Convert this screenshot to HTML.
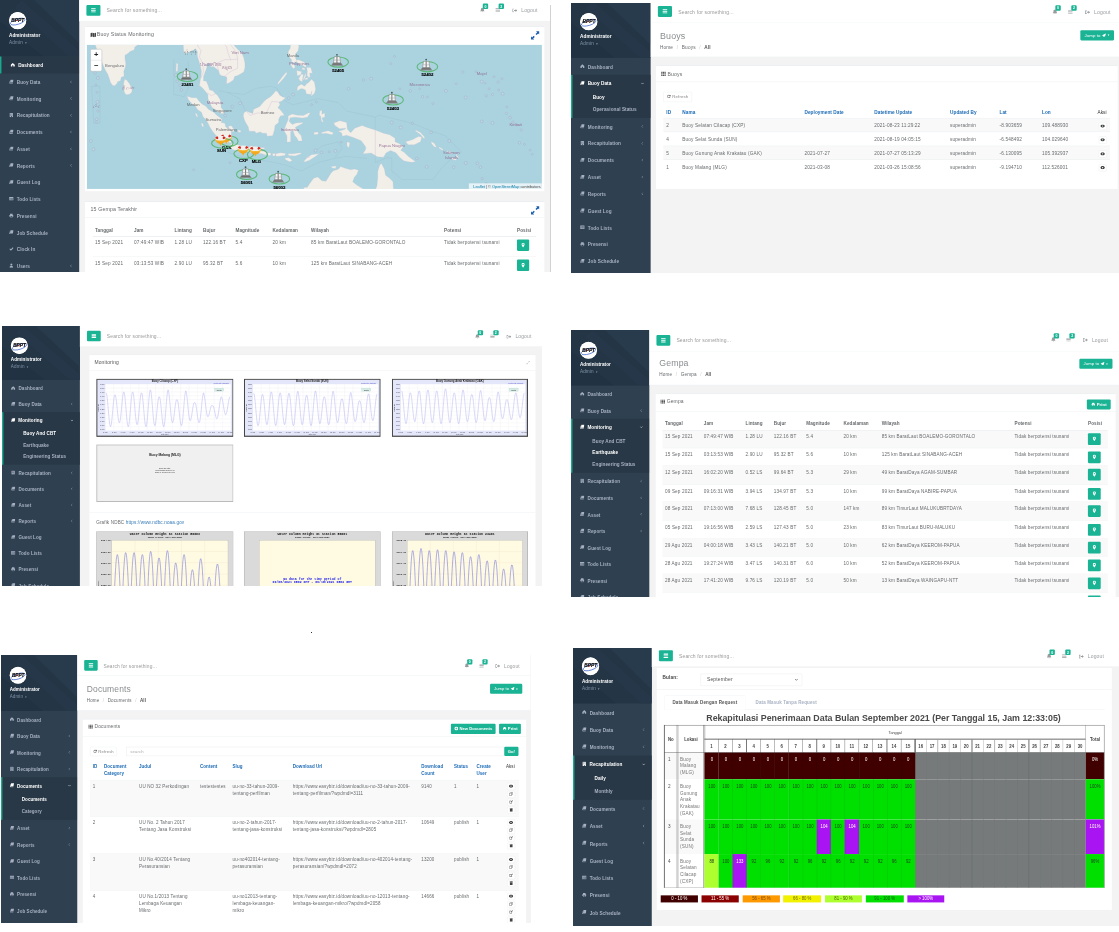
<!DOCTYPE html><html lang="id"><head><meta charset="utf-8"><title>Buoy Monitoring Screens</title><style>
*{box-sizing:border-box}
html,body{margin:0;padding:0}
body{width:1119px;height:932px;position:relative;overflow:hidden;background:#fff;font-family:"Liberation Sans",sans-serif;}
.panel{position:absolute;overflow:hidden;background:#f3f3f4}
.inner{position:absolute;left:0;top:0;transform-origin:0 0;background:#f3f3f4;color:#676a6c;font-size:13px;line-height:18.57px;overflow:hidden;letter-spacing:.4px;filter:contrast(1)}
.inner b,.th,.thb,.mi,.si,.nm,.btn{letter-spacing:.15px}
svg text{letter-spacing:0}
.ab{position:absolute}
.sb{position:absolute;left:0;top:0;width:220px;height:100%;background:#2f4050;overflow:hidden}
.nh{position:relative;background:#243646;overflow:hidden}
.nh .pat{position:absolute;left:0;top:0;width:220px;height:100%}
.logo{position:absolute;left:25px;width:48px;height:48px;border-radius:50%;background:#fff;overflow:hidden}
.nm{position:absolute;left:25px;color:#fff;font-weight:bold;font-size:13px;white-space:nowrap}
.rl{position:absolute;left:25px;color:#8095a8;font-size:13px;white-space:nowrap}
.mi{position:relative;height:46.5px;color:#a7b1c2;font-weight:bold;font-size:13px;white-space:nowrap}
.mi .ic{position:absolute;left:25px;top:16px;width:13px;height:13px}
.mi .tx{position:absolute;left:46.5px;top:16.5px}
.mi .ar{position:absolute;left:194px}
.grp{background:#293846;border-left:4px solid #19aa8d;padding-bottom:8px}
.grp .mi{color:#fff}
.grp .mi .ic{left:21px}
.grp .mi .tx{left:42px}
.grp .mi .ar{left:189px}
.si{height:32.5px;padding:8px 0 0 56px;color:#a7b1c2;font-weight:bold;font-size:13px;white-space:nowrap}
.si.on{color:#fff}
.act1{background:#293846;border-left:4px solid #19aa8d;color:#fff}
.act1 .ic{left:25px}.act1 .tx{left:46.5px}
.nav{position:absolute;left:220px;top:0;right:0;background:#fff;border-bottom:1px solid #e7eaec}
.hb{position:absolute;background:#1ab394;border-radius:3px}
.hb i{position:absolute;left:13px;width:13px;height:2.6px;background:#fff;border-radius:1px}
.srch{position:absolute;color:#9a9a9a;font-size:14px;white-space:nowrap;margin-top:2px}
.tr{position:absolute;color:#999c9e;font-size:14px;white-space:nowrap}
.bdg{position:absolute;background:#1ab394;color:#fff;font-size:10px;font-weight:bold;border-radius:3px;text-align:center;line-height:15px;height:15px;width:15px}
.ibox{position:absolute;background:#fff;border-top:2px solid #e7eaec}
.ibt{position:absolute;left:0;right:0;top:0;border-bottom:1px solid #e7eaec;color:#676a6c;font-size:14px;white-space:nowrap}
.hd{position:absolute;left:220px;right:0;background:#fff;border-bottom:1px solid #e7eaec}
.h2{position:absolute;font-size:24.5px;color:#8a8d8f;white-space:nowrap;line-height:28px}
.bc{position:absolute;font-size:13px;color:#676a6c;white-space:nowrap}
.bc s{text-decoration:none;color:#ccc;padding:0 6px}
.bc b{color:#555}
.btn{position:absolute;background:#1ab394;color:#fff;border-radius:3px;font-size:12px;font-weight:bold;text-align:center;white-space:nowrap}
.t{position:absolute;white-space:nowrap}
.th{position:absolute;white-space:nowrap;font-weight:bold;color:#676a6c}
.thb{position:absolute;white-space:nowrap;font-weight:bold;color:#1c6bb5}
.ln{position:absolute;height:1px;background:#e7eaec}
.zb{position:absolute;background:#f9f9f9}
.t,.th,.thb{margin-top:2px}
</style></head><body><div class="panel" style="left:0px;top:0px;width:551px;height:272px"><div class="inner" style="top:0.00px;width:1530.6px;height:757.6px;transform:scale(0.36,0.36)"><div class="sb"><div class="nh" style="height:157px"><svg class="pat" viewBox="0 0 220 157" preserveAspectRatio="none"><path d="M95 0 L220 0 L220 120 Z" fill="#283b4c"/><path d="M0 60 L120 157 L0 157 Z" fill="#213242"/><path d="M60 0 L220 140 L220 157 L190 157 L40 20 Z" fill="#263949" opacity=".6"/></svg><div class="logo" style="top:33px"><svg viewBox="0 0 48 48" width="48" height="48"><circle cx="24" cy="24" r="24" fill="#fff"/><ellipse cx="24" cy="27" rx="21" ry="7.500" fill="none" stroke="#2450c8" stroke-width="1.700" transform="rotate(-17 24 27)"/><text x="24.500" y="27.500" font-family="Liberation Sans,sans-serif" font-size="13.500" font-weight="bold" font-style="italic" text-anchor="middle" fill="#0a0a0a" stroke="#0a0a0a" stroke-width="0.500">BPPT</text><path d="M19 25.500 L23.500 21.500 L22.500 25.500 Z" fill="#d22"/></svg></div><div class="nm" style="top:89px">Administrator</div><div class="rl" style="top:107.5px">Admin <span style="font-size:8px">&#9660;</span></div></div><div class="mi act1"><svg class="ic" viewBox="0 0 13 13"><path d="M1 7 L6.5 2 L12 7 L12 12 L8 12 L8 8.5 L5 8.5 L5 12 L1 12 Z" fill="#fff"/></svg><span class="tx">Dashboard</span></div><div class="mi"><svg class="ic" viewBox="0 0 13 13"><path d="M4.300 1.500H12.600L11 9.300H2.700Z" fill="#a7b1c2"/><path d="M2.900 3.300L0.700 9.800Q0.300 12.200 2.500 12.200H10.400L10.900 10.700H3Q1.800 10.700 2.200 9.500L3.600 3.300Z" fill="#a7b1c2"/></svg><span class="tx">Buoy Data</span><svg class="ar" width="6" height="9" viewBox="0 0 6 9" style="top:19px"><path d="M5 1L1.500 4.500L5 8" fill="none" stroke="#a7b1c2" stroke-width="1.300"/></svg></div><div class="mi"><svg class="ic" viewBox="0 0 13 13"><path d="M4.300 1.500H12.600L11 9.300H2.700Z" fill="#a7b1c2"/><path d="M2.900 3.300L0.700 9.800Q0.300 12.200 2.500 12.200H10.400L10.900 10.700H3Q1.800 10.700 2.200 9.500L3.600 3.300Z" fill="#a7b1c2"/></svg><span class="tx">Monitoring</span><svg class="ar" width="6" height="9" viewBox="0 0 6 9" style="top:19px"><path d="M5 1L1.500 4.500L5 8" fill="none" stroke="#a7b1c2" stroke-width="1.300"/></svg></div><div class="mi"><svg class="ic" viewBox="0 0 13 13"><path d="M2 1 H11 V12.5 H2 Z" fill="#a7b1c2"/><path d="M4 3h1.6v1.6H4zM7.4 3H9v1.6H7.4zM4 6h1.6v1.6H4zM7.4 6H9v1.6H7.4zM5.5 9.5h2v3h-2z" fill="#2f4050"/></svg><span class="tx">Recapitulation</span><svg class="ar" width="6" height="9" viewBox="0 0 6 9" style="top:19px"><path d="M5 1L1.500 4.500L5 8" fill="none" stroke="#a7b1c2" stroke-width="1.300"/></svg></div><div class="mi"><svg class="ic" viewBox="0 0 13 13"><path d="M4.300 1.500H12.600L11 9.300H2.700Z" fill="#a7b1c2"/><path d="M2.900 3.300L0.700 9.800Q0.300 12.200 2.500 12.200H10.400L10.900 10.700H3Q1.800 10.700 2.200 9.500L3.600 3.300Z" fill="#a7b1c2"/></svg><span class="tx">Documents</span><svg class="ar" width="6" height="9" viewBox="0 0 6 9" style="top:19px"><path d="M5 1L1.500 4.500L5 8" fill="none" stroke="#a7b1c2" stroke-width="1.300"/></svg></div><div class="mi"><svg class="ic" viewBox="0 0 13 13"><path d="M4.300 1.500H12.600L11 9.300H2.700Z" fill="#a7b1c2"/><path d="M2.900 3.300L0.700 9.800Q0.300 12.200 2.500 12.200H10.400L10.900 10.700H3Q1.800 10.700 2.200 9.500L3.600 3.300Z" fill="#a7b1c2"/></svg><span class="tx">Asset</span><svg class="ar" width="6" height="9" viewBox="0 0 6 9" style="top:19px"><path d="M5 1L1.500 4.500L5 8" fill="none" stroke="#a7b1c2" stroke-width="1.300"/></svg></div><div class="mi"><svg class="ic" viewBox="0 0 13 13"><path d="M4.300 1.500H12.600L11 9.300H2.700Z" fill="#a7b1c2"/><path d="M2.900 3.300L0.700 9.800Q0.300 12.200 2.500 12.200H10.400L10.900 10.700H3Q1.800 10.700 2.200 9.500L3.600 3.300Z" fill="#a7b1c2"/></svg><span class="tx">Reports</span><svg class="ar" width="6" height="9" viewBox="0 0 6 9" style="top:19px"><path d="M5 1L1.500 4.500L5 8" fill="none" stroke="#a7b1c2" stroke-width="1.300"/></svg></div><div class="mi"><svg class="ic" viewBox="0 0 13 13"><path d="M4.300 1.500H12.600L11 9.300H2.700Z" fill="#a7b1c2"/><path d="M2.900 3.300L0.700 9.800Q0.300 12.200 2.500 12.200H10.400L10.900 10.700H3Q1.800 10.700 2.200 9.500L3.600 3.300Z" fill="#a7b1c2"/></svg><span class="tx">Guest Log</span></div><div class="mi"><svg class="ic" viewBox="0 0 13 13"><path d="M0.5 2 H12.5 V11.5 H0.5 Z" fill="#a7b1c2"/><path d="M1.8 5h2.6v1.5H1.8zM5.3 5h2.6v1.5H5.3zM8.8 5h2.6v1.5H8.8zM1.8 8h2.6v1.5H1.8zM5.3 8h2.6v1.5H5.3zM8.8 8h2.6v1.5H8.8z" fill="#2f4050"/></svg><span class="tx">Todo Lists</span></div><div class="mi"><svg class="ic" viewBox="0 0 13 13"><path d="M3 1.5h7V5H3z M1 5h11v5H10v2.5H3V10H1z" fill="#a7b1c2"/><path d="M4 8.5h5v3H4z" fill="#2f4050"/></svg><span class="tx">Presensi</span></div><div class="mi"><svg class="ic" viewBox="0 0 13 13"><path d="M4.300 1.500H12.600L11 9.300H2.700Z" fill="#a7b1c2"/><path d="M2.900 3.300L0.700 9.800Q0.300 12.200 2.500 12.200H10.400L10.900 10.700H3Q1.800 10.700 2.200 9.500L3.600 3.300Z" fill="#a7b1c2"/></svg><span class="tx">Job Schedule</span></div><div class="mi"><svg class="ic" viewBox="0 0 13 13"><path d="M1 7 L3 5 L5.3 7.4 L10.5 2 L12.5 4 L5.3 11.5 Z" fill="#a7b1c2"/></svg><span class="tx">Clock In</span></div><div class="mi"><svg class="ic" viewBox="0 0 13 13"><circle cx="6.5" cy="3.8" r="2.8" fill="#a7b1c2"/><path d="M1.5 12.5 C1.5 8 4 7 6.5 7 S11.5 8 11.5 12.5 Z" fill="#a7b1c2"/></svg><span class="tx">Users</span><svg class="ar" width="6" height="9" viewBox="0 0 6 9" style="top:19px"><path d="M5 1L1.500 4.500L5 8" fill="none" stroke="#a7b1c2" stroke-width="1.300"/></svg></div></div><div class="nav" style="height:58.5px"><div class="hb" style="left:20px;top:13.5px;width:39px;height:30px"><i style="top:9px"></i><i style="top:13.7px"></i><i style="top:18.4px"></i></div><div class="srch" style="left:76px;top:18px">Search for something...</div><div class="tr" style="right:37.5px;top:20px"><svg width="14" height="12" viewBox="0 0 14 12" style="vertical-align:-1px;margin-right:11px"><path d="M0 1h5v2H2v6h3v2H0z M5 4.5h4V2l5 4-5 4V7.500H5z" fill="#999c9e"/></svg>Logout</div><svg class="ab" style="right:141.5px;top:22px" width="13" height="12" viewBox="0 0 15 13"><path d="M0 1h15v2H0zM0 5.500h15v2H0zM0 10h15v2H0z" fill="#999c9e"/></svg><div class="bdg" style="right:130.5px;top:10px">2</div><svg class="ab" style="right:183.5px;top:21px" width="14" height="14" viewBox="0 0 14 14"><path d="M7 0.500c-3 0-4.200 2.200-4.200 5 0 3-1.800 4-1.800 5h12c0-1-1.800-2-1.800-5 0-2.800-1.200-5-4.200-5zM5.300 11.700a1.800 1.800 0 0 0 3.400 0z" fill="#999c9e"/></svg><div class="bdg" style="right:174.5px;top:10px">0</div></div><div class="ibox" style="left:235.6px;top:72.8px;width:1276.9px;height:458.6px"><div class="ibt" style="height:49.4px;border-bottom:none"><svg class="ab" style="left:15.0px;top:15px" width="16" height="14" viewBox="0 0 16 14"><path d="M0 2.500l4.700-2.300v11.300l-4.700 2.300zM5.600 0.200l4.800 2.300v11.300l-4.800-2.300zM11.300 2.500l4.700-2.300v11.300l-4.700 2.300z" fill="#444"/></svg><span class="ab" style="left:33.3px;top:12px;font-size:14.5px">Buoy Status Monitoring</span><svg class="ab" style="left:1238.1px;top:11px" width="25" height="25" viewBox="0 0 25 25"><path d="M24 1v9l-3-3-4.500 4.500-3-3 4.500-4.500-3-3zM1 24v-9l3 3 4.500-4.500 3 3-4.500 4.500 3 3z" fill="#1c5fb0"/></svg></div><div class="ab" style="left:5.8px;top:49.4px;width:1264.2px;height:400.8px"><svg viewBox="0 0 455.1 144.3" width="100%" height="100%" preserveAspectRatio="none" style="display:block;font-family:&quot;Liberation Sans&quot;,sans-serif"><rect width="455.1" height="144.3" fill="#aad3df"/><g fill="none" stroke="#97b4c9" stroke-width="0.35" opacity=".75"><path d="M87.1 14.4 L87.1 49.9 L97.4 52.0 L101.5 43.7 L101.5 16.5"/><path d="M132.3 45.8 L140.6 47.8 L157.0 49.9 L169.3 43.7 L183.7 41.6 L189.9 43.3"/><path d="M231.0 54.0 L251.5 58.1 L259.8 66.4 L288.5 72.5 L288.5 84.5"/><path d="M288.5 112.6 L288.5 118.0 L300.0 113.0 L305.0 113.4 L305.0 126.4 L315.2 134.8 L346.1 134.8 L354.3 124.3 L362.5 115.9 L374.8 107.6 L358.4 91.1 L346.1 86.9 L325.5 78.7 L292.6 70.5 L288.5 72.5"/><path d="M198.1 120.1 L214.5 126.4 L231.0 118.0 L247.4 113.8 L259.8 111.7 L280.3 113.8"/><path d="M140.6 107.6 L161.1 113.8 L181.7 116.7 L198.1 120.1"/><path d="M189.9 43.3 L198.1 56.1 L206.3 60.2 L222.8 56.1 L231.0 54.0"/><path d="M159.1 66.8 L152.9 54.0 L140.6 47.8"/><path d="M4.9 41.6 L7.0 78.7 L13.2 78.7 L13.2 41.6 L4.9 41.6"/><path d="M226.9 107.6 L235.1 101.4 L251.5 97.2 L255.6 103.4 L247.4 113.8"/></g><g fill="#f2efe9" stroke="#c9c1d0" stroke-width="0.25"><path d="M7.0 -2.8 L9.0 1.5 L10.3 5.4 L12.3 10.5 L14.4 15.2 L16.4 20.7 L18.5 25.3 L21.0 29.5 L22.6 34.1 L23.8 37.9 L25.9 40.8 L27.9 41.2 L30.4 38.7 L30.8 37.0 L33.7 36.2 L34.5 32.5 L37.4 31.6 L37.0 26.6 L38.6 22.4 L39.0 19.0 L38.2 13.9 L38.2 10.5 L41.1 8.8 L43.6 6.7 L47.3 5.4 L48.1 2.4 L52.2 -0.6 L56.3 -3.7 L7.0 -4.1Z"/><path d="M36.6 40.8 L37.8 34.5 L39.9 35.4 L42.7 39.1 L45.2 43.7 L45.2 47.4 L42.7 49.5 L39.5 50.1 L37.8 48.2 L37.0 44.5Z"/><path d="M96.2 -4.1 L96.6 1.5 L97.0 7.5 L100.3 8.8 L103.6 6.7 L106.9 5.4 L108.9 4.1 L110.6 7.1 L110.6 11.4 L112.2 16.5 L113.8 22.4 L114.7 26.6 L114.3 31.2 L113.4 36.2 L112.6 40.8 L114.7 42.4 L117.1 44.9 L119.2 47.4 L121.2 49.9 L121.2 54.0 L122.9 57.7 L124.9 62.3 L127.4 64.3 L130.3 66.4 L134.0 68.8 L137.3 68.8 L137.3 66.4 L134.4 63.1 L134.0 58.6 L133.6 55.3 L130.7 50.7 L128.2 48.7 L126.2 46.2 L122.9 45.3 L121.2 40.4 L119.6 36.6 L116.7 36.2 L116.7 32.0 L118.4 27.4 L120.0 23.2 L120.0 19.0 L123.7 18.6 L123.7 22.0 L127.0 22.0 L129.5 24.1 L131.9 26.2 L132.8 29.5 L134.8 31.2 L138.1 31.6 L140.2 32.9 L139.7 39.1 L142.2 38.3 L146.7 35.4 L148.0 31.6 L150.4 31.2 L153.3 29.5 L157.0 27.4 L158.2 22.8 L158.2 18.6 L157.0 13.1 L155.8 10.1 L153.7 7.1 L150.8 4.5 L148.0 1.5 L145.9 -4.1Z"/><path d="M100.3 51.5 L105.2 53.0 L109.7 53.0 L112.6 56.9 L115.1 59.4 L118.8 61.4 L121.7 64.7 L124.1 66.0 L127.0 67.6 L129.9 70.5 L132.8 72.5 L135.2 74.6 L134.4 77.9 L138.1 78.7 L138.9 82.4 L142.6 84.1 L144.7 86.9 L144.3 91.9 L144.3 98.5 L141.8 97.2 L138.9 98.9 L136.5 95.2 L132.3 92.7 L129.5 91.1 L125.8 86.5 L123.3 82.8 L121.2 78.3 L118.8 74.6 L116.3 72.1 L114.7 67.6 L111.0 65.1 L108.5 61.4 L105.2 59.0 L101.9 55.3Z"/><path d="M141.4 81.6 L144.7 81.2 L147.5 85.3 L147.1 87.3 L144.3 86.1 L142.2 83.2Z"/><path d="M151.2 85.3 L153.7 85.7 L154.1 87.3 L151.7 87.8Z"/><path d="M141.4 102.6 L144.7 98.9 L147.5 99.3 L152.5 100.5 L155.4 102.2 L161.1 103.0 L164.4 101.0 L167.3 102.2 L171.8 103.0 L174.3 106.3 L179.2 106.8 L179.6 110.5 L174.3 108.8 L168.1 108.8 L161.1 107.2 L155.4 106.3 L151.2 106.3 L146.3 105.1 L142.6 103.0Z"/><path d="M172.2 103.0 L177.6 102.8 L177.6 104.3 L172.6 104.3Z"/><path d="M179.6 108.0 L184.1 108.4 L184.1 110.5 L181.7 110.9Z"/><path d="M185.8 108.8 L188.6 108.8 L188.2 111.3 L185.8 111.1Z"/><path d="M189.1 109.2 L193.6 108.0 L198.9 108.8 L198.1 110.9 L191.9 111.7 L189.1 111.7Z"/><path d="M201.4 109.2 L206.3 109.2 L213.7 108.0 L214.5 109.2 L208.4 111.3 L201.8 110.9Z"/><path d="M198.1 113.4 L202.2 113.0 L205.5 115.9 L203.0 117.2 L198.9 115.1Z"/><path d="M216.6 117.2 L220.7 112.6 L224.8 110.1 L232.2 109.2 L228.9 111.7 L222.8 115.5 L218.7 117.2Z"/><path d="M157.0 68.4 L159.5 66.4 L162.3 67.6 L166.0 68.8 L166.9 64.7 L173.0 61.9 L177.1 56.9 L180.0 54.4 L183.7 52.0 L186.2 49.5 L189.1 46.2 L191.1 47.4 L192.8 50.3 L196.0 52.4 L198.9 53.2 L194.8 56.5 L192.3 57.3 L193.2 60.2 L191.1 63.1 L194.0 65.6 L197.7 70.5 L193.6 71.3 L191.9 74.6 L191.9 77.9 L188.2 80.8 L187.8 84.9 L186.6 89.0 L185.8 91.1 L180.4 91.5 L179.6 88.6 L175.9 88.6 L173.4 87.3 L169.3 88.6 L168.1 86.5 L162.3 86.5 L161.5 82.0 L159.1 78.3 L157.4 74.6 L156.6 71.3Z"/><path d="M201.4 71.3 L205.5 69.3 L210.4 70.5 L216.6 70.9 L221.5 68.4 L223.6 68.0 L220.7 72.5 L215.8 73.4 L208.4 72.5 L203.4 73.0 L202.2 76.7 L205.5 79.9 L209.2 78.3 L215.8 77.9 L216.2 78.7 L210.4 81.6 L208.4 82.8 L211.7 88.2 L214.5 91.1 L215.4 96.4 L211.7 96.4 L210.0 93.1 L208.0 91.1 L206.3 86.1 L203.9 86.9 L203.9 93.5 L203.9 97.2 L200.2 97.7 L200.2 91.1 L197.7 86.9 L197.3 85.7 L199.3 79.9 L201.4 75.0Z"/><path d="M233.0 66.4 L235.1 65.6 L235.1 69.7 L238.0 68.4 L238.0 72.5 L235.1 73.0 L236.7 77.9 L234.7 76.7 L233.9 71.3 L232.6 70.5Z"/><path d="M226.9 87.8 L231.0 87.3 L231.8 89.4 L227.7 90.2Z"/><path d="M234.7 87.8 L241.3 86.1 L246.6 88.2 L245.4 90.2 L239.2 88.6 L235.1 89.0Z"/><path d="M204.3 -4.1 L203.4 3.7 L201.4 7.1 L201.8 10.5 L203.0 13.1 L204.7 14.8 L204.7 17.3 L207.6 18.2 L209.6 16.9 L212.9 19.9 L215.8 20.7 L218.2 22.4 L219.5 22.4 L219.1 20.3 L217.4 17.3 L214.5 16.1 L211.7 15.2 L209.6 15.6 L208.8 13.1 L208.8 8.8 L211.3 6.3 L212.1 2.0 L211.3 -4.1Z"/><path d="M219.9 27.0 L222.8 27.9 L223.6 32.0 L221.9 32.9 L221.1 29.5Z"/><path d="M215.4 22.8 L218.7 24.1 L217.4 25.3 L215.4 24.5Z"/><path d="M203.9 19.0 L207.1 19.0 L208.4 22.4 L206.7 24.1 L205.1 22.0Z"/><path d="M190.7 40.0 L193.2 37.9 L196.9 33.7 L200.2 29.1 L199.7 27.4 L196.0 31.6 L191.5 37.5Z"/><path d="M210.0 25.8 L215.0 27.0 L213.7 30.4 L210.4 31.2Z"/><path d="M212.1 33.7 L214.5 29.5 L216.6 29.9 L215.4 37.0 L212.9 35.8Z"/><path d="M216.2 35.0 L218.7 28.3 L219.1 30.8 L217.4 35.0Z"/><path d="M219.9 22.8 L224.0 22.8 L225.6 28.7 L222.8 28.3 L222.4 33.3 L220.3 30.8 L220.7 27.4Z"/><path d="M217.8 34.1 L220.7 32.9 L221.1 34.5 L218.7 35.2Z"/><path d="M210.4 45.8 L210.8 42.0 L214.5 39.5 L217.8 41.6 L219.9 39.1 L221.9 37.9 L224.8 34.5 L227.7 37.5 L228.9 44.5 L227.7 48.7 L224.4 51.5 L225.2 46.2 L224.0 49.9 L219.5 49.1 L218.7 45.3 L216.2 44.1 L213.7 44.1 L210.8 46.2Z"/><path d="M247.0 78.3 L253.2 76.2 L259.8 77.9 L260.6 84.5 L263.9 88.2 L268.0 83.6 L275.4 80.8 L280.3 82.8 L288.5 85.3 L296.7 88.6 L302.9 90.2 L308.3 93.5 L308.3 97.2 L313.2 99.3 L316.5 102.2 L314.0 105.5 L317.3 107.6 L321.4 111.7 L328.8 117.2 L324.7 117.6 L317.3 116.3 L312.8 112.6 L309.1 108.0 L303.7 105.9 L299.2 108.4 L296.7 112.6 L290.6 112.2 L284.4 108.4 L279.9 108.8 L276.2 109.2 L279.1 104.3 L278.7 101.8 L274.5 96.0 L265.9 92.7 L259.8 90.6 L255.6 91.5 L254.8 88.2 L251.5 86.5 L257.7 84.9 L259.3 83.6 L252.8 84.1 L248.2 80.8Z"/><path d="M318.9 97.2 L325.5 95.2 L331.7 91.9 L335.0 92.3 L333.7 97.2 L327.6 100.1 L321.4 100.1Z"/><path d="M328.8 85.3 L333.7 87.8 L337.8 92.3 L337.4 94.4 L333.7 89.8 L328.8 86.5Z"/><path d="M344.4 96.8 L347.7 98.9 L349.8 102.6 L347.3 102.2 L344.8 98.9Z"/><path d="M352.2 102.2 L356.3 104.7 L355.5 105.5 L352.2 103.4Z"/><path d="M360.9 105.9 L365.8 109.2 L365.0 109.7 L360.4 107.2Z"/><path d="M365.0 113.0 L369.9 114.2 L369.1 115.5 L365.4 114.7Z"/><path d="M369.1 108.8 L372.0 113.0 L370.7 113.4 L369.1 110.1Z"/><path d="M260.2 97.2 L263.0 98.1 L262.2 103.0 L260.2 101.4Z"/><path d="M211.3 153.3 L211.7 146.8 L214.5 143.8 L217.0 146.8 L217.0 142.9 L220.7 142.5 L222.8 139.1 L226.9 133.6 L231.0 132.3 L235.1 136.1 L239.2 136.5 L241.7 132.7 L244.1 128.5 L246.6 126.0 L251.5 124.7 L254.0 121.8 L257.7 123.4 L263.9 125.1 L268.0 124.3 L271.7 125.5 L270.0 129.8 L267.6 132.7 L265.9 137.0 L270.0 140.4 L276.2 144.2 L282.4 147.7 L287.7 147.7 L290.2 141.2 L291.0 132.7 L291.0 126.8 L293.0 120.1 L294.7 118.8 L297.6 124.3 L298.8 130.6 L302.9 133.6 L306.2 137.0 L306.6 143.4 L309.1 153.3Z"/><path d="M244.5 121.8 L249.5 121.3 L248.7 123.9 L245.4 123.4Z"/><path d="M89.6 18.6 L91.2 19.0 L90.8 26.6 L89.2 26.6Z"/><path d="M108.1 68.8 L109.7 68.8 L111.4 72.1 L110.1 72.1Z"/><path d="M114.3 78.7 L115.9 78.7 L117.1 81.6 L115.5 82.0Z"/></g><g fill="none" stroke="#c9a9cf" stroke-width="0.3"><path d="M288.5 85.3 L288.5 112.2"/><path d="M159.5 66.4 L163.2 70.9 L170.2 68.4 L179.6 68.4 L185.0 56.9 L192.3 57.3"/><path d="M120.4 47.8 L124.5 51.1 L128.6 49.1"/><path d="M114.3 33.3 L116.7 27.0 L115.9 18.6 L112.6 12.2 L114.3 5.8 L111.0 1.5 L110.6 -4.1"/><path d="M131.9 26.2 L129.9 18.6 L138.5 14.8 L143.9 15.2 L150.8 14.4 L150.8 23.7 L144.3 26.6 L138.1 31.6"/><path d="M143.9 15.2 L141.4 8.8 L139.7 2.0 L136.5 -1.9"/><path d="M150.8 14.4 L149.6 8.0 L146.7 3.7 L141.4 -2.8"/><path d="M219.1 113.4 L222.8 112.6 L223.2 111.7"/></g><g fill="#b9d9e3" stroke="#a29cc0" stroke-width="0.35"><circle cx="261.8" cy="44.1" r="1.3"/><circle cx="276.6" cy="35.4" r="1.1"/><circle cx="284.4" cy="34.1" r="1.5"/><circle cx="304.1" cy="19.0" r="0.9"/><circle cx="307.8" cy="11.8" r="0.9"/><circle cx="313.2" cy="44.1" r="0.9"/><circle cx="323.5" cy="46.2" r="1.3"/><circle cx="332.9" cy="44.1" r="0.9"/><circle cx="335.8" cy="52.0" r="1.1"/><circle cx="340.7" cy="52.4" r="0.9"/><circle cx="346.1" cy="59.0" r="0.9"/><circle cx="359.2" cy="46.2" r="1.5"/><circle cx="378.9" cy="52.8" r="1.5"/><circle cx="369.5" cy="39.1" r="0.9"/><circle cx="376.1" cy="27.4" r="1.1"/><circle cx="389.2" cy="27.0" r="0.9"/><circle cx="395.0" cy="37.0" r="1.5"/><circle cx="398.3" cy="38.7" r="0.9"/><circle cx="402.4" cy="44.1" r="0.9"/><circle cx="405.7" cy="49.9" r="1.1"/><circle cx="411.8" cy="45.3" r="0.9"/><circle cx="415.9" cy="49.1" r="1.5"/><circle cx="407.3" cy="32.0" r="0.9"/><circle cx="411.4" cy="37.5" r="1.1"/><circle cx="415.1" cy="34.1" r="0.9"/><circle cx="399.5" cy="51.1" r="1.1"/><circle cx="395.0" cy="76.7" r="1.3"/><circle cx="405.7" cy="78.3" r="1.5"/><circle cx="419.6" cy="68.8" r="1.1"/><circle cx="420.0" cy="62.3" r="0.9"/><circle cx="423.3" cy="73.0" r="1.3"/><circle cx="426.2" cy="77.5" r="1.1"/><circle cx="430.3" cy="80.4" r="0.9"/><circle cx="434.4" cy="85.3" r="1.1"/><circle cx="432.8" cy="98.1" r="1.3"/><circle cx="443.5" cy="105.5" r="0.9"/><circle cx="445.5" cy="109.7" r="0.9"/><circle cx="437.7" cy="99.7" r="0.9"/><circle cx="325.5" cy="78.7" r="1.1"/><circle cx="314.0" cy="82.8" r="1.5"/><circle cx="305.0" cy="77.9" r="1.5"/><circle cx="344.4" cy="87.8" r="1.3"/><circle cx="362.5" cy="96.4" r="1.5"/><circle cx="378.9" cy="118.4" r="1.5"/><circle cx="390.5" cy="118.8" r="1.3"/><circle cx="393.7" cy="122.6" r="1.3"/><circle cx="395.4" cy="134.0" r="1.1"/><circle cx="397.4" cy="142.1" r="1.1"/><circle cx="400.3" cy="141.2" r="1.1"/><circle cx="399.5" cy="138.7" r="0.9"/><circle cx="367.0" cy="122.6" r="1.3"/><circle cx="339.9" cy="122.2" r="1.5"/><circle cx="330.0" cy="113.8" r="1.3"/><circle cx="11.1" cy="33.3" r="1.5"/><circle cx="8.2" cy="28.3" r="1.3"/><circle cx="9.0" cy="40.4" r="0.9"/><circle cx="10.3" cy="47.8" r="0.9"/><circle cx="10.7" cy="57.3" r="1.5"/><circle cx="11.1" cy="66.4" r="1.1"/><circle cx="9.9" cy="74.6" r="1.3"/><circle cx="9.5" cy="77.1" r="1.1"/><circle cx="6.6" cy="104.7" r="1.5"/><circle cx="4.1" cy="96.4" r="1.5"/><circle cx="106.9" cy="125.1" r="0.9"/><circle cx="143.4" cy="118.0" r="0.9"/><circle cx="94.5" cy="45.3" r="1.3"/><circle cx="93.3" cy="40.8" r="1.3"/><circle cx="90.4" cy="36.6" r="1.3"/><circle cx="89.2" cy="30.4" r="1.5"/><circle cx="248.7" cy="106.3" r="1.5"/><circle cx="242.5" cy="107.2" r="0.9"/><circle cx="254.4" cy="97.7" r="0.9"/><circle cx="234.7" cy="107.6" r="1.3"/><circle cx="228.9" cy="105.9" r="1.5"/><circle cx="224.8" cy="60.2" r="0.9"/><circle cx="229.7" cy="57.3" r="0.9"/><circle cx="201.8" cy="53.6" r="1.3"/><circle cx="206.3" cy="49.9" r="1.5"/><circle cx="145.5" cy="61.9" r="1.3"/><circle cx="153.3" cy="58.6" r="1.5"/><circle cx="138.5" cy="70.9" r="1.3"/></g><g font-size="4.2" text-anchor="middle"><text x="27.9" y="22.2" fill="#555" opacity=".85">Bengaluru</text><text x="106.4" y="61.2" fill="#555" opacity=".85">Medan</text><text x="128.2" y="59.5" fill="#8d618b" opacity=".85">Malaysia</text><text x="135.6" y="67.8" fill="#555" opacity=".85">Singapore</text><text x="126.6" y="76.8" fill="#555" opacity=".85">Sumatra</text><text x="139.5" y="85.9" fill="#555" opacity=".85">Palembang</text><text x="180.8" y="69.8" fill="#555" opacity=".85">Borneo</text><text x="203.0" y="86.3" fill="#8d618b" opacity=".85">Indonesia</text><text x="153.3" y="9.8" fill="#8d618b" opacity=".85">Viet Nam</text><text x="206.2" y="12.4" fill="#555" opacity=".85">Manila</text><text x="212.5" y="20.4" fill="#8d618b" opacity=".85">Philippines</text><text x="332.9" y="40.9" fill="#8d618b" opacity=".85">Micronesia</text><text x="395.0" y="30.1" fill="#8d618b" opacity=".85">Majel</text><text x="429.1" y="81.3" fill="#8d618b" opacity=".85">Kiribati</text><text x="305.0" y="101.9" fill="#8d618b" opacity=".85">Papua Niugini</text><text x="364.6" y="109.8" fill="#8d618b" opacity=".85">Solomon</text><text x="364.6" y="114.4" fill="#8d618b" opacity=".85">Islands</text><text x="41.1" y="44.3" fill="#8d618b" opacity=".85">ශ්‍රී ලංකා</text><text x="9.9" y="62.8" fill="#8d618b" opacity=".85">ދިވެހި</text><text x="103.6" y="8.5" fill="#555" opacity=".85">ရန်ကုန်</text><text x="140.2" y="24.6" fill="#8d618b" opacity=".85">កម្ពុជា</text><text x="123.3" y="21.7" fill="#8d618b" opacity=".85">ประเทศไทย</text></g><ellipse cx="100.7" cy="31.7" rx="10.3" ry="5.1" fill="none" stroke="#55b56e" stroke-width="1.1" opacity=".9"/><circle cx="99.5" cy="24.5" r="0.9" fill="#4a5a5a"/><path d="M96.8 26.3 L102.3 26.3 L103.1 32.6 L96.0 32.6Z" fill="#f6f6f6" stroke="#777" stroke-width="0.5"/><path d="M99.5 26.3 V32.6" stroke="#666" stroke-width="0.9" fill="none"/><path d="M96.5 29.8 H102.7" stroke="#999" stroke-width="0.5" fill="none"/><path d="M95.8 32.6 L103.3 32.6 L105.3 35.1 L93.9 35.1Z" fill="#8d8d8d" stroke="#666" stroke-width="0.3"/><path d="M95.1 33.8 H104.1" stroke="#555" stroke-width="0.6" fill="none"/><text x="100.7" y="41.3" font-size="4.3" font-weight="bold" text-anchor="middle" fill="#000" stroke="#000" stroke-width="0.150">23401</text><ellipse cx="251.4" cy="17.4" rx="10.3" ry="5.1" fill="none" stroke="#55b56e" stroke-width="1.1" opacity=".9"/><circle cx="250.2" cy="10.2" r="0.9" fill="#4a5a5a"/><path d="M247.5 12.0 L253.0 12.0 L253.8 18.3 L246.7 18.3Z" fill="#f6f6f6" stroke="#777" stroke-width="0.5"/><path d="M250.2 12.0 V18.3" stroke="#666" stroke-width="0.9" fill="none"/><path d="M247.2 15.5 H253.4" stroke="#999" stroke-width="0.5" fill="none"/><path d="M246.5 18.3 L254.0 18.3 L256.0 20.8 L244.6 20.8Z" fill="#8d8d8d" stroke="#666" stroke-width="0.3"/><path d="M245.8 19.5 H254.8" stroke="#555" stroke-width="0.6" fill="none"/><text x="251.4" y="27.0" font-size="4.3" font-weight="bold" text-anchor="middle" fill="#000" stroke="#000" stroke-width="0.150">52405</text><ellipse cx="340.6" cy="22.1" rx="10.3" ry="5.1" fill="none" stroke="#55b56e" stroke-width="1.1" opacity=".9"/><circle cx="339.4" cy="14.9" r="0.9" fill="#4a5a5a"/><path d="M336.7 16.7 L342.2 16.7 L343.0 23.0 L335.9 23.0Z" fill="#f6f6f6" stroke="#777" stroke-width="0.5"/><path d="M339.4 16.7 V23.0" stroke="#666" stroke-width="0.9" fill="none"/><path d="M336.4 20.2 H342.6" stroke="#999" stroke-width="0.5" fill="none"/><path d="M335.7 23.0 L343.2 23.0 L345.2 25.5 L333.8 25.5Z" fill="#8d8d8d" stroke="#666" stroke-width="0.3"/><path d="M335.0 24.2 H344.0" stroke="#555" stroke-width="0.6" fill="none"/><text x="340.6" y="31.7" font-size="4.3" font-weight="bold" text-anchor="middle" fill="#000" stroke="#000" stroke-width="0.150">52402</text><ellipse cx="306.3" cy="55.3" rx="10.3" ry="5.1" fill="none" stroke="#55b56e" stroke-width="1.1" opacity=".9"/><circle cx="305.1" cy="48.1" r="0.9" fill="#4a5a5a"/><path d="M302.4 49.9 L307.9 49.9 L308.7 56.2 L301.6 56.2Z" fill="#f6f6f6" stroke="#777" stroke-width="0.5"/><path d="M305.1 49.9 V56.2" stroke="#666" stroke-width="0.9" fill="none"/><path d="M302.1 53.4 H308.3" stroke="#999" stroke-width="0.5" fill="none"/><path d="M301.4 56.2 L308.9 56.2 L310.9 58.7 L299.5 58.7Z" fill="#8d8d8d" stroke="#666" stroke-width="0.3"/><path d="M300.7 57.4 H309.7" stroke="#555" stroke-width="0.6" fill="none"/><text x="306.3" y="64.9" font-size="4.3" font-weight="bold" text-anchor="middle" fill="#000" stroke="#000" stroke-width="0.150">52403</text><ellipse cx="160.0" cy="129.8" rx="10.3" ry="5.1" fill="none" stroke="#55b56e" stroke-width="1.1" opacity=".9"/><circle cx="158.8" cy="122.6" r="0.9" fill="#4a5a5a"/><path d="M156.1 124.4 L161.6 124.4 L162.4 130.7 L155.3 130.7Z" fill="#f6f6f6" stroke="#777" stroke-width="0.5"/><path d="M158.8 124.4 V130.7" stroke="#666" stroke-width="0.9" fill="none"/><path d="M155.8 127.9 H162.0" stroke="#999" stroke-width="0.5" fill="none"/><path d="M155.1 130.7 L162.6 130.7 L164.6 133.2 L153.2 133.2Z" fill="#8d8d8d" stroke="#666" stroke-width="0.3"/><path d="M154.4 131.9 H163.4" stroke="#555" stroke-width="0.6" fill="none"/><text x="160.0" y="139.4" font-size="4.3" font-weight="bold" text-anchor="middle" fill="#000" stroke="#000" stroke-width="0.150">56001</text><ellipse cx="192.6" cy="134.3" rx="10.3" ry="5.1" fill="none" stroke="#55b56e" stroke-width="1.1" opacity=".9"/><circle cx="191.4" cy="127.1" r="0.9" fill="#4a5a5a"/><path d="M188.7 128.9 L194.2 128.9 L195.0 135.2 L187.9 135.2Z" fill="#f6f6f6" stroke="#777" stroke-width="0.5"/><path d="M191.4 128.9 V135.2" stroke="#666" stroke-width="0.9" fill="none"/><path d="M188.4 132.4 H194.6" stroke="#999" stroke-width="0.5" fill="none"/><path d="M187.7 135.2 L195.2 135.2 L197.2 137.7 L185.8 137.7Z" fill="#8d8d8d" stroke="#666" stroke-width="0.3"/><path d="M187.0 136.4 H196.0" stroke="#555" stroke-width="0.6" fill="none"/><text x="192.6" y="143.9" font-size="4.3" font-weight="bold" text-anchor="middle" fill="#000" stroke="#000" stroke-width="0.150">56003</text><ellipse cx="142.7" cy="96.5" rx="8.6" ry="5.2" fill="none" stroke="#55b56e" stroke-width="1.1" opacity=".9"/><path d="M134.1 92.2 h10.600 c0 3.600 -2.600 4.800 -4.200 5.200 l-1.100 2.200 l-1.100 -2.200 c-1.600 -0.400 -4.200 -1.600 -4.200 -5.200z" fill="#f2a71d"/><path d="M134.1 92.2 h10.600 c0 1.400 -0.400 2.300 -1 3 h-8.600 c-0.600 -0.700 -1 -1.600 -1 -3z" fill="#f6b733"/><ellipse cx="139.4" cy="91.8" rx="5.3" ry="2.3" fill="#f3f1ee"/><path d="M134.1 91.8 a5.300 2.300 0 0 1 2.300 -1.900 l1 1.800 l-0.800 1.200z M144.7 91.8 a5.300 2.300 0 0 0 -2.300 -1.900 l-1 1.800 l0.800 1.200z" fill="#d3261f"/><text x="140.0" y="104.8" font-size="4.3" font-weight="bold" text-anchor="middle" fill="#000" stroke="#000" stroke-width="0.150">GAK</text><ellipse cx="135.6" cy="98.7" rx="10.7" ry="4.9" fill="none" stroke="#55b56e" stroke-width="1.1" opacity=".9"/><path d="M128.4 93.9 h10.600 c0 3.600 -2.600 4.800 -4.200 5.200 l-1.100 2.200 l-1.100 -2.200 c-1.600 -0.400 -4.200 -1.600 -4.200 -5.200z" fill="#f2a71d"/><path d="M128.4 93.9 h10.600 c0 1.400 -0.400 2.300 -1 3 h-8.600 c-0.600 -0.700 -1 -1.600 -1 -3z" fill="#f6b733"/><ellipse cx="133.7" cy="93.5" rx="5.3" ry="2.3" fill="#f3f1ee"/><path d="M128.4 93.5 a5.300 2.300 0 0 1 2.300 -1.900 l1 1.800 l-0.800 1.200z M139.0 93.5 a5.300 2.300 0 0 0 -2.300 -1.900 l-1 1.800 l0.800 1.200z" fill="#d3261f"/><text x="134.8" y="107.4" font-size="4.3" font-weight="bold" text-anchor="middle" fill="#000" stroke="#000" stroke-width="0.150">SUN</text><ellipse cx="157.0" cy="109.2" rx="9.9" ry="4.7" fill="none" stroke="#55b56e" stroke-width="1.1" opacity=".9"/><path d="M151.1 103.6 h10.600 c0 3.600 -2.600 4.800 -4.200 5.200 l-1.100 2.200 l-1.100 -2.200 c-1.600 -0.400 -4.200 -1.600 -4.200 -5.200z" fill="#f2a71d"/><path d="M151.1 103.6 h10.600 c0 1.400 -0.400 2.300 -1 3 h-8.600 c-0.600 -0.700 -1 -1.600 -1 -3z" fill="#f6b733"/><ellipse cx="156.4" cy="103.2" rx="5.3" ry="2.3" fill="#f3f1ee"/><path d="M151.1 103.2 a5.300 2.300 0 0 1 2.300 -1.900 l1 1.800 l-0.800 1.200z M161.7 103.2 a5.300 2.300 0 0 0 -2.300 -1.900 l-1 1.800 l0.800 1.200z" fill="#d3261f"/><text x="156.6" y="117.1" font-size="4.3" font-weight="bold" text-anchor="middle" fill="#000" stroke="#000" stroke-width="0.150">CXP</text><ellipse cx="170.7" cy="109.9" rx="10.1" ry="5.4" fill="none" stroke="#55b56e" stroke-width="1.1" opacity=".9"/><path d="M163.3 104.5 h10.600 c0 3.600 -2.600 4.800 -4.200 5.200 l-1.100 2.200 l-1.100 -2.200 c-1.600 -0.400 -4.200 -1.600 -4.200 -5.200z" fill="#f2a71d"/><path d="M163.3 104.5 h10.600 c0 1.400 -0.400 2.300 -1 3 h-8.600 c-0.600 -0.700 -1 -1.600 -1 -3z" fill="#f6b733"/><ellipse cx="168.6" cy="104.1" rx="5.3" ry="2.3" fill="#f3f1ee"/><path d="M163.3 104.1 a5.300 2.300 0 0 1 2.300 -1.900 l1 1.800 l-0.800 1.200z M173.9 104.1 a5.300 2.300 0 0 0 -2.300 -1.900 l-1 1.800 l0.800 1.200z" fill="#d3261f"/><text x="169.7" y="118.1" font-size="4.3" font-weight="bold" text-anchor="middle" fill="#000" stroke="#000" stroke-width="0.150">MLG</text><rect x="3.8" y="4.6" width="11.3" height="22" rx="1.4" fill="#fff" stroke="#bbb" stroke-width="0.5"/><path d="M3.800 15.600h11.300" stroke="#ccc" stroke-width="0.35"/><text x="9.45" y="12.4" font-size="7.5" font-weight="bold" text-anchor="middle" fill="#222">+</text><text x="9.45" y="23.2" font-size="7.5" font-weight="bold" text-anchor="middle" fill="#222">&#8722;</text><rect x="382.1" y="138.70000000000002" width="73" height="5.600" fill="#fff" opacity=".7"/><text x="453.90000000000003" y="142.9" font-size="3.9" text-anchor="end" fill="#444"><tspan fill="#0078a8">Leaflet</tspan> | &#169; <tspan fill="#0078a8">OpenStreetMap</tspan> contributors</text></svg></div></div><div class="ibox" style="left:235.6px;top:559.2px;width:1276.9px;height:201.4px"><div class="ibt" style="height:43.3px"><span class="ab" style="left:15.8px;top:12px;font-size:14.5px">15 Gempa Terakhir</span><svg class="ab" style="left:1238.1px;top:11px" width="25" height="25" viewBox="0 0 25 25"><path d="M24 1v9l-3-3-4.500 4.500-3-3 4.500-4.500-3-3zM1 24v-9l3 3 4.500-4.500 3 3-4.500 4.500 3 3z" fill="#1c5fb0"/></svg></div><span class="th" style="left:28.3px;top:68.3px">Tanggal</span><span class="th" style="left:136.7px;top:68.3px">Jam</span><span class="th" style="left:249.2px;top:68.3px">Lintang</span><span class="th" style="left:328.3px;top:68.3px">Bujur</span><span class="th" style="left:418.6px;top:68.3px">Magnitude</span><span class="th" style="left:521.4px;top:68.3px">Kedalaman</span><span class="th" style="left:628.3px;top:68.3px">Wilayah</span><span class="th" style="left:997.8px;top:68.3px">Potensi</span><span class="th" style="left:1200.6px;top:68.3px">Posisi</span><div class="ln" style="left:22.8px;width:1230.6px;top:94.9px;height:2px"></div><span class="t" style="left:28.3px;top:102.9px">15 Sep 2021</span><span class="t" style="left:136.7px;top:102.9px">07:49:47 WIB</span><span class="t" style="left:249.2px;top:102.9px">1.28 LU</span><span class="t" style="left:328.3px;top:102.9px">122.16 BT</span><span class="t" style="left:418.6px;top:102.9px">5.4</span><span class="t" style="left:521.4px;top:102.9px">20 km</span><span class="t" style="left:628.3px;top:102.9px">85 km BaratLaut BOALEMO-GORONTALO</span><span class="t" style="left:997.8px;top:102.9px">Tidak berpotensi tsunami</span><div class="btn" style="left:1200.6px;top:103.4px;width:33.9px;height:32.5px"><svg width="10" height="14" viewBox="0 0 10 14" style="margin-top:9px"><path d="M5 0a4.500 4.500 0 0 0-4.500 4.500c0 3 4.500 9 4.500 9s4.500-6 4.500-9a4.500 4.500 0 0 0-4.500-4.500zm0 2.700a1.800 1.800 0 1 1 0 3.600a1.800 1.800 0 0 1 0-3.600z" fill="#fff" fill-rule="evenodd"/></svg></div><div class="ln" style="left:22.8px;width:1230.6px;top:150.5px"></div><span class="t" style="left:28.3px;top:159.3px">15 Sep 2021</span><span class="t" style="left:136.7px;top:159.3px">03:13:53 WIB</span><span class="t" style="left:249.2px;top:159.3px">2.90 LU</span><span class="t" style="left:328.3px;top:159.3px">95.32 BT</span><span class="t" style="left:418.6px;top:159.3px">5.6</span><span class="t" style="left:521.4px;top:159.3px">10 km</span><span class="t" style="left:628.3px;top:159.3px">125 km BaratLaut SINABANG-ACEH</span><span class="t" style="left:997.8px;top:159.3px">Tidak berpotensi tsunami</span><div class="btn" style="left:1200.6px;top:159.8px;width:33.9px;height:32.5px"><svg width="10" height="14" viewBox="0 0 10 14" style="margin-top:9px"><path d="M5 0a4.500 4.500 0 0 0-4.500 4.500c0 3 4.500 9 4.500 9s4.500-6 4.500-9a4.500 4.500 0 0 0-4.500-4.500zm0 2.700a1.800 1.800 0 1 1 0 3.600a1.800 1.800 0 0 1 0-3.600z" fill="#fff" fill-rule="evenodd"/></svg></div><div class="ln" style="left:22.8px;width:1230.6px;top:205.5px"></div></div></div><div style="position:absolute;left:550px;top:5px;width:1px;height:270px;background:#d2d2d2"></div></div><div class="panel" style="left:571px;top:3.1px;width:548px;height:270px"><div class="inner" style="top:-1.63px;width:1513.8px;height:752.4px;transform:scale(0.362,0.362)"><div class="sb"><div class="nh" style="height:157px"><svg class="pat" viewBox="0 0 220 157" preserveAspectRatio="none"><path d="M95 0 L220 0 L220 120 Z" fill="#283b4c"/><path d="M0 60 L120 157 L0 157 Z" fill="#213242"/><path d="M60 0 L220 140 L220 157 L190 157 L40 20 Z" fill="#263949" opacity=".6"/></svg><div class="logo" style="top:33px"><svg viewBox="0 0 48 48" width="48" height="48"><circle cx="24" cy="24" r="24" fill="#fff"/><ellipse cx="24" cy="27" rx="21" ry="7.500" fill="none" stroke="#2450c8" stroke-width="1.700" transform="rotate(-17 24 27)"/><text x="24.500" y="27.500" font-family="Liberation Sans,sans-serif" font-size="13.500" font-weight="bold" font-style="italic" text-anchor="middle" fill="#0a0a0a" stroke="#0a0a0a" stroke-width="0.500">BPPT</text><path d="M19 25.500 L23.500 21.500 L22.500 25.500 Z" fill="#d22"/></svg></div><div class="nm" style="top:89px">Administrator</div><div class="rl" style="top:107.5px">Admin <span style="font-size:8px">&#9660;</span></div></div><div class="mi"><svg class="ic" viewBox="0 0 13 13"><path d="M1 7 L6.5 2 L12 7 L12 12 L8 12 L8 8.5 L5 8.5 L5 12 L1 12 Z" fill="#a7b1c2"/></svg><span class="tx">Dashboard</span></div><div class="grp"><div class="mi"><svg class="ic" viewBox="0 0 13 13"><path d="M4.300 1.500H12.600L11 9.300H2.700Z" fill="#fff"/><path d="M2.900 3.300L0.700 9.800Q0.300 12.200 2.500 12.200H10.400L10.900 10.700H3Q1.800 10.700 2.200 9.500L3.600 3.300Z" fill="#fff"/></svg><span class="tx">Buoy Data</span><svg class="ar" width="9" height="6" viewBox="0 0 9 6" style="top:21px"><path d="M1 1L4.500 4.500L8 1" fill="none" stroke="#fff" stroke-width="1.300"/></svg></div><div class="si on">Buoy</div><div class="si">Operasional Status</div></div><div class="mi"><svg class="ic" viewBox="0 0 13 13"><path d="M4.300 1.500H12.600L11 9.300H2.700Z" fill="#a7b1c2"/><path d="M2.900 3.300L0.700 9.800Q0.300 12.200 2.500 12.200H10.400L10.900 10.700H3Q1.800 10.700 2.200 9.500L3.600 3.300Z" fill="#a7b1c2"/></svg><span class="tx">Monitoring</span><svg class="ar" width="6" height="9" viewBox="0 0 6 9" style="top:19px"><path d="M5 1L1.500 4.500L5 8" fill="none" stroke="#a7b1c2" stroke-width="1.300"/></svg></div><div class="mi"><svg class="ic" viewBox="0 0 13 13"><path d="M2 1 H11 V12.5 H2 Z" fill="#a7b1c2"/><path d="M4 3h1.6v1.6H4zM7.4 3H9v1.6H7.4zM4 6h1.6v1.6H4zM7.4 6H9v1.6H7.4zM5.5 9.5h2v3h-2z" fill="#2f4050"/></svg><span class="tx">Recapitulation</span><svg class="ar" width="6" height="9" viewBox="0 0 6 9" style="top:19px"><path d="M5 1L1.500 4.500L5 8" fill="none" stroke="#a7b1c2" stroke-width="1.300"/></svg></div><div class="mi"><svg class="ic" viewBox="0 0 13 13"><path d="M4.300 1.500H12.600L11 9.300H2.700Z" fill="#a7b1c2"/><path d="M2.900 3.300L0.700 9.800Q0.300 12.200 2.500 12.200H10.400L10.900 10.700H3Q1.800 10.700 2.200 9.500L3.600 3.300Z" fill="#a7b1c2"/></svg><span class="tx">Documents</span><svg class="ar" width="6" height="9" viewBox="0 0 6 9" style="top:19px"><path d="M5 1L1.500 4.500L5 8" fill="none" stroke="#a7b1c2" stroke-width="1.300"/></svg></div><div class="mi"><svg class="ic" viewBox="0 0 13 13"><path d="M4.300 1.500H12.600L11 9.300H2.700Z" fill="#a7b1c2"/><path d="M2.900 3.300L0.700 9.800Q0.300 12.200 2.500 12.200H10.400L10.900 10.700H3Q1.800 10.700 2.200 9.500L3.600 3.300Z" fill="#a7b1c2"/></svg><span class="tx">Asset</span><svg class="ar" width="6" height="9" viewBox="0 0 6 9" style="top:19px"><path d="M5 1L1.500 4.500L5 8" fill="none" stroke="#a7b1c2" stroke-width="1.300"/></svg></div><div class="mi"><svg class="ic" viewBox="0 0 13 13"><path d="M4.300 1.500H12.600L11 9.300H2.700Z" fill="#a7b1c2"/><path d="M2.900 3.300L0.700 9.800Q0.300 12.200 2.500 12.200H10.400L10.900 10.700H3Q1.800 10.700 2.200 9.500L3.600 3.300Z" fill="#a7b1c2"/></svg><span class="tx">Reports</span><svg class="ar" width="6" height="9" viewBox="0 0 6 9" style="top:19px"><path d="M5 1L1.500 4.500L5 8" fill="none" stroke="#a7b1c2" stroke-width="1.300"/></svg></div><div class="mi"><svg class="ic" viewBox="0 0 13 13"><path d="M4.300 1.500H12.600L11 9.300H2.700Z" fill="#a7b1c2"/><path d="M2.900 3.300L0.700 9.800Q0.300 12.200 2.500 12.200H10.400L10.900 10.700H3Q1.800 10.700 2.200 9.500L3.600 3.300Z" fill="#a7b1c2"/></svg><span class="tx">Guest Log</span></div><div class="mi"><svg class="ic" viewBox="0 0 13 13"><path d="M0.5 2 H12.5 V11.5 H0.5 Z" fill="#a7b1c2"/><path d="M1.8 5h2.6v1.5H1.8zM5.3 5h2.6v1.5H5.3zM8.8 5h2.6v1.5H8.8zM1.8 8h2.6v1.5H1.8zM5.3 8h2.6v1.5H5.3zM8.8 8h2.6v1.5H8.8z" fill="#2f4050"/></svg><span class="tx">Todo Lists</span></div><div class="mi"><svg class="ic" viewBox="0 0 13 13"><path d="M3 1.5h7V5H3z M1 5h11v5H10v2.5H3V10H1z" fill="#a7b1c2"/><path d="M4 8.5h5v3H4z" fill="#2f4050"/></svg><span class="tx">Presensi</span></div><div class="mi"><svg class="ic" viewBox="0 0 13 13"><path d="M4.300 1.500H12.600L11 9.300H2.700Z" fill="#a7b1c2"/><path d="M2.900 3.300L0.700 9.800Q0.300 12.200 2.500 12.200H10.400L10.900 10.700H3Q1.800 10.700 2.200 9.500L3.600 3.300Z" fill="#a7b1c2"/></svg><span class="tx">Job Schedule</span></div><div class="mi"><svg class="ic" viewBox="0 0 13 13"><path d="M1 7 L3 5 L5.3 7.4 L10.5 2 L12.5 4 L5.3 11.5 Z" fill="#a7b1c2"/></svg><span class="tx">Clock In</span></div><div class="mi"><svg class="ic" viewBox="0 0 13 13"><circle cx="6.5" cy="3.8" r="2.8" fill="#a7b1c2"/><path d="M1.5 12.5 C1.5 8 4 7 6.5 7 S11.5 8 11.5 12.5 Z" fill="#a7b1c2"/></svg><span class="tx">Users</span><svg class="ar" width="6" height="9" viewBox="0 0 6 9" style="top:19px"><path d="M5 1L1.500 4.500L5 8" fill="none" stroke="#a7b1c2" stroke-width="1.300"/></svg></div></div><div class="nav" style="height:58.5px"><div class="hb" style="left:20px;top:13.5px;width:39px;height:30px"><i style="top:9px"></i><i style="top:13.7px"></i><i style="top:18.4px"></i></div><div class="srch" style="left:76px;top:19.5px">Search for something...</div><div class="tr" style="right:23.480662983425418px;top:21.5px"><svg width="14" height="12" viewBox="0 0 14 12" style="vertical-align:-1px;margin-right:11px"><path d="M0 1h5v2H2v6h3v2H0z M5 4.5h4V2l5 4-5 4V7.500H5z" fill="#999c9e"/></svg>Logout</div><svg class="ab" style="right:127.48066298342542px;top:23.5px" width="13" height="12" viewBox="0 0 15 13"><path d="M0 1h15v2H0zM0 5.500h15v2H0zM0 10h15v2H0z" fill="#999c9e"/></svg><div class="bdg" style="right:116.48066298342542px;top:11.5px">2</div><svg class="ab" style="right:169.48066298342542px;top:22.5px" width="14" height="14" viewBox="0 0 14 14"><path d="M7 0.500c-3 0-4.200 2.200-4.200 5 0 3-1.800 4-1.800 5h12c0-1-1.800-2-1.800-5 0-2.800-1.200-5-4.200-5zM5.300 11.700a1.800 1.800 0 0 0 3.400 0z" fill="#999c9e"/></svg><div class="bdg" style="right:160.48066298342542px;top:11.5px">0</div></div><div class="hd" style="top:58.5px;height:96.55248618784532px"><div class="h2" style="left:25.85635359116023px;top:24px">Buoys</div><div class="bc" style="left:25.85635359116023px;top:61px">Home <s>/</s> Buoys <s>/</s> <b>All</b></div><div class="btn" style="right:13.812154696132666px;top:22px;width:93px;height:28px;line-height:28px;font-weight:normal">Jump to <svg width="12" height="11" viewBox="0 0 12 11" style="vertical-align:-1px"><path d="M12 0L0 6l4 1.200V11l2.200-2.600L9 9.500z" fill="#fff"/></svg> <span style="font-size:7px;vertical-align:2px">&#9660;</span></div></div><div class="ibox" style="left:234.8px;top:177.2px;width:1274.9px;height:341.7px"><div class="ibt" style="height:45.0px"><span class="ab" style="left:14.6px;top:12.5px;font-size:14px"><svg width="13" height="12" viewBox="0 0 13 12" style="vertical-align:-1px"><path d="M0 0h3.500v12H0zM4.700 0h3.600v12H4.700zM9.500 0H13v12H9.500z" fill="#555"/><path d="M0 3.700h13v.8H0zM0 7.600h13v.8H0z" fill="#fff"/></svg> Buoys</span></div><div class="ab" style="left:20.2px;top:72.3px;width:79.3px;height:27.6px;background:#fff;border:1px solid #e7eaec;border-radius:3px;font-size:12px;color:#888;line-height:25.6px;text-align:center;white-space:nowrap"><svg width="11" height="11" viewBox="0 0 11 11" style="vertical-align:-1px"><path d="M5.500 1a4.500 4.500 0 1 0 4.300 5.800h-1.600a3 3 0 1 1-.6-3.200L6 5.200h4.500V.7L9 2.200A4.500 4.500 0 0 0 5.500 1z" fill="#555"/></svg> Refresh</div><span class="thb" style="left:28.5px;top:118.9px">ID</span><span class="thb" style="left:72.7px;top:118.9px">Nama</span><span class="thb" style="left:410.2px;top:118.9px">Deployment Date</span><span class="thb" style="left:603.0px;top:118.9px">Datetime Update</span><span class="thb" style="left:812.2px;top:118.9px">Updated By</span><span class="thb" style="left:948.9px;top:118.9px">Lat</span><span class="thb" style="left:1066.3px;top:118.9px">Lon</span><span class="th" style="left:1219.6px;top:118.9px;font-weight:normal;color:#333">Aksi</span><div class="ln" style="left:20.2px;width:1234.0px;top:145.5px;height:2px"></div><div class="zb" style="left:20.2px;width:1234.0px;top:143.6px;height:38.7px"></div><div class="ln" style="left:20.2px;width:1234.0px;top:143.6px"></div><span class="t" style="left:28.5px;top:153.4px">2</span><span class="t" style="left:72.7px;top:153.4px">Buoy Selatan Cilacap (CXP)</span><span class="t" style="left:603.0px;top:153.4px">2021-08-23 11:29:22</span><span class="t" style="left:812.2px;top:153.4px">superadmin</span><span class="t" style="left:948.9px;top:153.4px">-8.903659</span><span class="t" style="left:1066.3px;top:153.4px">109.488930</span><div class="ab" style="left:1223.2px;top:156.4px;width:22px;height:20px;background:#fff;border:1px solid #e7eaec;border-radius:3px;text-align:center;line-height:18px"><svg width="13" height="9" viewBox="0 0 13 9"><path d="M0 4.500C2 1.200 4.300 0 6.500 0S11 1.200 13 4.500C11 7.800 8.700 9 6.500 9S2 7.800 0 4.500z" fill="#444"/><circle cx="6.500" cy="4.300" r="1.700" fill="#fff"/></svg></div><div class="ln" style="left:20.2px;width:1234.0px;top:182.0px"></div><span class="t" style="left:28.5px;top:191.8px">4</span><span class="t" style="left:72.7px;top:191.8px">Buoy Selat Sunda (SUN)</span><span class="t" style="left:603.0px;top:191.8px">2021-08-19 04:05:15</span><span class="t" style="left:812.2px;top:191.8px">superadmin</span><span class="t" style="left:948.9px;top:191.8px">-6.548492</span><span class="t" style="left:1066.3px;top:191.8px">104.029640</span><div class="ab" style="left:1223.2px;top:194.8px;width:22px;height:20px;background:#fff;border:1px solid #e7eaec;border-radius:3px;text-align:center;line-height:18px"><svg width="13" height="9" viewBox="0 0 13 9"><path d="M0 4.500C2 1.200 4.300 0 6.500 0S11 1.200 13 4.500C11 7.800 8.700 9 6.500 9S2 7.800 0 4.500z" fill="#444"/><circle cx="6.500" cy="4.300" r="1.700" fill="#fff"/></svg></div><div class="zb" style="left:20.2px;width:1234.0px;top:220.7px;height:38.7px"></div><div class="ln" style="left:20.2px;width:1234.0px;top:220.7px"></div><span class="t" style="left:28.5px;top:230.5px">5</span><span class="t" style="left:72.7px;top:230.5px">Buoy Gunung Anak Krakatau (GAK)</span><span class="t" style="left:410.2px;top:230.5px">2021-07-27</span><span class="t" style="left:603.0px;top:230.5px">2021-07-27 05:13:29</span><span class="t" style="left:812.2px;top:230.5px">superadmin</span><span class="t" style="left:948.9px;top:230.5px">-6.130095</span><span class="t" style="left:1066.3px;top:230.5px">105.392937</span><div class="ab" style="left:1223.2px;top:233.5px;width:22px;height:20px;background:#fff;border:1px solid #e7eaec;border-radius:3px;text-align:center;line-height:18px"><svg width="13" height="9" viewBox="0 0 13 9"><path d="M0 4.500C2 1.200 4.300 0 6.500 0S11 1.200 13 4.500C11 7.800 8.700 9 6.500 9S2 7.800 0 4.500z" fill="#444"/><circle cx="6.500" cy="4.300" r="1.700" fill="#fff"/></svg></div><div class="ln" style="left:20.2px;width:1234.0px;top:259.0px"></div><span class="t" style="left:28.5px;top:268.9px">1</span><span class="t" style="left:72.7px;top:268.9px">Buoy Malang (MLG)</span><span class="t" style="left:410.2px;top:268.9px">2021-03-08</span><span class="t" style="left:603.0px;top:268.9px">2021-03-26 15:08:56</span><span class="t" style="left:812.2px;top:268.9px">superadmin</span><span class="t" style="left:948.9px;top:268.9px">-9.194710</span><span class="t" style="left:1066.3px;top:268.9px">112.526001</span><div class="ab" style="left:1223.2px;top:271.9px;width:22px;height:20px;background:#fff;border:1px solid #e7eaec;border-radius:3px;text-align:center;line-height:18px"><svg width="13" height="9" viewBox="0 0 13 9"><path d="M0 4.500C2 1.200 4.300 0 6.500 0S11 1.200 13 4.500C11 7.800 8.700 9 6.500 9S2 7.800 0 4.500z" fill="#444"/><circle cx="6.500" cy="4.300" r="1.700" fill="#fff"/></svg></div></div></div></div><div class="panel" style="left:2.1px;top:326px;width:540.4px;height:259.5px"><div class="inner" style="top:0.00px;width:1526.6px;height:752.0px;transform:scale(0.354,0.346)"><div class="sb"><div class="nh" style="height:155.5px"><svg class="pat" viewBox="0 0 220 157" preserveAspectRatio="none"><path d="M95 0 L220 0 L220 120 Z" fill="#283b4c"/><path d="M0 60 L120 157 L0 157 Z" fill="#213242"/><path d="M60 0 L220 140 L220 157 L190 157 L40 20 Z" fill="#263949" opacity=".6"/></svg><div class="logo" style="top:33px"><svg viewBox="0 0 48 48" width="48" height="48"><circle cx="24" cy="24" r="24" fill="#fff"/><ellipse cx="24" cy="27" rx="21" ry="7.500" fill="none" stroke="#2450c8" stroke-width="1.700" transform="rotate(-17 24 27)"/><text x="24.500" y="27.500" font-family="Liberation Sans,sans-serif" font-size="13.500" font-weight="bold" font-style="italic" text-anchor="middle" fill="#0a0a0a" stroke="#0a0a0a" stroke-width="0.500">BPPT</text><path d="M19 25.500 L23.500 21.500 L22.500 25.500 Z" fill="#d22"/></svg></div><div class="nm" style="top:89px">Administrator</div><div class="rl" style="top:107.5px">Admin <span style="font-size:8px">&#9660;</span></div></div><div class="mi"><svg class="ic" viewBox="0 0 13 13"><path d="M1 7 L6.5 2 L12 7 L12 12 L8 12 L8 8.5 L5 8.5 L5 12 L1 12 Z" fill="#a7b1c2"/></svg><span class="tx">Dashboard</span></div><div class="mi"><svg class="ic" viewBox="0 0 13 13"><path d="M4.300 1.500H12.600L11 9.300H2.700Z" fill="#a7b1c2"/><path d="M2.900 3.300L0.700 9.800Q0.300 12.200 2.500 12.200H10.400L10.900 10.700H3Q1.800 10.700 2.200 9.500L3.600 3.300Z" fill="#a7b1c2"/></svg><span class="tx">Buoy Data</span><svg class="ar" width="6" height="9" viewBox="0 0 6 9" style="top:19px"><path d="M5 1L1.500 4.500L5 8" fill="none" stroke="#a7b1c2" stroke-width="1.300"/></svg></div><div class="grp"><div class="mi"><svg class="ic" viewBox="0 0 13 13"><path d="M4.300 1.500H12.600L11 9.300H2.700Z" fill="#fff"/><path d="M2.900 3.300L0.700 9.800Q0.300 12.200 2.500 12.200H10.400L10.900 10.700H3Q1.800 10.700 2.200 9.500L3.600 3.300Z" fill="#fff"/></svg><span class="tx">Monitoring</span><svg class="ar" width="9" height="6" viewBox="0 0 9 6" style="top:21px"><path d="M1 1L4.500 4.500L8 1" fill="none" stroke="#fff" stroke-width="1.300"/></svg></div><div class="si on">Buoy And CBT</div><div class="si">Earthquake</div><div class="si">Engineering Status</div></div><div class="mi"><svg class="ic" viewBox="0 0 13 13"><path d="M2 1 H11 V12.5 H2 Z" fill="#a7b1c2"/><path d="M4 3h1.6v1.6H4zM7.4 3H9v1.6H7.4zM4 6h1.6v1.6H4zM7.4 6H9v1.6H7.4zM5.5 9.5h2v3h-2z" fill="#2f4050"/></svg><span class="tx">Recapitulation</span><svg class="ar" width="6" height="9" viewBox="0 0 6 9" style="top:19px"><path d="M5 1L1.500 4.500L5 8" fill="none" stroke="#a7b1c2" stroke-width="1.300"/></svg></div><div class="mi"><svg class="ic" viewBox="0 0 13 13"><path d="M4.300 1.500H12.600L11 9.300H2.700Z" fill="#a7b1c2"/><path d="M2.900 3.300L0.700 9.800Q0.300 12.200 2.500 12.200H10.400L10.900 10.700H3Q1.800 10.700 2.200 9.500L3.600 3.300Z" fill="#a7b1c2"/></svg><span class="tx">Documents</span><svg class="ar" width="6" height="9" viewBox="0 0 6 9" style="top:19px"><path d="M5 1L1.500 4.500L5 8" fill="none" stroke="#a7b1c2" stroke-width="1.300"/></svg></div><div class="mi"><svg class="ic" viewBox="0 0 13 13"><path d="M4.300 1.500H12.600L11 9.300H2.700Z" fill="#a7b1c2"/><path d="M2.900 3.300L0.700 9.800Q0.300 12.200 2.500 12.200H10.400L10.900 10.700H3Q1.800 10.700 2.200 9.500L3.600 3.300Z" fill="#a7b1c2"/></svg><span class="tx">Asset</span><svg class="ar" width="6" height="9" viewBox="0 0 6 9" style="top:19px"><path d="M5 1L1.500 4.500L5 8" fill="none" stroke="#a7b1c2" stroke-width="1.300"/></svg></div><div class="mi"><svg class="ic" viewBox="0 0 13 13"><path d="M4.300 1.500H12.600L11 9.300H2.700Z" fill="#a7b1c2"/><path d="M2.900 3.300L0.700 9.800Q0.300 12.200 2.500 12.200H10.400L10.900 10.700H3Q1.800 10.700 2.200 9.500L3.600 3.300Z" fill="#a7b1c2"/></svg><span class="tx">Reports</span><svg class="ar" width="6" height="9" viewBox="0 0 6 9" style="top:19px"><path d="M5 1L1.500 4.500L5 8" fill="none" stroke="#a7b1c2" stroke-width="1.300"/></svg></div><div class="mi"><svg class="ic" viewBox="0 0 13 13"><path d="M4.300 1.500H12.600L11 9.300H2.700Z" fill="#a7b1c2"/><path d="M2.900 3.300L0.700 9.800Q0.300 12.200 2.500 12.200H10.400L10.900 10.700H3Q1.800 10.700 2.200 9.500L3.600 3.300Z" fill="#a7b1c2"/></svg><span class="tx">Guest Log</span></div><div class="mi"><svg class="ic" viewBox="0 0 13 13"><path d="M0.5 2 H12.5 V11.5 H0.5 Z" fill="#a7b1c2"/><path d="M1.8 5h2.6v1.5H1.8zM5.3 5h2.6v1.5H5.3zM8.8 5h2.6v1.5H8.8zM1.8 8h2.6v1.5H1.8zM5.3 8h2.6v1.5H5.3zM8.8 8h2.6v1.5H8.8z" fill="#2f4050"/></svg><span class="tx">Todo Lists</span></div><div class="mi"><svg class="ic" viewBox="0 0 13 13"><path d="M3 1.5h7V5H3z M1 5h11v5H10v2.5H3V10H1z" fill="#a7b1c2"/><path d="M4 8.5h5v3H4z" fill="#2f4050"/></svg><span class="tx">Presensi</span></div><div class="mi"><svg class="ic" viewBox="0 0 13 13"><path d="M4.300 1.500H12.600L11 9.300H2.700Z" fill="#a7b1c2"/><path d="M2.900 3.300L0.700 9.800Q0.300 12.200 2.500 12.200H10.400L10.900 10.700H3Q1.800 10.700 2.200 9.500L3.600 3.300Z" fill="#a7b1c2"/></svg><span class="tx">Job Schedule</span></div><div class="mi"><svg class="ic" viewBox="0 0 13 13"><path d="M1 7 L3 5 L5.3 7.4 L10.5 2 L12.5 4 L5.3 11.5 Z" fill="#a7b1c2"/></svg><span class="tx">Clock In</span></div><div class="mi"><svg class="ic" viewBox="0 0 13 13"><circle cx="6.5" cy="3.8" r="2.8" fill="#a7b1c2"/><path d="M1.5 12.5 C1.5 8 4 7 6.5 7 S11.5 8 11.5 12.5 Z" fill="#a7b1c2"/></svg><span class="tx">Users</span><svg class="ar" width="6" height="9" viewBox="0 0 6 9" style="top:19px"><path d="M5 1L1.500 4.500L5 8" fill="none" stroke="#a7b1c2" stroke-width="1.300"/></svg></div></div><div class="nav" style="height:59.97109826589596px"><div class="hb" style="left:20px;top:13.7px;width:39px;height:30px"><i style="top:9px"></i><i style="top:13.7px"></i><i style="top:18.4px"></i></div><div class="srch" style="left:76px;top:19.7px">Search for something...</div><div class="tr" style="right:31.07344632768354px;top:21.7px"><svg width="14" height="12" viewBox="0 0 14 12" style="vertical-align:-1px;margin-right:11px"><path d="M0 1h5v2H2v6h3v2H0z M5 4.5h4V2l5 4-5 4V7.500H5z" fill="#999c9e"/></svg>Logout</div><svg class="ab" style="right:135.07344632768354px;top:23.7px" width="13" height="12" viewBox="0 0 15 13"><path d="M0 1h15v2H0zM0 5.500h15v2H0zM0 10h15v2H0z" fill="#999c9e"/></svg><div class="bdg" style="right:124.07344632768354px;top:11.7px">2</div><svg class="ab" style="right:177.07344632768354px;top:22.7px" width="14" height="14" viewBox="0 0 14 14"><path d="M7 0.500c-3 0-4.200 2.200-4.200 5 0 3-1.800 4-1.800 5h12c0-1-1.800-2-1.800-5 0-2.800-1.200-5-4.200-5zM5.300 11.700a1.800 1.800 0 0 0 3.400 0z" fill="#999c9e"/></svg><div class="bdg" style="right:168.07344632768354px;top:11.7px">0</div></div><div class="ibox" style="left:246.9px;top:82.4px;width:1260.6px;height:709.5px"><div class="ibt" style="height:45.1px"><span class="ab" style="left:14.1px;top:12.0px;font-size:14px;color:#555">Monitoring</span><svg class="ab" style="left:1234.5px;top:17.0px" width="10" height="10" viewBox="0 0 10 10"><path d="M10 0v4L8.600 2.600 6.400 4.800 5.200 3.600 7.400 1.400 6 0zM0 10V6l1.400 1.400L3.600 5.200 4.800 6.400 2.600 8.600 4 10z" fill="#bbb"/></svg></div><div class="ab" style="left:19.1px;top:68.1px;width:388.4px;height:168.4px;overflow:hidden"><svg viewBox="0 0 388 166" width="100%" height="100%" preserveAspectRatio="none" style="display:block;font-family:&quot;Liberation Sans&quot;,sans-serif"><rect x="1.700" y="1.700" width="384.6" height="162.6" fill="#e4e6fa" stroke="#444" stroke-width="3.400"/><rect x="26" y="16" width="354" height="132" fill="#fff"/><path d="M26 27.0h354 M26 38.0h354 M26 49.0h354 M26 60.0h354 M26 71.0h354 M26 82.0h354 M26 93.0h354 M26 104.0h354 M26 115.0h354 M26 126.0h354 M26 137.0h354 M49.6 16v132 M73.2 16v132 M96.8 16v132 M120.4 16v132 M144.0 16v132 M167.6 16v132 M191.2 16v132 M214.8 16v132 M238.4 16v132 M262.0 16v132 M285.6 16v132 M309.2 16v132 M332.8 16v132 M356.4 16v132" stroke="#e9e9f1" stroke-width="0.8" fill="none"/><path d="M28.0 40.6 L29.0 42.5 L30.1 47.5 L31.1 55.3 L32.2 65.4 L33.2 77.1 L34.2 89.5 L35.3 101.9 L36.3 113.4 L37.4 123.3 L38.4 130.8 L39.5 135.5 L40.5 137.1 L41.5 135.5 L42.6 130.8 L43.6 123.5 L44.7 113.9 L45.7 102.8 L46.8 91.0 L47.8 79.2 L48.8 68.3 L49.9 59.0 L50.9 51.9 L52.0 47.6 L53.0 46.3 L54.0 47.3 L55.1 50.9 L56.1 57.0 L57.2 65.1 L58.2 74.6 L59.2 84.9 L60.3 95.4 L61.3 105.2 L62.4 113.6 L63.4 120.2 L64.5 124.3 L65.5 125.7 L66.5 124.3 L67.6 120.1 L68.6 113.3 L69.7 104.4 L70.7 94.0 L71.8 82.8 L72.8 71.5 L73.8 60.8 L74.9 51.5 L75.9 44.3 L77.0 39.6 L78.0 37.8 L79.0 39.4 L80.1 44.4 L81.1 52.3 L82.2 62.6 L83.2 74.6 L84.2 87.4 L85.3 100.3 L86.3 112.3 L87.4 122.5 L88.4 130.4 L89.5 135.4 L90.5 137.1 L91.5 135.4 L92.6 130.4 L93.6 122.5 L94.7 112.3 L95.7 100.3 L96.8 87.4 L97.8 74.6 L98.8 62.6 L99.9 52.3 L100.9 44.4 L102.0 39.4 L103.0 37.8 L104.0 39.5 L105.1 44.2 L106.1 51.8 L107.2 61.5 L108.2 72.8 L109.2 84.9 L110.3 97.0 L111.3 108.2 L112.4 117.8 L113.4 125.2 L114.5 129.8 L115.5 131.4 L116.5 129.8 L117.6 125.2 L118.6 118.0 L119.7 108.5 L120.7 97.4 L121.8 85.6 L122.8 73.9 L123.8 62.9 L124.9 53.6 L125.9 46.5 L127.0 42.0 L128.0 40.6 L129.0 41.9 L130.1 46.4 L131.1 53.8 L132.2 63.7 L133.2 75.2 L134.2 87.8 L135.3 100.4 L136.3 112.3 L137.4 122.5 L138.4 130.4 L139.5 135.4 L140.5 137.1 L141.5 135.4 L142.6 130.3 L143.6 122.2 L144.7 111.5 L145.7 99.1 L146.8 85.6 L147.8 72.1 L148.8 59.4 L149.9 48.4 L150.9 39.8 L152.0 34.2 L153.0 32.1 L154.0 34.6 L155.1 40.5 L156.1 49.2 L157.2 60.1 L158.2 72.5 L159.2 85.6 L160.3 98.5 L161.3 110.4 L162.4 120.4 L163.4 128.0 L164.5 132.7 L165.5 134.2 L166.5 132.7 L167.6 128.2 L168.6 121.1 L169.7 112.0 L170.7 101.6 L171.8 90.6 L172.8 79.8 L173.8 70.0 L174.9 61.9 L175.9 55.9 L177.0 52.5 L178.0 51.9 L179.0 52.6 L180.1 56.1 L181.1 62.3 L182.2 70.7 L183.2 80.9 L184.2 92.0 L185.3 103.4 L186.3 114.1 L187.4 123.5 L188.4 130.8 L189.5 135.5 L190.5 137.1 L191.5 135.5 L192.6 130.6 L193.6 122.8 L194.7 112.5 L195.7 100.3 L196.8 87.1 L197.8 73.6 L198.8 60.8 L199.9 49.6 L200.9 40.7 L202.0 34.7 L203.0 32.1 L204.0 34.8 L205.1 40.6 L206.1 48.8 L207.2 59.0 L208.2 70.5 L209.3 82.5 L210.3 94.1 L211.3 104.7 L212.4 113.6 L213.4 120.3 L214.5 124.4 L215.5 125.7 L216.5 124.4 L217.6 120.6 L218.6 114.6 L219.7 107.0 L220.7 98.5 L221.8 89.5 L222.8 80.9 L223.8 73.2 L224.9 67.0 L225.9 62.6 L227.0 60.4 L228.0 60.5 L229.0 60.7 L230.1 63.4 L231.1 68.5 L232.2 75.7 L233.2 84.5 L234.2 94.2 L235.3 104.1 L236.3 113.7 L237.4 122.0 L238.4 128.6 L239.5 132.8 L240.5 134.2 L241.5 132.8 L242.6 128.3 L243.6 121.1 L244.7 111.5 L245.7 100.2 L246.8 87.8 L247.8 75.1 L248.8 62.9 L249.9 52.2 L250.9 43.6 L252.0 37.7 L253.0 34.9 L254.0 37.8 L255.1 43.3 L256.1 51.0 L257.2 60.5 L258.2 70.9 L259.2 81.7 L260.3 92.2 L261.3 101.6 L262.4 109.5 L263.4 115.3 L264.5 118.9 L265.5 120.1 L266.5 118.9 L267.6 115.7 L268.6 110.7 L269.7 104.4 L270.7 97.4 L271.8 90.3 L272.8 83.4 L273.8 77.5 L274.9 72.8 L275.9 69.7 L277.0 68.4 L278.0 69.0 L279.0 68.8 L280.1 70.6 L281.1 74.3 L282.2 79.6 L283.2 86.3 L284.2 93.8 L285.3 101.6 L286.3 109.2 L287.4 115.9 L288.4 121.1 L289.5 124.5 L290.5 125.7 L291.5 124.5 L292.6 120.8 L293.6 114.8 L294.7 106.8 L295.7 97.2 L296.8 86.7 L297.8 75.9 L298.8 65.4 L299.9 56.1 L300.9 48.5 L302.0 43.2 L303.0 40.6 L304.0 43.3 L305.1 48.0 L306.1 54.5 L307.2 62.2 L308.2 70.7 L309.2 79.3 L310.3 87.5 L311.3 94.8 L312.4 100.8 L313.4 105.2 L314.5 107.8 L315.5 108.7 L316.5 107.9 L317.6 105.6 L318.6 102.1 L319.7 97.8 L320.7 93.1 L321.8 88.5 L322.8 84.2 L323.8 80.7 L324.9 78.1 L325.9 76.7 L327.0 76.5 L328.0 77.5 L329.0 77.1 L330.1 78.0 L331.1 80.2 L332.2 83.5 L333.2 87.8 L334.2 92.7 L335.3 97.9 L336.3 103.0 L337.4 107.6 L338.4 111.2 L339.5 113.6 L340.5 114.4 L341.5 113.5 L342.6 110.9 L343.6 106.6 L344.7 100.9 L345.7 94.0 L346.8 86.4 L347.8 78.4 L348.8 70.7 L349.9 63.8 L350.9 58.1 L352.0 54.1 L353.0 51.9 L354.0 52.8 L355.1 55.4 L356.1 59.4 L357.2 64.7 L358.2 70.9 L359.2 77.5 L360.3 84.1 L361.3 90.3 L362.4 95.5 L363.4 99.6 L364.5 102.2 L365.5 103.0 L366.5 102.2 L367.6 99.6 L368.6 95.5 L369.7 90.3 L370.7 84.1 L371.8 77.5 L372.8 70.9 L373.8 64.7 L374.9 59.4 L375.9 55.4 L377.0 52.8 L378.0 51.9" fill="none" stroke="#b2b2f5" stroke-width="1.4" stroke-linejoin="round"/><text x="194.0" y="11" font-size="8" font-weight="bold" text-anchor="middle" fill="#222">Buoy Cilacap (CXP)</text><text x="374" y="15" font-size="4" text-anchor="end" fill="#55c">Created with Highcharts</text><rect x="334" y="27" width="26" height="9" fill="#d8ece6" stroke="#9cc" stroke-width="0.500"/><text x="347" y="34" font-size="5.500" text-anchor="middle" fill="#333">depth</text><text x="23" y="18.0" font-size="4.500" text-anchor="end" fill="#445">3.550</text><text x="23" y="29.7" font-size="4.500" text-anchor="end" fill="#445">3.500</text><text x="23" y="41.4" font-size="4.500" text-anchor="end" fill="#445">3.450</text><text x="23" y="53.0" font-size="4.500" text-anchor="end" fill="#445">3.400</text><text x="23" y="64.7" font-size="4.500" text-anchor="end" fill="#445">3.350</text><text x="23" y="76.4" font-size="4.500" text-anchor="end" fill="#445">3.300</text><text x="23" y="88.1" font-size="4.500" text-anchor="end" fill="#445">3.250</text><text x="23" y="99.8" font-size="4.500" text-anchor="end" fill="#445">3.200</text><text x="23" y="111.5" font-size="4.500" text-anchor="end" fill="#445">3.150</text><text x="23" y="123.1" font-size="4.500" text-anchor="end" fill="#445">3.100</text><text x="23" y="134.8" font-size="4.500" text-anchor="end" fill="#445">3.050</text><text x="23" y="146.5" font-size="4.500" text-anchor="end" fill="#445">3.000</text><text x="26.0" y="155" font-size="4.500" text-anchor="middle" fill="#445">8. Sep</text><text x="51.1" y="155" font-size="4.500" text-anchor="middle" fill="#445">8. Sep</text><text x="76.2" y="155" font-size="4.500" text-anchor="middle" fill="#445">9. Sep</text><text x="101.3" y="155" font-size="4.500" text-anchor="middle" fill="#445">9. Sep</text><text x="126.4" y="155" font-size="4.500" text-anchor="middle" fill="#445">10. Sep</text><text x="151.5" y="155" font-size="4.500" text-anchor="middle" fill="#445">10. Sep</text><text x="176.6" y="155" font-size="4.500" text-anchor="middle" fill="#445">11. Sep</text><text x="201.7" y="155" font-size="4.500" text-anchor="middle" fill="#445">11. Sep</text><text x="226.9" y="155" font-size="4.500" text-anchor="middle" fill="#445">12. Sep</text><text x="252.0" y="155" font-size="4.500" text-anchor="middle" fill="#445">12. Sep</text><text x="277.1" y="155" font-size="4.500" text-anchor="middle" fill="#445">13. Sep</text><text x="302.2" y="155" font-size="4.500" text-anchor="middle" fill="#445">13. Sep</text><text x="327.3" y="155" font-size="4.500" text-anchor="middle" fill="#445">14. Sep</text><text x="352.4" y="155" font-size="4.500" text-anchor="middle" fill="#445">14. Sep</text><text x="377.5" y="155" font-size="4.500" text-anchor="middle" fill="#445">15. Sep</text><text x="194.0" y="162" font-size="4.500" text-anchor="middle" fill="#445">Date Time</text><text x="9" y="83.0" font-size="4.500" text-anchor="middle" fill="#445" transform="rotate(-90 9 83.0)">Depth (m)</text></svg></div><div class="ab" style="left:435.7px;top:68.1px;width:387.0px;height:168.4px;overflow:hidden"><svg viewBox="0 0 388 166" width="100%" height="100%" preserveAspectRatio="none" style="display:block;font-family:&quot;Liberation Sans&quot;,sans-serif"><rect x="1.700" y="1.700" width="384.6" height="162.6" fill="#e4e6fa" stroke="#444" stroke-width="3.400"/><rect x="26" y="16" width="354" height="132" fill="#fff"/><path d="M26 27.0h354 M26 38.0h354 M26 49.0h354 M26 60.0h354 M26 71.0h354 M26 82.0h354 M26 93.0h354 M26 104.0h354 M26 115.0h354 M26 126.0h354 M26 137.0h354 M49.6 16v132 M73.2 16v132 M96.8 16v132 M120.4 16v132 M144.0 16v132 M167.6 16v132 M191.2 16v132 M214.8 16v132 M238.4 16v132 M262.0 16v132 M285.6 16v132 M309.2 16v132 M332.8 16v132 M356.4 16v132" stroke="#e9e9f1" stroke-width="0.8" fill="none"/><path d="M28.0 41.7 L29.0 43.4 L30.1 48.2 L31.1 55.6 L32.2 65.3 L33.2 76.5 L34.2 88.4 L35.3 100.3 L36.3 111.4 L37.4 120.9 L38.4 128.1 L39.5 132.7 L40.5 134.2 L41.5 132.7 L42.6 128.2 L43.6 121.0 L44.7 111.7 L45.7 100.9 L46.8 89.3 L47.8 77.7 L48.8 67.0 L49.9 57.8 L50.9 50.8 L52.0 46.5 L53.0 45.1 L54.0 46.3 L55.1 50.3 L56.1 57.0 L57.2 65.8 L58.2 76.1 L59.2 87.3 L60.3 98.6 L61.3 109.2 L62.4 118.4 L63.4 125.4 L64.5 129.9 L65.5 131.4 L66.5 129.9 L67.6 125.3 L68.6 118.1 L69.7 108.6 L70.7 97.5 L71.8 85.5 L72.8 73.4 L73.8 62.1 L74.9 52.3 L75.9 44.6 L77.0 39.7 L78.0 37.8 L79.0 39.5 L80.1 44.4 L81.1 52.2 L82.2 62.2 L83.2 73.9 L84.2 86.4 L85.3 98.8 L86.3 110.4 L87.4 120.3 L88.4 127.9 L89.5 132.6 L90.5 134.2 L91.5 132.6 L92.6 127.9 L93.6 120.4 L94.7 110.6 L95.7 99.2 L96.8 87.1 L97.8 74.9 L98.8 63.7 L99.9 54.0 L100.9 46.6 L102.0 42.1 L103.0 40.6 L104.0 42.2 L105.1 46.8 L106.1 54.0 L107.2 63.4 L108.2 74.4 L109.2 86.1 L110.3 97.9 L111.3 108.8 L112.4 118.2 L113.4 125.4 L114.5 129.9 L115.5 131.4 L116.5 129.9 L117.6 125.4 L118.6 118.2 L119.7 108.9 L120.7 98.1 L121.8 86.4 L122.8 74.8 L123.8 64.0 L124.9 54.7 L125.9 47.6 L127.0 43.2 L128.0 41.7 L129.0 43.1 L130.1 47.5 L131.1 54.7 L132.2 64.1 L133.2 75.3 L134.2 87.3 L135.3 99.3 L136.3 110.6 L137.4 120.4 L138.4 127.9 L139.5 132.6 L140.5 134.2 L141.5 132.6 L142.6 127.8 L143.6 120.2 L144.7 110.2 L145.7 98.5 L146.8 85.9 L147.8 73.2 L148.8 61.3 L149.9 51.0 L150.9 43.1 L152.0 38.0 L153.0 36.1 L154.0 38.1 L155.1 43.3 L156.1 51.2 L157.2 61.3 L158.2 72.9 L159.2 85.1 L160.3 97.3 L161.3 108.5 L162.4 118.1 L163.4 125.3 L164.5 129.9 L165.5 131.4 L166.5 129.9 L167.6 125.5 L168.6 118.5 L169.7 109.5 L170.7 99.0 L171.8 88.0 L172.8 77.0 L173.8 67.0 L174.9 58.5 L175.9 52.1 L177.0 48.4 L178.0 47.4 L179.0 48.4 L180.1 52.2 L181.1 58.8 L182.2 67.6 L183.2 77.9 L184.2 89.3 L185.3 100.7 L186.3 111.5 L187.4 120.8 L188.4 128.1 L189.5 132.7 L190.5 134.2 L191.5 132.7 L192.6 127.9 L193.6 120.4 L194.7 110.5 L195.7 98.8 L196.8 86.1 L197.8 73.4 L198.8 61.3 L199.9 50.8 L200.9 42.5 L202.0 37.1 L203.0 34.9 L204.0 37.2 L205.1 42.5 L206.1 50.4 L207.2 60.5 L208.2 71.9 L209.3 83.9 L210.3 95.7 L211.3 106.6 L212.4 115.8 L213.4 122.8 L214.5 127.1 L215.5 128.6 L216.5 127.1 L217.6 123.0 L218.6 116.4 L219.7 108.0 L220.7 98.3 L221.8 88.1 L222.8 78.1 L223.8 69.0 L224.9 61.3 L225.9 55.8 L227.0 52.6 L228.0 51.9 L229.0 52.6 L230.1 56.0 L231.1 61.9 L232.2 69.8 L233.2 79.3 L234.2 89.7 L235.3 100.2 L236.3 110.2 L237.4 118.9 L238.4 125.6 L239.5 129.9 L240.5 131.4 L241.5 129.9 L242.6 125.5 L243.6 118.3 L244.7 108.9 L245.7 97.8 L246.8 85.7 L247.8 73.5 L248.8 61.9 L249.9 51.7 L250.9 43.7 L252.0 38.3 L253.0 36.1 L254.0 38.5 L255.1 43.7 L256.1 51.5 L257.2 61.2 L258.2 72.1 L259.2 83.6 L260.3 94.8 L261.3 105.1 L262.4 113.8 L263.4 120.3 L264.5 124.4 L265.5 125.7 L266.5 124.4 L267.6 120.6 L268.6 114.6 L269.7 106.9 L270.7 98.2 L271.8 89.0 L272.8 80.0 L273.8 72.0 L274.9 65.3 L275.9 60.5 L277.0 57.9 L278.0 57.6 L279.0 58.1 L280.1 61.0 L281.1 66.1 L282.2 73.1 L283.2 81.5 L284.2 90.8 L285.3 100.3 L286.3 109.3 L287.4 117.2 L288.4 123.3 L289.5 127.2 L290.5 128.6 L291.5 127.2 L292.6 123.1 L293.6 116.5 L294.7 107.8 L295.7 97.5 L296.8 86.3 L297.8 74.9 L298.8 64.0 L299.9 54.4 L300.9 46.8 L302.0 41.7 L303.0 39.5 L304.0 41.9 L305.1 46.9 L306.1 54.2 L307.2 63.3 L308.2 73.5 L309.2 84.2 L310.3 94.5 L311.3 104.0 L312.4 112.0 L313.4 118.0 L314.5 121.7 L315.5 122.9 L316.5 121.7 L317.6 118.2 L318.6 112.9 L319.7 106.0 L320.7 98.2 L321.8 90.1 L322.8 82.3 L323.8 75.2 L324.9 69.5 L325.9 65.4 L327.0 63.3 L328.0 63.3 L329.0 63.5 L330.1 65.9 L331.1 70.3 L332.2 76.4 L333.2 83.8 L334.2 92.0 L335.3 100.4 L336.3 108.5 L337.4 115.5 L338.4 121.0 L339.5 124.5 L340.5 125.7 L341.5 124.5 L342.6 120.8 L343.6 114.8 L344.7 106.8 L345.7 97.4 L346.8 87.1 L347.8 76.5 L348.8 66.5 L349.9 57.6 L350.9 50.5 L352.0 45.6 L353.0 43.4 L354.0 44.7 L355.1 48.6 L356.1 54.7 L357.2 62.6 L358.2 71.8 L359.2 81.7 L360.3 91.7 L361.3 100.9 L362.4 108.8 L363.4 114.9 L364.5 118.8 L365.5 120.1 L366.5 118.8 L367.6 114.9 L368.6 108.8 L369.7 100.9 L370.7 91.7 L371.8 81.7 L372.8 71.8 L373.8 62.6 L374.9 54.7 L375.9 48.6 L377.0 44.7 L378.0 43.4" fill="none" stroke="#b2b2f5" stroke-width="1.4" stroke-linejoin="round"/><text x="194.0" y="11" font-size="8" font-weight="bold" text-anchor="middle" fill="#222">Buoy Selat Sunda (SUN)</text><text x="374" y="15" font-size="4" text-anchor="end" fill="#55c">Created with Highcharts</text><rect x="334" y="27" width="26" height="9" fill="#d8ece6" stroke="#9cc" stroke-width="0.500"/><text x="347" y="34" font-size="5.500" text-anchor="middle" fill="#333">depth</text><text x="23" y="18.0" font-size="4.500" text-anchor="end" fill="#445">3.550</text><text x="23" y="29.7" font-size="4.500" text-anchor="end" fill="#445">3.500</text><text x="23" y="41.4" font-size="4.500" text-anchor="end" fill="#445">3.450</text><text x="23" y="53.0" font-size="4.500" text-anchor="end" fill="#445">3.400</text><text x="23" y="64.7" font-size="4.500" text-anchor="end" fill="#445">3.350</text><text x="23" y="76.4" font-size="4.500" text-anchor="end" fill="#445">3.300</text><text x="23" y="88.1" font-size="4.500" text-anchor="end" fill="#445">3.250</text><text x="23" y="99.8" font-size="4.500" text-anchor="end" fill="#445">3.200</text><text x="23" y="111.5" font-size="4.500" text-anchor="end" fill="#445">3.150</text><text x="23" y="123.1" font-size="4.500" text-anchor="end" fill="#445">3.100</text><text x="23" y="134.8" font-size="4.500" text-anchor="end" fill="#445">3.050</text><text x="23" y="146.5" font-size="4.500" text-anchor="end" fill="#445">3.000</text><text x="26.0" y="155" font-size="4.500" text-anchor="middle" fill="#445">8. Sep</text><text x="51.1" y="155" font-size="4.500" text-anchor="middle" fill="#445">8. Sep</text><text x="76.2" y="155" font-size="4.500" text-anchor="middle" fill="#445">9. Sep</text><text x="101.3" y="155" font-size="4.500" text-anchor="middle" fill="#445">9. Sep</text><text x="126.4" y="155" font-size="4.500" text-anchor="middle" fill="#445">10. Sep</text><text x="151.5" y="155" font-size="4.500" text-anchor="middle" fill="#445">10. Sep</text><text x="176.6" y="155" font-size="4.500" text-anchor="middle" fill="#445">11. Sep</text><text x="201.7" y="155" font-size="4.500" text-anchor="middle" fill="#445">11. Sep</text><text x="226.9" y="155" font-size="4.500" text-anchor="middle" fill="#445">12. Sep</text><text x="252.0" y="155" font-size="4.500" text-anchor="middle" fill="#445">12. Sep</text><text x="277.1" y="155" font-size="4.500" text-anchor="middle" fill="#445">13. Sep</text><text x="302.2" y="155" font-size="4.500" text-anchor="middle" fill="#445">13. Sep</text><text x="327.3" y="155" font-size="4.500" text-anchor="middle" fill="#445">14. Sep</text><text x="352.4" y="155" font-size="4.500" text-anchor="middle" fill="#445">14. Sep</text><text x="377.5" y="155" font-size="4.500" text-anchor="middle" fill="#445">15. Sep</text><text x="194.0" y="162" font-size="4.500" text-anchor="middle" fill="#445">Date Time</text><text x="9" y="83.0" font-size="4.500" text-anchor="middle" fill="#445" transform="rotate(-90 9 83.0)">Depth (m)</text></svg></div><div class="ab" style="left:854.5px;top:68.1px;width:384.9px;height:168.4px;overflow:hidden"><svg viewBox="0 0 388 166" width="100%" height="100%" preserveAspectRatio="none" style="display:block;font-family:&quot;Liberation Sans&quot;,sans-serif"><rect x="1.700" y="1.700" width="384.6" height="162.6" fill="#e4e6fa" stroke="#444" stroke-width="3.400"/><rect x="26" y="16" width="354" height="132" fill="#fff"/><path d="M26 27.0h354 M26 38.0h354 M26 49.0h354 M26 60.0h354 M26 71.0h354 M26 82.0h354 M26 93.0h354 M26 104.0h354 M26 115.0h354 M26 126.0h354 M26 137.0h354 M49.6 16v132 M73.2 16v132 M96.8 16v132 M120.4 16v132 M144.0 16v132 M167.6 16v132 M191.2 16v132 M214.8 16v132 M238.4 16v132 M262.0 16v132 M285.6 16v132 M309.2 16v132 M332.8 16v132 M356.4 16v132" stroke="#e9e9f1" stroke-width="0.8" fill="none"/><path d="M28.0 34.9 L29.0 36.7 L30.1 41.6 L31.1 49.2 L32.2 59.0 L33.2 70.4 L34.2 82.5 L35.3 94.5 L36.3 105.6 L37.4 115.2 L38.4 122.5 L39.5 127.0 L40.5 128.6 L41.5 127.0 L42.6 122.5 L43.6 115.4 L44.7 106.1 L45.7 95.4 L46.8 83.9 L47.8 72.5 L48.8 61.9 L49.9 52.9 L50.9 46.0 L52.0 41.9 L53.0 40.6 L54.0 41.8 L55.1 45.7 L56.1 52.0 L57.2 60.5 L58.2 70.3 L59.2 81.0 L60.3 91.8 L61.3 101.8 L62.4 110.5 L63.4 117.2 L64.5 121.4 L65.5 122.9 L66.5 121.4 L67.6 117.2 L68.6 110.3 L69.7 101.4 L70.7 90.9 L71.8 79.6 L72.8 68.3 L73.8 57.6 L74.9 48.4 L75.9 41.3 L77.0 36.6 L78.0 34.9 L79.0 36.4 L80.1 41.0 L81.1 48.3 L82.2 58.0 L83.2 69.3 L84.2 81.4 L85.3 93.6 L86.3 104.9 L87.4 114.7 L88.4 122.2 L89.5 127.0 L90.5 128.6 L91.5 126.9 L92.6 122.2 L93.6 114.6 L94.7 104.7 L95.7 93.1 L96.8 80.7 L97.8 68.2 L98.8 56.6 L99.9 46.5 L100.9 38.8 L102.0 33.8 L103.0 32.1 L104.0 33.8 L105.1 38.6 L106.1 46.1 L107.2 55.8 L108.2 67.2 L109.2 79.3 L110.3 91.3 L111.3 102.6 L112.4 112.2 L113.4 119.5 L114.5 124.2 L115.5 125.7 L116.5 124.2 L117.6 119.6 L118.6 112.3 L119.7 102.8 L120.7 91.8 L121.8 80.0 L122.8 68.2 L123.8 57.3 L124.9 47.9 L125.9 40.8 L127.0 36.3 L128.0 34.9 L129.0 36.3 L130.1 40.7 L131.1 48.0 L132.2 57.6 L133.2 68.9 L134.2 81.0 L135.3 93.2 L136.3 104.7 L137.4 114.5 L138.4 122.1 L139.5 126.9 L140.5 128.6 L141.5 126.9 L142.6 122.1 L143.6 114.3 L144.7 104.2 L145.7 92.4 L146.8 79.6 L147.8 66.8 L148.8 54.8 L149.9 44.4 L150.9 36.3 L152.0 31.2 L153.0 29.2 L154.0 31.3 L155.1 36.6 L156.1 44.6 L157.2 54.8 L158.2 66.5 L159.2 78.9 L160.3 91.2 L161.3 102.6 L162.4 112.2 L163.4 119.6 L164.5 124.2 L165.5 125.7 L166.5 124.2 L167.6 119.7 L168.6 112.6 L169.7 103.5 L170.7 93.0 L171.8 81.7 L172.8 70.7 L173.8 60.5 L174.9 51.8 L175.9 45.4 L177.0 41.6 L178.0 40.6 L179.0 41.7 L180.1 45.8 L181.1 52.6 L182.2 61.5 L183.2 72.1 L184.2 83.5 L185.3 95.0 L186.3 105.9 L187.4 115.2 L188.4 122.4 L189.5 127.0 L190.5 128.6 L191.5 127.0 L192.6 122.3 L193.6 114.9 L194.7 105.2 L195.7 93.7 L196.8 81.4 L197.8 69.0 L198.8 57.3 L199.9 47.1 L200.9 39.2 L202.0 34.1 L203.0 32.1 L204.0 34.2 L205.1 39.2 L206.1 46.8 L207.2 56.4 L208.2 67.4 L209.3 79.1 L210.3 90.6 L211.3 101.3 L212.4 110.3 L213.4 117.2 L214.5 121.4 L215.5 122.9 L216.5 121.5 L217.6 117.3 L218.6 110.8 L219.7 102.4 L220.7 92.7 L221.8 82.4 L222.8 72.2 L223.8 62.9 L224.9 55.1 L225.9 49.3 L227.0 45.9 L228.0 45.1 L229.0 46.0 L230.1 49.6 L231.1 55.7 L232.2 63.9 L233.2 73.5 L234.2 84.0 L235.3 94.6 L236.3 104.6 L237.4 113.3 L238.4 120.0 L239.5 124.3 L240.5 125.7 L241.5 124.3 L242.6 119.9 L243.6 112.9 L244.7 103.7 L245.7 92.9 L246.8 81.2 L247.8 69.3 L248.8 58.2 L249.9 48.5 L250.9 40.8 L252.0 35.8 L253.0 33.8 L254.0 36.1 L255.1 41.1 L256.1 48.6 L257.2 57.9 L258.2 68.4 L259.2 79.5 L260.3 90.3 L261.3 100.2 L262.4 108.5 L263.4 114.8 L264.5 118.7 L265.5 120.1 L266.5 118.8 L267.6 115.1 L268.6 109.3 L269.7 101.9 L270.7 93.4 L271.8 84.6 L272.8 75.9 L273.8 68.1 L274.9 61.7 L275.9 57.0 L277.0 54.5 L278.0 54.2 L279.0 54.7 L280.1 57.5 L281.1 62.5 L282.2 69.3 L283.2 77.5 L284.2 86.5 L285.3 95.7 L286.3 104.4 L287.4 111.9 L288.4 117.8 L289.5 121.6 L290.5 122.9 L291.5 121.6 L292.6 117.7 L293.6 111.3 L294.7 103.0 L295.7 93.1 L296.8 82.4 L297.8 71.5 L298.8 61.1 L299.9 52.0 L300.9 44.7 L302.0 39.9 L303.0 37.8 L304.0 40.0 L305.1 44.7 L306.1 51.4 L307.2 59.7 L308.2 69.1 L309.2 78.9 L310.3 88.4 L311.3 97.1 L312.4 104.4 L313.4 109.9 L314.5 113.3 L315.5 114.4 L316.5 113.3 L317.6 110.1 L318.6 105.2 L319.7 99.0 L320.7 91.9 L321.8 84.6 L322.8 77.5 L323.8 71.1 L324.9 65.9 L325.9 62.3 L327.0 60.4 L328.0 60.5 L329.0 60.6 L330.1 62.7 L331.1 66.7 L332.2 72.2 L333.2 78.9 L334.2 86.4 L335.3 94.0 L336.3 101.4 L337.4 107.8 L338.4 112.9 L339.5 116.1 L340.5 117.2 L341.5 116.1 L342.6 112.6 L343.6 107.1 L344.7 99.7 L345.7 91.0 L346.8 81.4 L347.8 71.6 L348.8 62.2 L349.9 53.9 L350.9 47.3 L352.0 42.7 L353.0 40.6 L354.0 41.8 L355.1 45.3 L356.1 51.0 L357.2 58.3 L358.2 66.9 L359.2 76.1 L360.3 85.2 L361.3 93.8 L362.4 101.2 L363.4 106.8 L364.5 110.3 L365.5 111.5 L366.5 110.3 L367.6 106.8 L368.6 101.2 L369.7 93.8 L370.7 85.2 L371.8 76.1 L372.8 66.9 L373.8 58.3 L374.9 51.0 L375.9 45.3 L377.0 41.8 L378.0 40.6" fill="none" stroke="#b2b2f5" stroke-width="1.4" stroke-linejoin="round"/><text x="194.0" y="11" font-size="8" font-weight="bold" text-anchor="middle" fill="#222">Buoy Gunung Anak Krakatau (GAK)</text><text x="374" y="15" font-size="4" text-anchor="end" fill="#55c">Created with Highcharts</text><rect x="334" y="27" width="26" height="9" fill="#d8ece6" stroke="#9cc" stroke-width="0.500"/><text x="347" y="34" font-size="5.500" text-anchor="middle" fill="#333">depth</text><text x="23" y="18.0" font-size="4.500" text-anchor="end" fill="#445">3.550</text><text x="23" y="29.7" font-size="4.500" text-anchor="end" fill="#445">3.500</text><text x="23" y="41.4" font-size="4.500" text-anchor="end" fill="#445">3.450</text><text x="23" y="53.0" font-size="4.500" text-anchor="end" fill="#445">3.400</text><text x="23" y="64.7" font-size="4.500" text-anchor="end" fill="#445">3.350</text><text x="23" y="76.4" font-size="4.500" text-anchor="end" fill="#445">3.300</text><text x="23" y="88.1" font-size="4.500" text-anchor="end" fill="#445">3.250</text><text x="23" y="99.8" font-size="4.500" text-anchor="end" fill="#445">3.200</text><text x="23" y="111.5" font-size="4.500" text-anchor="end" fill="#445">3.150</text><text x="23" y="123.1" font-size="4.500" text-anchor="end" fill="#445">3.100</text><text x="23" y="134.8" font-size="4.500" text-anchor="end" fill="#445">3.050</text><text x="23" y="146.5" font-size="4.500" text-anchor="end" fill="#445">3.000</text><text x="26.0" y="155" font-size="4.500" text-anchor="middle" fill="#445">8. Sep</text><text x="51.1" y="155" font-size="4.500" text-anchor="middle" fill="#445">8. Sep</text><text x="76.2" y="155" font-size="4.500" text-anchor="middle" fill="#445">9. Sep</text><text x="101.3" y="155" font-size="4.500" text-anchor="middle" fill="#445">9. Sep</text><text x="126.4" y="155" font-size="4.500" text-anchor="middle" fill="#445">10. Sep</text><text x="151.5" y="155" font-size="4.500" text-anchor="middle" fill="#445">10. Sep</text><text x="176.6" y="155" font-size="4.500" text-anchor="middle" fill="#445">11. Sep</text><text x="201.7" y="155" font-size="4.500" text-anchor="middle" fill="#445">11. Sep</text><text x="226.9" y="155" font-size="4.500" text-anchor="middle" fill="#445">12. Sep</text><text x="252.0" y="155" font-size="4.500" text-anchor="middle" fill="#445">12. Sep</text><text x="277.1" y="155" font-size="4.500" text-anchor="middle" fill="#445">13. Sep</text><text x="302.2" y="155" font-size="4.500" text-anchor="middle" fill="#445">13. Sep</text><text x="327.3" y="155" font-size="4.500" text-anchor="middle" fill="#445">14. Sep</text><text x="352.4" y="155" font-size="4.500" text-anchor="middle" fill="#445">14. Sep</text><text x="377.5" y="155" font-size="4.500" text-anchor="middle" fill="#445">15. Sep</text><text x="194.0" y="162" font-size="4.500" text-anchor="middle" fill="#445">Date Time</text><text x="9" y="83.0" font-size="4.500" text-anchor="middle" fill="#445" transform="rotate(-90 9 83.0)">Depth (m)</text></svg></div><div class="ab" style="left:19.1px;top:257.4px;width:388.4px;height:166.9px;overflow:hidden"><svg viewBox="0 0 388 166" width="100%" height="100%" preserveAspectRatio="none" style="display:block;font-family:&quot;Liberation Sans&quot;,sans-serif"><rect x="1.500" y="1.500" width="385" height="163" fill="#f0f0f0" stroke="#b8b8b8" stroke-width="3"/><text x="194.0" y="35" font-size="9.500" font-weight="bold" text-anchor="middle" fill="#222">Buoy Malang (MLG)</text><text x="194.0" y="71" font-size="4.800" text-anchor="middle" fill="#333">Tidak ada data :</text><text x="194.0" y="77" font-size="4.800" text-anchor="middle" fill="#333">Mulai tanggal 2021-09-08</text><text x="194.0" y="83" font-size="4.800" text-anchor="middle" fill="#333">2021-09-15 12:00:00 UTC</text></svg></div><div class="ln" style="left:0;width:1260.6px;top:454.6px"></div><span class="t" style="left:19.1px;top:473.4px">Grafik NDBC <span style="color:#337ab7">https://www.ndbc.noaa.gov</span></span><div class="ab" style="left:19.1px;top:508.8px;width:388.4px;height:168.4px;overflow:hidden"><svg viewBox="0 0 388 166" width="100%" height="100%" preserveAspectRatio="none" style="display:block;font-family:&quot;Liberation Mono&quot;,monospace"><rect x="1" y="1" width="386" height="164" fill="#dadada" stroke="#a8a8a8" stroke-width="2"/><rect x="44" y="26" width="328" height="170" fill="#fffbe3" stroke="#999" stroke-width="0.600"/><text x="194.0" y="10" font-size="9.200" font-weight="bold" text-anchor="middle" fill="#111">Water Column Height at Station 56003</text><text x="194.0" y="19.500" font-size="6" font-weight="bold" text-anchor="middle" fill="#222">Image Credit: NOAA/NWS/NDBC</text><path d="M44 58.0h328 M44 90.0h328 M44 122.0h328 M44 154.0h328 M44 186.0h328 M44 218.0h328 M109.6 26v170 M175.2 26v170 M240.8 26v170 M306.4 26v170" stroke="#ecdcc0" stroke-width="0.700" fill="none"/><path d="M48.0 300.0 L48.6 269.6 L49.2 247.1 L49.8 227.2 L50.4 208.9 L50.9 191.9 L51.5 176.0 L52.1 161.3 L52.7 147.6 L53.3 134.9 L53.9 123.3 L54.5 112.7 L55.1 103.2 L55.6 94.7 L56.2 87.4 L56.8 81.1 L57.4 76.0 L58.0 72.0 L58.6 69.1 L59.2 67.4 L59.8 66.8 L60.4 67.4 L60.9 69.1 L61.5 72.0 L62.1 76.0 L62.7 81.1 L63.3 87.4 L63.9 94.7 L64.5 103.2 L65.1 112.7 L65.7 123.3 L66.2 134.9 L66.8 147.6 L67.4 161.3 L68.0 176.0 L68.6 191.9 L69.2 208.9 L69.8 227.2 L70.4 247.1 L71.0 269.6 L71.5 300.0 L72.1 268.8 L72.7 245.8 L73.3 225.4 L73.9 206.6 L74.5 189.2 L75.1 173.0 L75.7 157.8 L76.2 143.8 L76.8 130.8 L77.4 118.9 L78.0 108.1 L78.6 98.3 L79.2 89.7 L79.8 82.1 L80.4 75.7 L81.0 70.5 L81.5 66.4 L82.1 63.4 L82.7 61.6 L83.3 61.1 L83.9 61.6 L84.5 63.4 L85.1 66.4 L85.7 70.5 L86.2 75.7 L86.8 82.1 L87.4 89.7 L88.0 98.3 L88.6 108.1 L89.2 118.9 L89.8 130.8 L90.4 143.8 L91.0 157.8 L91.5 173.0 L92.1 189.2 L92.7 206.6 L93.3 225.4 L93.9 245.8 L94.5 268.8 L95.1 300.0 L95.7 268.8 L96.3 245.8 L96.8 225.4 L97.4 206.6 L98.0 189.2 L98.6 173.0 L99.2 157.8 L99.8 143.8 L100.4 130.8 L101.0 118.9 L101.5 108.1 L102.1 98.3 L102.7 89.7 L103.3 82.1 L103.9 75.7 L104.5 70.5 L105.1 66.4 L105.7 63.4 L106.3 61.6 L106.8 61.1 L107.4 61.6 L108.0 63.4 L108.6 66.4 L109.2 70.5 L109.8 75.7 L110.4 82.1 L111.0 89.7 L111.6 98.3 L112.1 108.1 L112.7 118.9 L113.3 130.8 L113.9 143.8 L114.5 157.8 L115.1 173.0 L115.7 189.2 L116.3 206.6 L116.9 225.4 L117.4 245.8 L118.0 268.8 L118.6 300.0 L119.2 269.6 L119.8 247.1 L120.4 227.2 L121.0 208.9 L121.6 191.9 L122.1 176.0 L122.7 161.3 L123.3 147.6 L123.9 134.9 L124.5 123.3 L125.1 112.7 L125.7 103.2 L126.3 94.7 L126.9 87.4 L127.4 81.1 L128.0 76.0 L128.6 72.0 L129.2 69.1 L129.8 67.4 L130.4 66.8 L131.0 67.4 L131.6 69.1 L132.2 72.0 L132.7 76.0 L133.3 81.1 L133.9 87.4 L134.5 94.7 L135.1 103.2 L135.7 112.7 L136.3 123.3 L136.9 134.9 L137.4 147.6 L138.0 161.3 L138.6 176.0 L139.2 191.9 L139.8 208.9 L140.4 227.2 L141.0 247.1 L141.6 269.6 L142.2 300.0 L142.7 268.4 L143.3 245.1 L143.9 224.3 L144.5 205.3 L145.1 187.6 L145.7 171.2 L146.3 155.8 L146.9 141.6 L147.4 128.4 L148.0 116.3 L148.6 105.3 L149.2 95.4 L149.8 86.7 L150.4 79.0 L151.0 72.5 L151.6 67.2 L152.2 63.0 L152.7 60.0 L153.3 58.2 L153.9 57.6 L154.5 58.2 L155.1 60.0 L155.7 63.0 L156.3 67.2 L156.9 72.5 L157.5 79.0 L158.0 86.7 L158.6 95.4 L159.2 105.3 L159.8 116.3 L160.4 128.4 L161.0 141.6 L161.6 155.8 L162.2 171.2 L162.8 187.6 L163.3 205.3 L163.9 224.3 L164.5 245.1 L165.1 268.4 L165.7 300.0 L166.3 270.8 L166.9 249.2 L167.5 230.0 L168.0 212.5 L168.6 196.1 L169.2 180.9 L169.8 166.7 L170.4 153.6 L171.0 141.4 L171.6 130.2 L172.2 120.1 L172.8 110.9 L173.3 102.8 L173.9 95.7 L174.5 89.7 L175.1 84.8 L175.7 81.0 L176.3 78.2 L176.9 76.5 L177.5 76.0 L178.0 76.5 L178.6 78.2 L179.2 81.0 L179.8 84.8 L180.4 89.7 L181.0 95.7 L181.6 102.8 L182.2 110.9 L182.8 120.1 L183.3 130.2 L183.9 141.4 L184.5 153.6 L185.1 166.7 L185.7 180.9 L186.3 196.1 L186.9 212.5 L187.5 230.0 L188.1 249.2 L188.6 270.8 L189.2 300.0 L189.8 268.1 L190.4 244.5 L191.0 223.6 L191.6 204.4 L192.2 186.5 L192.8 169.9 L193.3 154.4 L193.9 140.0 L194.5 126.7 L195.1 114.5 L195.7 103.4 L196.3 93.5 L196.9 84.6 L197.5 76.9 L198.1 70.3 L198.6 64.9 L199.2 60.7 L199.8 57.7 L200.4 55.9 L201.0 55.3 L201.6 55.9 L202.2 57.7 L202.8 60.7 L203.4 64.9 L203.9 70.3 L204.5 76.9 L205.1 84.6 L205.7 93.5 L206.3 103.4 L206.9 114.5 L207.5 126.7 L208.1 140.0 L208.7 154.4 L209.2 169.9 L209.8 186.5 L210.4 204.4 L211.0 223.6 L211.6 244.5 L212.2 268.1 L212.8 300.0 L213.4 272.6 L213.9 252.5 L214.5 234.5 L215.1 218.1 L215.7 202.8 L216.3 188.6 L216.9 175.3 L217.5 163.0 L218.1 151.6 L218.7 141.2 L219.2 131.6 L219.8 123.1 L220.4 115.5 L221.0 108.9 L221.6 103.3 L222.2 98.6 L222.8 95.0 L223.4 92.5 L223.9 90.9 L224.5 90.4 L225.1 90.9 L225.7 92.5 L226.3 95.0 L226.9 98.6 L227.5 103.3 L228.1 108.9 L228.7 115.5 L229.2 123.1 L229.8 131.6 L230.4 141.2 L231.0 151.6 L231.6 163.0 L232.2 175.3 L232.8 188.6 L233.4 202.8 L234.0 218.1 L234.5 234.5 L235.1 252.5 L235.7 272.6 L236.3 300.0 L236.9 269.6 L237.5 247.1 L238.1 227.2 L238.7 208.9 L239.2 191.9 L239.8 176.0 L240.4 161.3 L241.0 147.6 L241.6 134.9 L242.2 123.3 L242.8 112.7 L243.4 103.2 L244.0 94.7 L244.5 87.4 L245.1 81.1 L245.7 76.0 L246.3 72.0 L246.9 69.1 L247.5 67.4 L248.1 66.8 L248.7 67.4 L249.3 69.1 L249.8 72.0 L250.4 76.0 L251.0 81.1 L251.6 87.4 L252.2 94.7 L252.8 103.2 L253.4 112.7 L254.0 123.3 L254.6 134.9 L255.1 147.6 L255.7 161.3 L256.3 176.0 L256.9 191.9 L257.5 208.9 L258.1 227.2 L258.7 247.1 L259.3 269.6 L259.8 300.0 L260.4 275.2 L261.0 256.9 L261.6 240.6 L262.2 225.7 L262.8 211.8 L263.4 198.9 L264.0 186.8 L264.6 175.7 L265.1 165.3 L265.7 155.8 L266.3 147.2 L266.9 139.5 L267.5 132.6 L268.1 126.6 L268.7 121.5 L269.3 117.3 L269.9 114.0 L270.4 111.7 L271.0 110.3 L271.6 109.8 L272.2 110.3 L272.8 111.7 L273.4 114.0 L274.0 117.3 L274.6 121.5 L275.1 126.6 L275.7 132.6 L276.3 139.5 L276.9 147.2 L277.5 155.8 L278.1 165.3 L278.7 175.7 L279.3 186.8 L279.9 198.9 L280.4 211.8 L281.0 225.7 L281.6 240.6 L282.2 256.9 L282.8 275.2 L283.4 300.0 L284.0 271.1 L284.6 249.7 L285.1 230.8 L285.7 213.4 L286.3 197.2 L286.9 182.2 L287.5 168.1 L288.1 155.1 L288.7 143.1 L289.3 132.0 L289.9 122.0 L290.4 112.9 L291.0 104.9 L291.6 97.9 L292.2 92.0 L292.8 87.1 L293.4 83.3 L294.0 80.5 L294.6 78.9 L295.2 78.3 L295.7 78.9 L296.3 80.5 L296.9 83.3 L297.5 87.1 L298.1 92.0 L298.7 97.9 L299.3 104.9 L299.9 112.9 L300.4 122.0 L301.0 132.0 L301.6 143.1 L302.2 155.1 L302.8 168.1 L303.4 182.2 L304.0 197.2 L304.6 213.4 L305.2 230.8 L305.7 249.7 L306.3 271.1 L306.9 300.0 L307.5 277.9 L308.1 261.6 L308.7 247.1 L309.3 233.7 L309.9 221.4 L310.5 209.9 L311.0 199.2 L311.6 189.2 L312.2 180.0 L312.8 171.5 L313.4 163.8 L314.0 156.9 L314.6 150.8 L315.2 145.4 L315.8 140.9 L316.3 137.2 L316.9 134.2 L317.5 132.2 L318.1 130.9 L318.7 130.5 L319.3 130.9 L319.9 132.2 L320.5 134.2 L321.0 137.2 L321.6 140.9 L322.2 145.4 L322.8 150.8 L323.4 156.9 L324.0 163.8 L324.6 171.5 L325.2 180.0 L325.8 189.2 L326.3 199.2 L326.9 209.9 L327.5 221.4 L328.1 233.7 L328.7 247.1 L329.3 261.6 L329.9 277.9 L330.5 300.0 L331.1 273.1 L331.6 253.2 L332.2 235.5 L332.8 219.3 L333.4 204.3 L334.0 190.2 L334.6 177.2 L335.2 165.0 L335.8 153.8 L336.3 143.5 L336.9 134.2 L337.5 125.7 L338.1 118.3 L338.7 111.8 L339.3 106.2 L339.9 101.7 L340.5 98.1 L341.1 95.6 L341.6 94.1 L342.2 93.5 L342.8 94.1 L343.4 95.6 L344.0 98.1 L344.6 101.7 L345.2 106.2 L345.8 111.8 L346.3 118.3 L346.9 125.7 L347.5 134.2 L348.1 143.5 L348.7 153.8 L349.3 165.0 L349.9 177.2 L350.5 190.2 L351.1 204.3 L351.6 219.3 L352.2 235.5 L352.8 253.2 L353.4 273.1 L354.0 300.0" fill="none" stroke="#7272e0" stroke-width="1.6" stroke-linejoin="round"/><text x="41" y="29" font-size="6.500" font-weight="bold" text-anchor="end" fill="#222">5664.00</text><text x="41" y="61" font-size="6.500" font-weight="bold" text-anchor="end" fill="#222">5663.50</text><text x="41" y="93" font-size="6.500" font-weight="bold" text-anchor="end" fill="#222">5663.00</text><text x="41" y="125" font-size="6.500" font-weight="bold" text-anchor="end" fill="#222">5662.50</text><text x="41" y="157" font-size="6.500" font-weight="bold" text-anchor="end" fill="#222">5662.00</text><text x="41" y="189" font-size="6.500" font-weight="bold" text-anchor="end" fill="#222">5661.50</text><text x="7" y="150" font-size="5" text-anchor="middle" fill="#222" transform="rotate(-90 7 150)">meters</text></svg></div><div class="ab" style="left:435.7px;top:508.8px;width:387.0px;height:168.4px;overflow:hidden"><svg viewBox="0 0 388 166" width="100%" height="100%" preserveAspectRatio="none" style="display:block;font-family:&quot;Liberation Mono&quot;,monospace"><rect x="1" y="1" width="386" height="164" fill="#dadada" stroke="#a8a8a8" stroke-width="2"/><rect x="44" y="26" width="328" height="170" fill="#fffbe3" stroke="#999" stroke-width="0.600"/><text x="194.0" y="10" font-size="9.200" font-weight="bold" text-anchor="middle" fill="#111">Water Column Height at Station 56001</text><text x="194.0" y="19.500" font-size="6" font-weight="bold" text-anchor="middle" fill="#222">Image Credit: NOAA/NWS/NDBC</text><text x="194.0" y="139" font-size="9.200" font-weight="bold" text-anchor="middle" fill="#2222ee">No data for the time period of</text><text x="194.0" y="149" font-size="9.200" font-weight="bold" text-anchor="middle" fill="#2222ee">09/08/2021 0502 GMT - 09/15/2021 0502 GMT</text></svg></div><div class="ab" style="left:854.5px;top:508.8px;width:384.9px;height:168.4px;overflow:hidden"><svg viewBox="0 0 388 166" width="100%" height="100%" preserveAspectRatio="none" style="display:block;font-family:&quot;Liberation Mono&quot;,monospace"><rect x="1" y="1" width="386" height="164" fill="#dadada" stroke="#a8a8a8" stroke-width="2"/><rect x="44" y="26" width="328" height="170" fill="#fffbe3" stroke="#999" stroke-width="0.600"/><text x="194.0" y="10" font-size="9.200" font-weight="bold" text-anchor="middle" fill="#111">Water Column Height at Station 23401</text><text x="194.0" y="19.500" font-size="6" font-weight="bold" text-anchor="middle" fill="#222">Image Credit: NOAA/NWS/NDBC</text><path d="M44 58.0h328 M44 90.0h328 M44 122.0h328 M44 154.0h328 M44 186.0h328 M44 218.0h328 M109.6 26v170 M175.2 26v170 M240.8 26v170 M306.4 26v170" stroke="#ecdcc0" stroke-width="0.700" fill="none"/><path d="M48.0 300.0 L48.6 268.1 L49.2 244.5 L49.8 223.6 L50.4 204.4 L50.9 186.5 L51.5 169.9 L52.1 154.4 L52.7 140.0 L53.3 126.7 L53.9 114.5 L54.5 103.4 L55.1 93.5 L55.6 84.6 L56.2 76.9 L56.8 70.3 L57.4 64.9 L58.0 60.7 L58.6 57.7 L59.2 55.9 L59.8 55.3 L60.4 55.9 L60.9 57.7 L61.5 60.7 L62.1 64.9 L62.7 70.3 L63.3 76.9 L63.9 84.6 L64.5 93.5 L65.1 103.4 L65.7 114.5 L66.2 126.7 L66.8 140.0 L67.4 154.4 L68.0 169.9 L68.6 186.5 L69.2 204.4 L69.8 223.6 L70.4 244.5 L71.0 268.1 L71.5 300.0 L72.1 267.3 L72.7 243.2 L73.3 221.7 L73.9 202.0 L74.5 183.7 L75.1 166.7 L75.7 150.8 L76.2 136.1 L76.8 122.5 L77.4 110.0 L78.0 98.6 L78.6 88.4 L79.2 79.3 L79.8 71.4 L80.4 64.7 L81.0 59.1 L81.5 54.8 L82.1 51.7 L82.7 49.9 L83.3 49.3 L83.9 49.9 L84.5 51.7 L85.1 54.8 L85.7 59.1 L86.2 64.7 L86.8 71.4 L87.4 79.3 L88.0 88.4 L88.6 98.6 L89.2 110.0 L89.8 122.5 L90.4 136.1 L91.0 150.8 L91.5 166.7 L92.1 183.7 L92.7 202.0 L93.3 221.7 L93.9 243.2 L94.5 267.3 L95.1 300.0 L95.7 268.1 L96.3 244.5 L96.8 223.6 L97.4 204.4 L98.0 186.5 L98.6 169.9 L99.2 154.4 L99.8 140.0 L100.4 126.7 L101.0 114.5 L101.5 103.4 L102.1 93.5 L102.7 84.6 L103.3 76.9 L103.9 70.3 L104.5 64.9 L105.1 60.7 L105.7 57.7 L106.3 55.9 L106.8 55.3 L107.4 55.9 L108.0 57.7 L108.6 60.7 L109.2 64.9 L109.8 70.3 L110.4 76.9 L111.0 84.6 L111.6 93.5 L112.1 103.4 L112.7 114.5 L113.3 126.7 L113.9 140.0 L114.5 154.4 L115.1 169.9 L115.7 186.5 L116.3 204.4 L116.9 223.6 L117.4 244.5 L118.0 268.1 L118.6 300.0 L119.2 267.8 L119.8 244.0 L120.4 222.8 L121.0 203.4 L121.6 185.4 L122.1 168.6 L122.7 153.0 L123.3 138.5 L123.9 125.1 L124.5 112.8 L125.1 101.6 L125.7 91.5 L126.3 82.5 L126.9 74.7 L127.4 68.1 L128.0 62.7 L128.6 58.4 L129.2 55.4 L129.8 53.5 L130.4 52.9 L131.0 53.5 L131.6 55.4 L132.2 58.4 L132.7 62.7 L133.3 68.1 L133.9 74.7 L134.5 82.5 L135.1 91.5 L135.7 101.6 L136.3 112.8 L136.9 125.1 L137.4 138.5 L138.0 153.0 L138.6 168.6 L139.2 185.4 L139.8 203.4 L140.4 222.8 L141.0 244.0 L141.6 267.8 L142.2 300.0 L142.7 268.1 L143.3 244.5 L143.9 223.6 L144.5 204.4 L145.1 186.5 L145.7 169.9 L146.3 154.4 L146.9 140.0 L147.4 126.7 L148.0 114.5 L148.6 103.4 L149.2 93.5 L149.8 84.6 L150.4 76.9 L151.0 70.3 L151.6 64.9 L152.2 60.7 L152.7 57.7 L153.3 55.9 L153.9 55.3 L154.5 55.9 L155.1 57.7 L155.7 60.7 L156.3 64.9 L156.9 70.3 L157.5 76.9 L158.0 84.6 L158.6 93.5 L159.2 103.4 L159.8 114.5 L160.4 126.7 L161.0 140.0 L161.6 154.4 L162.2 169.9 L162.8 186.5 L163.3 204.4 L163.9 223.6 L164.5 244.5 L165.1 268.1 L165.7 300.0 L166.3 268.5 L166.9 245.3 L167.5 224.6 L168.0 205.7 L168.6 188.1 L169.2 171.7 L169.8 156.4 L170.4 142.3 L171.0 129.2 L171.6 117.1 L172.2 106.2 L172.8 96.3 L173.3 87.6 L173.9 80.0 L174.5 73.5 L175.1 68.2 L175.7 64.0 L176.3 61.1 L176.9 59.3 L177.5 58.7 L178.0 59.3 L178.6 61.1 L179.2 64.0 L179.8 68.2 L180.4 73.5 L181.0 80.0 L181.6 87.6 L182.2 96.3 L182.8 106.2 L183.3 117.1 L183.9 129.2 L184.5 142.3 L185.1 156.4 L185.7 171.7 L186.3 188.1 L186.9 205.7 L187.5 224.6 L188.1 245.3 L188.6 268.5 L189.2 300.0 L189.8 268.8 L190.4 245.8 L191.0 225.4 L191.6 206.6 L192.2 189.2 L192.8 173.0 L193.3 157.8 L193.9 143.8 L194.5 130.8 L195.1 118.9 L195.7 108.1 L196.3 98.3 L196.9 89.7 L197.5 82.1 L198.1 75.7 L198.6 70.5 L199.2 66.4 L199.8 63.4 L200.4 61.6 L201.0 61.1 L201.6 61.6 L202.2 63.4 L202.8 66.4 L203.4 70.5 L203.9 75.7 L204.5 82.1 L205.1 89.7 L205.7 98.3 L206.3 108.1 L206.9 118.9 L207.5 130.8 L208.1 143.8 L208.7 157.8 L209.2 173.0 L209.8 189.2 L210.4 206.6 L211.0 225.4 L211.6 245.8 L212.2 268.8 L212.8 300.0 L213.4 270.3 L213.9 248.4 L214.5 229.0 L215.1 211.1 L215.7 194.5 L216.3 179.1 L216.9 164.7 L217.5 151.3 L218.1 139.0 L218.7 127.7 L219.2 117.3 L219.8 108.1 L220.4 99.8 L221.0 92.6 L221.6 86.5 L222.2 81.5 L222.8 77.6 L223.4 74.8 L223.9 73.1 L224.5 72.6 L225.1 73.1 L225.7 74.8 L226.3 77.6 L226.9 81.5 L227.5 86.5 L228.1 92.6 L228.7 99.8 L229.2 108.1 L229.8 117.3 L230.4 127.7 L231.0 139.0 L231.6 151.3 L232.2 164.7 L232.8 179.1 L233.4 194.5 L234.0 211.1 L234.5 229.0 L235.1 248.4 L235.7 270.3 L236.3 300.0 L236.9 269.6 L237.5 247.1 L238.1 227.2 L238.7 208.9 L239.2 191.9 L239.8 176.0 L240.4 161.3 L241.0 147.6 L241.6 134.9 L242.2 123.3 L242.8 112.7 L243.4 103.2 L244.0 94.7 L244.5 87.4 L245.1 81.1 L245.7 76.0 L246.3 72.0 L246.9 69.1 L247.5 67.4 L248.1 66.8 L248.7 67.4 L249.3 69.1 L249.8 72.0 L250.4 76.0 L251.0 81.1 L251.6 87.4 L252.2 94.7 L252.8 103.2 L253.4 112.7 L254.0 123.3 L254.6 134.9 L255.1 147.6 L255.7 161.3 L256.3 176.0 L256.9 191.9 L257.5 208.9 L258.1 227.2 L258.7 247.1 L259.3 269.6 L259.8 300.0 L260.4 271.9 L261.0 251.1 L261.6 232.7 L262.2 215.7 L262.8 200.0 L263.4 185.4 L264.0 171.7 L264.6 159.0 L265.1 147.3 L265.7 136.6 L266.3 126.8 L266.9 118.0 L267.5 110.2 L268.1 103.4 L268.7 97.6 L269.3 92.9 L269.9 89.2 L270.4 86.5 L271.0 84.9 L271.6 84.4 L272.2 84.9 L272.8 86.5 L273.4 89.2 L274.0 92.9 L274.6 97.6 L275.1 103.4 L275.7 110.2 L276.3 118.0 L276.9 126.8 L277.5 136.6 L278.1 147.3 L278.7 159.0 L279.3 171.7 L279.9 185.4 L280.4 200.0 L281.0 215.7 L281.6 232.7 L282.2 251.1 L282.8 271.9 L283.4 300.0 L284.0 271.5 L284.6 250.6 L285.1 231.9 L285.7 214.8 L286.3 198.9 L286.9 184.1 L287.5 170.3 L288.1 157.5 L288.7 145.7 L289.3 134.8 L289.9 124.9 L290.4 116.0 L291.0 108.1 L291.6 101.2 L292.2 95.4 L292.8 90.6 L293.4 86.8 L294.0 84.2 L294.6 82.6 L295.2 82.0 L295.7 82.6 L296.3 84.2 L296.9 86.8 L297.5 90.6 L298.1 95.4 L298.7 101.2 L299.3 108.1 L299.9 116.0 L300.4 124.9 L301.0 134.8 L301.6 145.7 L302.2 157.5 L302.8 170.3 L303.4 184.1 L304.0 198.9 L304.6 214.8 L305.2 231.9 L305.7 250.6 L306.3 271.5 L306.9 300.0 L307.5 274.9 L308.1 256.4 L308.7 239.9 L309.3 224.8 L309.9 210.8 L310.5 197.8 L311.0 185.6 L311.6 174.3 L312.2 163.8 L312.8 154.3 L313.4 145.5 L314.0 137.7 L314.6 130.7 L315.2 124.7 L315.8 119.5 L316.3 115.3 L316.9 112.0 L317.5 109.6 L318.1 108.2 L318.7 107.7 L319.3 108.2 L319.9 109.6 L320.5 112.0 L321.0 115.3 L321.6 119.5 L322.2 124.7 L322.8 130.7 L323.4 137.7 L324.0 145.5 L324.6 154.3 L325.2 163.8 L325.8 174.3 L326.3 185.6 L326.9 197.8 L327.5 210.8 L328.1 224.8 L328.7 239.9 L329.3 256.4 L329.9 274.9 L330.5 300.0 L331.1 273.4 L331.6 253.7 L332.2 236.3 L332.8 220.2 L333.4 205.4 L334.0 191.5 L334.6 178.6 L335.2 166.6 L335.8 155.5 L336.3 145.3 L336.9 136.1 L337.5 127.7 L338.1 120.3 L338.7 113.9 L339.3 108.4 L339.9 103.9 L340.5 100.4 L341.1 97.9 L341.6 96.4 L342.2 95.9 L342.8 96.4 L343.4 97.9 L344.0 100.4 L344.6 103.9 L345.2 108.4 L345.8 113.9 L346.3 120.3 L346.9 127.7 L347.5 136.1 L348.1 145.3 L348.7 155.5 L349.3 166.6 L349.9 178.6 L350.5 191.5 L351.1 205.4 L351.6 220.2 L352.2 236.3 L352.8 253.7 L353.4 273.4 L354.0 300.0" fill="none" stroke="#7272e0" stroke-width="1.6" stroke-linejoin="round"/><text x="41" y="29" font-size="6.500" font-weight="bold" text-anchor="end" fill="#222">2608.00</text><text x="41" y="61" font-size="6.500" font-weight="bold" text-anchor="end" fill="#222">2607.50</text><text x="41" y="93" font-size="6.500" font-weight="bold" text-anchor="end" fill="#222">2607.00</text><text x="41" y="125" font-size="6.500" font-weight="bold" text-anchor="end" fill="#222">2606.50</text><text x="41" y="157" font-size="6.500" font-weight="bold" text-anchor="end" fill="#222">2606.00</text><text x="41" y="189" font-size="6.500" font-weight="bold" text-anchor="end" fill="#222">2605.50</text><text x="7" y="150" font-size="5" text-anchor="middle" fill="#222" transform="rotate(-90 7 150)">meters</text></svg></div></div></div></div><div class="panel" style="left:571px;top:330.1px;width:548px;height:267px"><div class="inner" style="top:-0.36px;width:1539.3px;height:753.0px;transform:scale(0.356,0.356)"><div class="sb"><div class="nh" style="height:156px"><svg class="pat" viewBox="0 0 220 157" preserveAspectRatio="none"><path d="M95 0 L220 0 L220 120 Z" fill="#283b4c"/><path d="M0 60 L120 157 L0 157 Z" fill="#213242"/><path d="M60 0 L220 140 L220 157 L190 157 L40 20 Z" fill="#263949" opacity=".6"/></svg><div class="logo" style="top:33px"><svg viewBox="0 0 48 48" width="48" height="48"><circle cx="24" cy="24" r="24" fill="#fff"/><ellipse cx="24" cy="27" rx="21" ry="7.500" fill="none" stroke="#2450c8" stroke-width="1.700" transform="rotate(-17 24 27)"/><text x="24.500" y="27.500" font-family="Liberation Sans,sans-serif" font-size="13.500" font-weight="bold" font-style="italic" text-anchor="middle" fill="#0a0a0a" stroke="#0a0a0a" stroke-width="0.500">BPPT</text><path d="M19 25.500 L23.500 21.500 L22.500 25.500 Z" fill="#d22"/></svg></div><div class="nm" style="top:89px">Administrator</div><div class="rl" style="top:107.5px">Admin <span style="font-size:8px">&#9660;</span></div></div><div class="mi"><svg class="ic" viewBox="0 0 13 13"><path d="M1 7 L6.5 2 L12 7 L12 12 L8 12 L8 8.5 L5 8.5 L5 12 L1 12 Z" fill="#a7b1c2"/></svg><span class="tx">Dashboard</span></div><div class="mi"><svg class="ic" viewBox="0 0 13 13"><path d="M4.300 1.500H12.600L11 9.300H2.700Z" fill="#a7b1c2"/><path d="M2.900 3.300L0.700 9.800Q0.300 12.200 2.500 12.200H10.400L10.900 10.700H3Q1.800 10.700 2.200 9.500L3.600 3.300Z" fill="#a7b1c2"/></svg><span class="tx">Buoy Data</span><svg class="ar" width="6" height="9" viewBox="0 0 6 9" style="top:19px"><path d="M5 1L1.500 4.500L5 8" fill="none" stroke="#a7b1c2" stroke-width="1.300"/></svg></div><div class="grp"><div class="mi"><svg class="ic" viewBox="0 0 13 13"><path d="M4.300 1.500H12.600L11 9.300H2.700Z" fill="#fff"/><path d="M2.900 3.300L0.700 9.800Q0.300 12.200 2.500 12.200H10.400L10.900 10.700H3Q1.800 10.700 2.200 9.500L3.600 3.300Z" fill="#fff"/></svg><span class="tx">Monitoring</span><svg class="ar" width="9" height="6" viewBox="0 0 9 6" style="top:21px"><path d="M1 1L4.500 4.500L8 1" fill="none" stroke="#fff" stroke-width="1.300"/></svg></div><div class="si">Buoy And CBT</div><div class="si on">Earthquake</div><div class="si">Engineering Status</div></div><div class="mi"><svg class="ic" viewBox="0 0 13 13"><path d="M2 1 H11 V12.5 H2 Z" fill="#a7b1c2"/><path d="M4 3h1.6v1.6H4zM7.4 3H9v1.6H7.4zM4 6h1.6v1.6H4zM7.4 6H9v1.6H7.4zM5.5 9.5h2v3h-2z" fill="#2f4050"/></svg><span class="tx">Recapitulation</span><svg class="ar" width="6" height="9" viewBox="0 0 6 9" style="top:19px"><path d="M5 1L1.500 4.500L5 8" fill="none" stroke="#a7b1c2" stroke-width="1.300"/></svg></div><div class="mi"><svg class="ic" viewBox="0 0 13 13"><path d="M4.300 1.500H12.600L11 9.300H2.700Z" fill="#a7b1c2"/><path d="M2.900 3.300L0.700 9.800Q0.300 12.200 2.500 12.200H10.400L10.900 10.700H3Q1.800 10.700 2.200 9.500L3.600 3.300Z" fill="#a7b1c2"/></svg><span class="tx">Documents</span><svg class="ar" width="6" height="9" viewBox="0 0 6 9" style="top:19px"><path d="M5 1L1.500 4.500L5 8" fill="none" stroke="#a7b1c2" stroke-width="1.300"/></svg></div><div class="mi"><svg class="ic" viewBox="0 0 13 13"><path d="M4.300 1.500H12.600L11 9.300H2.700Z" fill="#a7b1c2"/><path d="M2.900 3.300L0.700 9.800Q0.300 12.200 2.500 12.200H10.400L10.900 10.700H3Q1.800 10.700 2.200 9.500L3.600 3.300Z" fill="#a7b1c2"/></svg><span class="tx">Asset</span><svg class="ar" width="6" height="9" viewBox="0 0 6 9" style="top:19px"><path d="M5 1L1.500 4.500L5 8" fill="none" stroke="#a7b1c2" stroke-width="1.300"/></svg></div><div class="mi"><svg class="ic" viewBox="0 0 13 13"><path d="M4.300 1.500H12.600L11 9.300H2.700Z" fill="#a7b1c2"/><path d="M2.900 3.300L0.700 9.800Q0.300 12.200 2.500 12.200H10.400L10.900 10.700H3Q1.800 10.700 2.200 9.500L3.600 3.300Z" fill="#a7b1c2"/></svg><span class="tx">Reports</span><svg class="ar" width="6" height="9" viewBox="0 0 6 9" style="top:19px"><path d="M5 1L1.500 4.500L5 8" fill="none" stroke="#a7b1c2" stroke-width="1.300"/></svg></div><div class="mi"><svg class="ic" viewBox="0 0 13 13"><path d="M4.300 1.500H12.600L11 9.300H2.700Z" fill="#a7b1c2"/><path d="M2.900 3.300L0.700 9.800Q0.300 12.200 2.500 12.200H10.400L10.900 10.700H3Q1.800 10.700 2.200 9.500L3.600 3.300Z" fill="#a7b1c2"/></svg><span class="tx">Guest Log</span></div><div class="mi"><svg class="ic" viewBox="0 0 13 13"><path d="M0.5 2 H12.5 V11.5 H0.5 Z" fill="#a7b1c2"/><path d="M1.8 5h2.6v1.5H1.8zM5.3 5h2.6v1.5H5.3zM8.8 5h2.6v1.5H8.8zM1.8 8h2.6v1.5H1.8zM5.3 8h2.6v1.5H5.3zM8.8 8h2.6v1.5H8.8z" fill="#2f4050"/></svg><span class="tx">Todo Lists</span></div><div class="mi"><svg class="ic" viewBox="0 0 13 13"><path d="M3 1.5h7V5H3z M1 5h11v5H10v2.5H3V10H1z" fill="#a7b1c2"/><path d="M4 8.5h5v3H4z" fill="#2f4050"/></svg><span class="tx">Presensi</span></div><div class="mi"><svg class="ic" viewBox="0 0 13 13"><path d="M4.300 1.500H12.600L11 9.300H2.700Z" fill="#a7b1c2"/><path d="M2.900 3.300L0.700 9.800Q0.300 12.200 2.500 12.200H10.400L10.900 10.700H3Q1.800 10.700 2.200 9.500L3.600 3.300Z" fill="#a7b1c2"/></svg><span class="tx">Job Schedule</span></div><div class="mi"><svg class="ic" viewBox="0 0 13 13"><path d="M1 7 L3 5 L5.3 7.4 L10.5 2 L12.5 4 L5.3 11.5 Z" fill="#a7b1c2"/></svg><span class="tx">Clock In</span></div><div class="mi"><svg class="ic" viewBox="0 0 13 13"><circle cx="6.5" cy="3.8" r="2.8" fill="#a7b1c2"/><path d="M1.5 12.5 C1.5 8 4 7 6.5 7 S11.5 8 11.5 12.5 Z" fill="#a7b1c2"/></svg><span class="tx">Users</span><svg class="ar" width="6" height="9" viewBox="0 0 6 9" style="top:19px"><path d="M5 1L1.500 4.500L5 8" fill="none" stroke="#a7b1c2" stroke-width="1.300"/></svg></div></div><div class="nav" style="height:60.4101123595505px"><div class="hb" style="left:20px;top:14px;width:39px;height:30px"><i style="top:9px"></i><i style="top:13.7px"></i><i style="top:18.4px"></i></div><div class="srch" style="left:76px;top:17px">Search for something...</div><div class="tr" style="right:30.89887640449433px;top:19px"><svg width="14" height="12" viewBox="0 0 14 12" style="vertical-align:-1px;margin-right:11px"><path d="M0 1h5v2H2v6h3v2H0z M5 4.5h4V2l5 4-5 4V7.500H5z" fill="#999c9e"/></svg>Logout</div><svg class="ab" style="right:134.89887640449433px;top:21px" width="13" height="12" viewBox="0 0 15 13"><path d="M0 1h15v2H0zM0 5.500h15v2H0zM0 10h15v2H0z" fill="#999c9e"/></svg><div class="bdg" style="right:123.89887640449433px;top:9px">2</div><svg class="ab" style="right:176.89887640449433px;top:20px" width="14" height="14" viewBox="0 0 14 14"><path d="M7 0.500c-3 0-4.200 2.200-4.200 5 0 3-1.800 4-1.800 5h12c0-1-1.800-2-1.800-5 0-2.800-1.200-5-4.200-5zM5.300 11.700a1.800 1.800 0 0 0 3.400 0z" fill="#999c9e"/></svg><div class="bdg" style="right:167.89887640449433px;top:9px">0</div></div><div class="hd" style="top:60.4101123595505px;height:94.80337078651684px"><div class="h2" style="left:28.033707865168424px;top:19.5px">Gempa</div><div class="bc" style="left:28.033707865168424px;top:56.5px">Home <s>/</s> Gempa <s>/</s> <b>All</b></div><div class="btn" style="right:18.258426966292063px;top:21.06741573033708px;width:93px;height:28px;line-height:28px;font-weight:normal">Jump to <svg width="12" height="11" viewBox="0 0 12 11" style="vertical-align:-1px"><path d="M12 0L0 6l4 1.200V11l2.200-2.600L9 9.500z" fill="#fff"/></svg> <span style="font-size:7px;vertical-align:2px">&#9660;</span></div></div><div class="ibox" style="left:238.1px;top:177.7px;width:1292.1px;height:609.6px"><div class="ibt" style="height:50.8px"><span class="ab" style="left:13.3px;top:12.8px;font-size:14px"><svg width="13" height="12" viewBox="0 0 13 12" style="vertical-align:-1px"><path d="M0 0h3.500v12H0zM4.700 0h3.600v12H4.700zM9.500 0H13v12H9.500z" fill="#555"/><path d="M0 3.700h13v.8H0zM0 7.600h13v.8H0z" fill="#fff"/></svg> Gempa</span><div class="btn" style="left:1211.4px;top:15.7px;width:66.7px;height:28.1px;line-height:28.1px"><svg width="12" height="11" viewBox="0 0 13 13" style="vertical-align:-1px"><path d="M3 1.500h7V5H3z M1 5h11v5H10v2.500H3V10H1z" fill="#fff"/><path d="M4 8.500h5v3H4z" fill="#1ab394"/></svg> Print</div></div><span class="th" style="left:26.0px;top:73.6px">Tanggal</span><span class="th" style="left:134.8px;top:73.6px">Jam</span><span class="th" style="left:252.1px;top:73.6px">Lintang</span><span class="th" style="left:331.5px;top:73.6px">Bujur</span><span class="th" style="left:422.8px;top:73.6px">Magnitude</span><span class="th" style="left:527.4px;top:73.6px">Kedalaman</span><span class="th" style="left:634.8px;top:73.6px">Wilayah</span><span class="th" style="left:1007.7px;top:73.6px">Potensi</span><span class="th" style="left:1214.2px;top:73.6px">Posisi</span><div class="ln" style="left:19.0px;width:1251.4px;top:102.8px;height:2px"></div><div class="zb" style="left:19.0px;width:1251.4px;top:104.2px;height:46.9px"></div><div class="ln" style="left:19.0px;width:1251.4px;top:151.1px"></div><span class="t" style="left:26.0px;top:109.3px">15 Sep 2021</span><span class="t" style="left:134.8px;top:109.3px">07:49:47 WIB</span><span class="t" style="left:252.1px;top:109.3px">1.28 LU</span><span class="t" style="left:331.5px;top:109.3px">122.16 BT</span><span class="t" style="left:422.8px;top:109.3px">5.4</span><span class="t" style="left:527.4px;top:109.3px">20 km</span><span class="t" style="left:634.8px;top:109.3px">85 km BaratLaut BOALEMO-GORONTALO</span><span class="t" style="left:1007.7px;top:109.3px">Tidak berpotensi tsunami</span><div class="btn" style="left:1214.2px;top:110.4px;width:35.8px;height:33.0px"><svg width="10" height="14" viewBox="0 0 10 14" style="margin-top:9px"><path d="M5 0a4.500 4.500 0 0 0-4.500 4.500c0 3 4.500 9 4.500 9s4.500-6 4.500-9a4.500 4.500 0 0 0-4.500-4.500zm0 2.700a1.800 1.800 0 1 1 0 3.600a1.800 1.800 0 0 1 0-3.600z" fill="#fff" fill-rule="evenodd"/></svg></div><div class="ln" style="left:19.0px;width:1251.4px;top:200.2px"></div><span class="t" style="left:26.0px;top:160.1px">15 Sep 2021</span><span class="t" style="left:134.8px;top:160.1px">03:13:53 WIB</span><span class="t" style="left:252.1px;top:160.1px">2.90 LU</span><span class="t" style="left:331.5px;top:160.1px">95.32 BT</span><span class="t" style="left:422.8px;top:160.1px">5.6</span><span class="t" style="left:527.4px;top:160.1px">10 km</span><span class="t" style="left:634.8px;top:160.1px">125 km BaratLaut SINABANG-ACEH</span><span class="t" style="left:1007.7px;top:160.1px">Tidak berpotensi tsunami</span><div class="btn" style="left:1214.2px;top:161.2px;width:35.8px;height:33.0px"><svg width="10" height="14" viewBox="0 0 10 14" style="margin-top:9px"><path d="M5 0a4.500 4.500 0 0 0-4.500 4.500c0 3 4.500 9 4.500 9s4.500-6 4.500-9a4.500 4.500 0 0 0-4.500-4.500zm0 2.700a1.800 1.800 0 1 1 0 3.600a1.800 1.800 0 0 1 0-3.600z" fill="#fff" fill-rule="evenodd"/></svg></div><div class="zb" style="left:19.0px;width:1251.4px;top:200.2px;height:54.1px"></div><div class="ln" style="left:19.0px;width:1251.4px;top:254.3px"></div><span class="t" style="left:26.0px;top:209.3px">12 Sep 2021</span><span class="t" style="left:134.8px;top:209.3px">16:02:20 WIB</span><span class="t" style="left:252.1px;top:209.3px">0.52 LS</span><span class="t" style="left:331.5px;top:209.3px">99.64 BT</span><span class="t" style="left:422.8px;top:209.3px">5.3</span><span class="t" style="left:527.4px;top:209.3px">29 km</span><span class="t" style="left:634.8px;top:209.3px">49 km BaratDaya AGAM-SUMBAR</span><span class="t" style="left:1007.7px;top:209.3px">Tidak berpotensi tsunami</span><div class="btn" style="left:1214.2px;top:210.4px;width:35.8px;height:33.0px"><svg width="10" height="14" viewBox="0 0 10 14" style="margin-top:9px"><path d="M5 0a4.500 4.500 0 0 0-4.500 4.500c0 3 4.500 9 4.500 9s4.500-6 4.500-9a4.500 4.500 0 0 0-4.500-4.500zm0 2.700a1.800 1.800 0 1 1 0 3.600a1.800 1.800 0 0 1 0-3.600z" fill="#fff" fill-rule="evenodd"/></svg></div><div class="ln" style="left:19.0px;width:1251.4px;top:302.1px"></div><span class="t" style="left:26.0px;top:263.4px">09 Sep 2021</span><span class="t" style="left:134.8px;top:263.4px">09:16:31 WIB</span><span class="t" style="left:252.1px;top:263.4px">3.94 LS</span><span class="t" style="left:331.5px;top:263.4px">134.97 BT</span><span class="t" style="left:422.8px;top:263.4px">5.3</span><span class="t" style="left:527.4px;top:263.4px">10 km</span><span class="t" style="left:634.8px;top:263.4px">99 km BaratDaya NABIRE-PAPUA</span><span class="t" style="left:1007.7px;top:263.4px">Tidak berpotensi tsunami</span><div class="btn" style="left:1214.2px;top:264.4px;width:35.8px;height:33.0px"><svg width="10" height="14" viewBox="0 0 10 14" style="margin-top:9px"><path d="M5 0a4.500 4.500 0 0 0-4.500 4.500c0 3 4.500 9 4.500 9s4.500-6 4.500-9a4.500 4.500 0 0 0-4.500-4.500zm0 2.700a1.800 1.800 0 1 1 0 3.600a1.800 1.800 0 0 1 0-3.600z" fill="#fff" fill-rule="evenodd"/></svg></div><div class="zb" style="left:19.0px;width:1251.4px;top:302.1px;height:52.7px"></div><div class="ln" style="left:19.0px;width:1251.4px;top:354.7px"></div><span class="t" style="left:26.0px;top:311.1px">08 Sep 2021</span><span class="t" style="left:134.8px;top:311.1px">07:13:00 WIB</span><span class="t" style="left:252.1px;top:311.1px">7.68 LS</span><span class="t" style="left:331.5px;top:311.1px">128.45 BT</span><span class="t" style="left:422.8px;top:311.1px">5.0</span><span class="t" style="left:527.4px;top:311.1px">147 km</span><span class="t" style="left:634.8px;top:311.1px">89 km TimurLaut MALUKUBRTDAYA</span><span class="t" style="left:1007.7px;top:311.1px">Tidak berpotensi tsunami</span><div class="btn" style="left:1214.2px;top:312.2px;width:35.8px;height:33.0px"><svg width="10" height="14" viewBox="0 0 10 14" style="margin-top:9px"><path d="M5 0a4.500 4.500 0 0 0-4.500 4.500c0 3 4.500 9 4.500 9s4.500-6 4.500-9a4.500 4.500 0 0 0-4.500-4.500zm0 2.700a1.800 1.800 0 1 1 0 3.600a1.800 1.800 0 0 1 0-3.600z" fill="#fff" fill-rule="evenodd"/></svg></div><div class="ln" style="left:19.0px;width:1251.4px;top:405.3px"></div><span class="t" style="left:26.0px;top:363.8px">05 Sep 2021</span><span class="t" style="left:134.8px;top:363.8px">19:16:56 WIB</span><span class="t" style="left:252.1px;top:363.8px">2.59 LS</span><span class="t" style="left:331.5px;top:363.8px">127.43 BT</span><span class="t" style="left:422.8px;top:363.8px">5.0</span><span class="t" style="left:527.4px;top:363.8px">23 km</span><span class="t" style="left:634.8px;top:363.8px">83 km TimurLaut BURU-MALUKU</span><span class="t" style="left:1007.7px;top:363.8px">Tidak berpotensi tsunami</span><div class="btn" style="left:1214.2px;top:364.9px;width:35.8px;height:33.0px"><svg width="10" height="14" viewBox="0 0 10 14" style="margin-top:9px"><path d="M5 0a4.500 4.500 0 0 0-4.500 4.500c0 3 4.500 9 4.500 9s4.500-6 4.500-9a4.500 4.500 0 0 0-4.500-4.500zm0 2.700a1.800 1.800 0 1 1 0 3.600a1.800 1.800 0 0 1 0-3.600z" fill="#fff" fill-rule="evenodd"/></svg></div><div class="zb" style="left:19.0px;width:1251.4px;top:405.3px;height:49.9px"></div><div class="ln" style="left:19.0px;width:1251.4px;top:455.2px"></div><span class="t" style="left:26.0px;top:414.3px">29 Agu 2021</span><span class="t" style="left:134.8px;top:414.3px">04:00:18 WIB</span><span class="t" style="left:252.1px;top:414.3px">3.43 LS</span><span class="t" style="left:331.5px;top:414.3px">140.21 BT</span><span class="t" style="left:422.8px;top:414.3px">5.0</span><span class="t" style="left:527.4px;top:414.3px">10 km</span><span class="t" style="left:634.8px;top:414.3px">62 km BaratDaya KEEROM-PAPUA</span><span class="t" style="left:1007.7px;top:414.3px">Tidak berpotensi tsunami</span><div class="btn" style="left:1214.2px;top:415.4px;width:35.8px;height:33.0px"><svg width="10" height="14" viewBox="0 0 10 14" style="margin-top:9px"><path d="M5 0a4.500 4.500 0 0 0-4.500 4.500c0 3 4.500 9 4.500 9s4.500-6 4.500-9a4.500 4.500 0 0 0-4.500-4.500zm0 2.700a1.800 1.800 0 1 1 0 3.600a1.800 1.800 0 0 1 0-3.600z" fill="#fff" fill-rule="evenodd"/></svg></div><div class="ln" style="left:19.0px;width:1251.4px;top:505.7px"></div><span class="t" style="left:26.0px;top:464.2px">28 Agu 2021</span><span class="t" style="left:134.8px;top:464.2px">19:27:24 WIB</span><span class="t" style="left:252.1px;top:464.2px">3.47 LS</span><span class="t" style="left:331.5px;top:464.2px">140.31 BT</span><span class="t" style="left:422.8px;top:464.2px">6.0</span><span class="t" style="left:527.4px;top:464.2px">10 km</span><span class="t" style="left:634.8px;top:464.2px">52 km BaratDaya KEEROM-PAPUA</span><span class="t" style="left:1007.7px;top:464.2px">Tidak berpotensi tsunami</span><div class="btn" style="left:1214.2px;top:465.3px;width:35.8px;height:33.0px"><svg width="10" height="14" viewBox="0 0 10 14" style="margin-top:9px"><path d="M5 0a4.500 4.500 0 0 0-4.500 4.500c0 3 4.500 9 4.500 9s4.500-6 4.500-9a4.500 4.500 0 0 0-4.500-4.500zm0 2.700a1.800 1.800 0 1 1 0 3.600a1.800 1.800 0 0 1 0-3.600z" fill="#fff" fill-rule="evenodd"/></svg></div><div class="zb" style="left:19.0px;width:1251.4px;top:505.7px;height:50.6px"></div><div class="ln" style="left:19.0px;width:1251.4px;top:556.3px"></div><span class="t" style="left:26.0px;top:514.8px">28 Agu 2021</span><span class="t" style="left:134.8px;top:514.8px">17:41:20 WIB</span><span class="t" style="left:252.1px;top:514.8px">9.76 LS</span><span class="t" style="left:331.5px;top:514.8px">120.19 BT</span><span class="t" style="left:422.8px;top:514.8px">5.0</span><span class="t" style="left:527.4px;top:514.8px">50 km</span><span class="t" style="left:634.8px;top:514.8px">13 km BaratDaya WAINGAPU-NTT</span><span class="t" style="left:1007.7px;top:514.8px">Tidak berpotensi tsunami</span><div class="btn" style="left:1214.2px;top:515.8px;width:35.8px;height:33.0px"><svg width="10" height="14" viewBox="0 0 10 14" style="margin-top:9px"><path d="M5 0a4.500 4.500 0 0 0-4.500 4.500c0 3 4.500 9 4.500 9s4.500-6 4.500-9a4.500 4.500 0 0 0-4.500-4.500zm0 2.700a1.800 1.800 0 1 1 0 3.600a1.800 1.800 0 0 1 0-3.600z" fill="#fff" fill-rule="evenodd"/></svg></div><div class="ln" style="left:19.0px;width:1251.4px;top:607.6px"></div><span class="t" style="left:26.0px;top:565.3px">27 Agu 2021</span><span class="t" style="left:134.8px;top:565.3px">11:05:42 WIB</span><span class="t" style="left:252.1px;top:565.3px">1.12 LU</span><span class="t" style="left:331.5px;top:565.3px">126.48 BT</span><span class="t" style="left:422.8px;top:565.3px">5.1</span><span class="t" style="left:527.4px;top:565.3px">35 km</span><span class="t" style="left:634.8px;top:565.3px">112 km BaratLaut TERNATE-MALUT</span><span class="t" style="left:1007.7px;top:565.3px">Tidak berpotensi tsunami</span><div class="btn" style="left:1214.2px;top:566.4px;width:35.8px;height:33.0px"><svg width="10" height="14" viewBox="0 0 10 14" style="margin-top:9px"><path d="M5 0a4.500 4.500 0 0 0-4.500 4.500c0 3 4.500 9 4.500 9s4.500-6 4.500-9a4.500 4.500 0 0 0-4.500-4.500zm0 2.700a1.800 1.800 0 1 1 0 3.600a1.800 1.800 0 0 1 0-3.600z" fill="#fff" fill-rule="evenodd"/></svg></div></div></div></div><div class="panel" style="left:1.25px;top:655.1px;width:529.5px;height:268.4px"><div class="inner" style="top:0.00px;width:1527.7px;height:755.9px;transform:scale(0.3466,0.356)"><div class="sb"><div class="nh" style="height:157px"><svg class="pat" viewBox="0 0 220 157" preserveAspectRatio="none"><path d="M95 0 L220 0 L220 120 Z" fill="#283b4c"/><path d="M0 60 L120 157 L0 157 Z" fill="#213242"/><path d="M60 0 L220 140 L220 157 L190 157 L40 20 Z" fill="#263949" opacity=".6"/></svg><div class="logo" style="top:33px"><svg viewBox="0 0 48 48" width="48" height="48"><circle cx="24" cy="24" r="24" fill="#fff"/><ellipse cx="24" cy="27" rx="21" ry="7.500" fill="none" stroke="#2450c8" stroke-width="1.700" transform="rotate(-17 24 27)"/><text x="24.500" y="27.500" font-family="Liberation Sans,sans-serif" font-size="13.500" font-weight="bold" font-style="italic" text-anchor="middle" fill="#0a0a0a" stroke="#0a0a0a" stroke-width="0.500">BPPT</text><path d="M19 25.500 L23.500 21.500 L22.500 25.500 Z" fill="#d22"/></svg></div><div class="nm" style="top:89px">Administrator</div><div class="rl" style="top:107.5px">Admin <span style="font-size:8px">&#9660;</span></div></div><div class="mi"><svg class="ic" viewBox="0 0 13 13"><path d="M1 7 L6.5 2 L12 7 L12 12 L8 12 L8 8.5 L5 8.5 L5 12 L1 12 Z" fill="#a7b1c2"/></svg><span class="tx">Dashboard</span></div><div class="mi"><svg class="ic" viewBox="0 0 13 13"><path d="M4.300 1.500H12.600L11 9.300H2.700Z" fill="#a7b1c2"/><path d="M2.900 3.300L0.700 9.800Q0.300 12.200 2.500 12.200H10.400L10.900 10.700H3Q1.800 10.700 2.200 9.500L3.600 3.300Z" fill="#a7b1c2"/></svg><span class="tx">Buoy Data</span><svg class="ar" width="6" height="9" viewBox="0 0 6 9" style="top:19px"><path d="M5 1L1.500 4.500L5 8" fill="none" stroke="#a7b1c2" stroke-width="1.300"/></svg></div><div class="mi"><svg class="ic" viewBox="0 0 13 13"><path d="M4.300 1.500H12.600L11 9.300H2.700Z" fill="#a7b1c2"/><path d="M2.900 3.300L0.700 9.800Q0.300 12.200 2.500 12.200H10.400L10.900 10.700H3Q1.800 10.700 2.200 9.500L3.600 3.300Z" fill="#a7b1c2"/></svg><span class="tx">Monitoring</span><svg class="ar" width="6" height="9" viewBox="0 0 6 9" style="top:19px"><path d="M5 1L1.500 4.500L5 8" fill="none" stroke="#a7b1c2" stroke-width="1.300"/></svg></div><div class="mi"><svg class="ic" viewBox="0 0 13 13"><path d="M2 1 H11 V12.5 H2 Z" fill="#a7b1c2"/><path d="M4 3h1.6v1.6H4zM7.4 3H9v1.6H7.4zM4 6h1.6v1.6H4zM7.4 6H9v1.6H7.4zM5.5 9.5h2v3h-2z" fill="#2f4050"/></svg><span class="tx">Recapitulation</span><svg class="ar" width="6" height="9" viewBox="0 0 6 9" style="top:19px"><path d="M5 1L1.500 4.500L5 8" fill="none" stroke="#a7b1c2" stroke-width="1.300"/></svg></div><div class="grp"><div class="mi"><svg class="ic" viewBox="0 0 13 13"><path d="M4.300 1.500H12.600L11 9.300H2.700Z" fill="#fff"/><path d="M2.900 3.300L0.700 9.800Q0.300 12.200 2.500 12.200H10.400L10.900 10.700H3Q1.800 10.700 2.200 9.500L3.600 3.300Z" fill="#fff"/></svg><span class="tx">Documents</span><svg class="ar" width="9" height="6" viewBox="0 0 9 6" style="top:21px"><path d="M1 1L4.500 4.500L8 1" fill="none" stroke="#fff" stroke-width="1.300"/></svg></div><div class="si on">Documents</div><div class="si">Category</div></div><div class="mi"><svg class="ic" viewBox="0 0 13 13"><path d="M4.300 1.500H12.600L11 9.300H2.700Z" fill="#a7b1c2"/><path d="M2.900 3.300L0.700 9.800Q0.300 12.200 2.500 12.200H10.400L10.900 10.700H3Q1.800 10.700 2.200 9.500L3.600 3.300Z" fill="#a7b1c2"/></svg><span class="tx">Asset</span><svg class="ar" width="6" height="9" viewBox="0 0 6 9" style="top:19px"><path d="M5 1L1.500 4.500L5 8" fill="none" stroke="#a7b1c2" stroke-width="1.300"/></svg></div><div class="mi"><svg class="ic" viewBox="0 0 13 13"><path d="M4.300 1.500H12.600L11 9.300H2.700Z" fill="#a7b1c2"/><path d="M2.900 3.300L0.700 9.800Q0.300 12.200 2.500 12.200H10.400L10.900 10.700H3Q1.800 10.700 2.200 9.500L3.600 3.300Z" fill="#a7b1c2"/></svg><span class="tx">Reports</span><svg class="ar" width="6" height="9" viewBox="0 0 6 9" style="top:19px"><path d="M5 1L1.500 4.500L5 8" fill="none" stroke="#a7b1c2" stroke-width="1.300"/></svg></div><div class="mi"><svg class="ic" viewBox="0 0 13 13"><path d="M4.300 1.500H12.600L11 9.300H2.700Z" fill="#a7b1c2"/><path d="M2.900 3.300L0.700 9.800Q0.300 12.200 2.500 12.200H10.400L10.900 10.700H3Q1.800 10.700 2.200 9.500L3.600 3.300Z" fill="#a7b1c2"/></svg><span class="tx">Guest Log</span></div><div class="mi"><svg class="ic" viewBox="0 0 13 13"><path d="M0.5 2 H12.5 V11.5 H0.5 Z" fill="#a7b1c2"/><path d="M1.8 5h2.6v1.5H1.8zM5.3 5h2.6v1.5H5.3zM8.8 5h2.6v1.5H8.8zM1.8 8h2.6v1.5H1.8zM5.3 8h2.6v1.5H5.3zM8.8 8h2.6v1.5H8.8z" fill="#2f4050"/></svg><span class="tx">Todo Lists</span></div><div class="mi"><svg class="ic" viewBox="0 0 13 13"><path d="M3 1.5h7V5H3z M1 5h11v5H10v2.5H3V10H1z" fill="#a7b1c2"/><path d="M4 8.5h5v3H4z" fill="#2f4050"/></svg><span class="tx">Presensi</span></div><div class="mi"><svg class="ic" viewBox="0 0 13 13"><path d="M4.300 1.500H12.600L11 9.300H2.700Z" fill="#a7b1c2"/><path d="M2.900 3.300L0.700 9.800Q0.300 12.200 2.500 12.200H10.400L10.900 10.700H3Q1.800 10.700 2.200 9.500L3.600 3.300Z" fill="#a7b1c2"/></svg><span class="tx">Job Schedule</span></div><div class="mi"><svg class="ic" viewBox="0 0 13 13"><path d="M1 7 L3 5 L5.3 7.4 L10.5 2 L12.5 4 L5.3 11.5 Z" fill="#a7b1c2"/></svg><span class="tx">Clock In</span></div><div class="mi"><svg class="ic" viewBox="0 0 13 13"><circle cx="6.5" cy="3.8" r="2.8" fill="#a7b1c2"/><path d="M1.5 12.5 C1.5 8 4 7 6.5 7 S11.5 8 11.5 12.5 Z" fill="#a7b1c2"/></svg><span class="tx">Users</span><svg class="ar" width="6" height="9" viewBox="0 0 6 9" style="top:19px"><path d="M5 1L1.500 4.500L5 8" fill="none" stroke="#a7b1c2" stroke-width="1.300"/></svg></div></div><div class="nav" style="height:58.707865168539264px"><div class="hb" style="left:20px;top:14px;width:39px;height:30px"><i style="top:9px"></i><i style="top:13.7px"></i><i style="top:18.4px"></i></div><div class="srch" style="left:76px;top:20px">Search for something...</div><div class="tr" style="right:31.01557991921527px;top:22px"><svg width="14" height="12" viewBox="0 0 14 12" style="vertical-align:-1px;margin-right:11px"><path d="M0 1h5v2H2v6h3v2H0z M5 4.5h4V2l5 4-5 4V7.500H5z" fill="#999c9e"/></svg>Logout</div><svg class="ab" style="right:135.01557991921527px;top:24px" width="13" height="12" viewBox="0 0 15 13"><path d="M0 1h15v2H0zM0 5.500h15v2H0zM0 10h15v2H0z" fill="#999c9e"/></svg><div class="bdg" style="right:124.01557991921527px;top:12px">2</div><svg class="ab" style="right:177.01557991921527px;top:23px" width="14" height="14" viewBox="0 0 14 14"><path d="M7 0.500c-3 0-4.200 2.200-4.200 5 0 3-1.800 4-1.800 5h12c0-1-1.800-2-1.800-5 0-2.800-1.200-5-4.200-5zM5.300 11.700a1.800 1.800 0 0 0 3.400 0z" fill="#999c9e"/></svg><div class="bdg" style="right:168.01557991921527px;top:12px">0</div></div><div class="hd" style="top:58.707865168539264px;height:97.61235955056182px"><div class="h2" style="left:27.40334679746104px;top:24px">Documents</div><div class="bc" style="left:27.40334679746104px;top:60px">Home <s>/</s> Documents <s>/</s> <b>All</b></div><div class="btn" style="right:23.802654356607036px;top:22px;width:93px;height:28px;line-height:28px;font-weight:normal">Jump to <svg width="12" height="11" viewBox="0 0 12 11" style="vertical-align:-1px"><path d="M12 0L0 6l4 1.200V11l2.200-2.600L9 9.500z" fill="#fff"/></svg> <span style="font-size:7px;vertical-align:2px">&#9660;</span></div></div><div class="ibox" style="left:235.9px;top:178.8px;width:1278.9px;height:621.5px"><div class="ibt" style="height:47.9px"><span class="ab" style="left:16.6px;top:11.3px;font-size:14px"><svg width="13" height="12" viewBox="0 0 13 12" style="vertical-align:-1px"><path d="M0 0h3.500v12H0zM4.700 0h3.600v12H4.700zM9.500 0H13v12H9.500z" fill="#555"/><path d="M0 3.700h13v.8H0zM0 7.600h13v.8H0z" fill="#fff"/></svg> Documents</span><div class="btn" style="left:1062.5px;top:12.0px;width:129.1px;height:29.5px;line-height:29.5px"><svg width="11" height="11" viewBox="0 0 11 11" style="vertical-align:-1px"><circle cx="5.500" cy="5.500" r="5.500" fill="#fff"/><path d="M4.700 2.500h1.600v2.200h2.200v1.600H6.300v2.200H4.700V6.300H2.500V4.700h2.200z" fill="#1ab394"/></svg> New Documents</div><div class="btn" style="left:1201.0px;top:12.0px;width:63.5px;height:29.5px;line-height:29.5px"><svg width="12" height="11" viewBox="0 0 13 13" style="vertical-align:-1px"><path d="M3 1.500h7V5H3z M1 5h11v5H10v2.500H3V10H1z" fill="#fff"/><path d="M4 8.500h5v3H4z" fill="#1ab394"/></svg> Print</div></div><div class="ab" style="left:21.6px;top:77.4px;width:76.5px;height:26.0px;background:#fff;border:1px solid #e7eaec;border-radius:3px;font-size:12px;color:#888;line-height:24.0px;text-align:center;white-space:nowrap"><svg width="11" height="11" viewBox="0 0 11 11" style="vertical-align:-1px"><path d="M5.500 1a4.500 4.500 0 1 0 4.300 5.800h-1.600a3 3 0 1 1-.6-3.200L6 5.200h4.500V.7L9 2.200A4.500 4.500 0 0 0 5.500 1z" fill="#555"/></svg> Refresh</div><div class="ab" style="left:126.2px;top:77.4px;width:1089.9px;height:26.0px;background:#fff;border:1px solid #e5e6e7;font-size:12px;color:#aaa;line-height:24.0px;padding-left:10px">search</div><div class="btn" style="left:1216.1px;top:77.4px;width:41.1px;height:26.0px;line-height:26.0px">Go!</div><span class="thb" style="left:28.9px;top:122.6px">ID</span><span class="thb" style="left:61.3px;top:122.6px">Document<br>Category</span><span class="thb" style="left:162.3px;top:122.6px">Judul</span><span class="thb" style="left:338.3px;top:122.6px">Content</span><span class="thb" style="left:432.1px;top:122.6px">Slug</span><span class="thb" style="left:605.9px;top:122.6px">Download Url</span><span class="thb" style="left:976.6px;top:122.6px">Download<br>Count</span><span class="thb" style="left:1071.1px;top:122.6px">Status</span><span class="thb" style="left:1136.0px;top:122.6px">Create<br>User</span><span class="th" style="left:1221.1px;top:122.6px;font-weight:normal;color:#333">Aksi</span><div class="ln" style="left:21.6px;width:1237.7px;top:170.1px;height:2px"></div><div class="zb" style="left:21.6px;width:1237.7px;top:171.5px;height:101.1px"></div><div class="ln" style="left:21.6px;width:1237.7px;top:272.6px"></div><span class="t" style="left:28.9px;top:176.8px;line-height:19.600px">1</span><span class="t" style="left:162.3px;top:176.8px;line-height:19.600px">UU NO 32 Perkodingan</span><span class="t" style="left:338.3px;top:176.8px;line-height:19.600px">testestestes</span><span class="t" style="left:432.1px;top:176.8px;line-height:19.600px">uu-no-33-tahun-2009-<br>tentang-perfilman</span><span class="t" style="left:605.9px;top:176.8px;line-height:19.600px">https://www.easybiz.id/download/uu-no-33-tahun-2009-<br>tentang-perfilman/?wpdmdl=3111</span><span class="t" style="left:976.6px;top:176.8px;line-height:19.600px">9140</span><span class="t" style="left:1071.1px;top:176.8px;line-height:19.600px">1</span><span class="t" style="left:1136.0px;top:176.8px;line-height:19.600px">1</span><div class="ab" style="left:1224.8px;top:178.7px;width:22px;height:19px;background:#fff;border:1px solid #e7eaec;border-radius:3px;text-align:center;line-height:17px"><svg width="13" height="9" viewBox="0 0 13 9"><path d="M0 4.500C2 1.200 4.300 0 6.500 0S11 1.200 13 4.500C11 7.800 8.700 9 6.500 9S2 7.800 0 4.500z" fill="#444"/><circle cx="6.500" cy="4.300" r="1.700" fill="#fff"/></svg></div><div class="ab" style="left:1224.8px;top:200.9px;width:22px;height:19px;background:#fff;border:1px solid #e7eaec;border-radius:3px;text-align:center;line-height:17px"><svg width="11" height="11" viewBox="0 0 11 11"><path d="M1 3h6v7H1z" fill="none" stroke="#444" stroke-width="1.200"/><path d="M4 1h6v7" fill="none" stroke="#444" stroke-width="1.200"/></svg></div><div class="ab" style="left:1224.8px;top:223.1px;width:22px;height:19px;background:#fff;border:1px solid #e7eaec;border-radius:3px;text-align:center;line-height:17px"><svg width="11" height="11" viewBox="0 0 11 11"><path d="M1 2.500h5v1.200H2.200v5.100h5.100V6.500h1.200V10H1z" fill="#444"/><path d="M5 7l.5-2L9.500.8 11 2.300 6.800 6.500z" fill="#444"/></svg></div><div class="ab" style="left:1224.8px;top:245.3px;width:22px;height:19px;background:#fff;border:1px solid #e7eaec;border-radius:3px;text-align:center;line-height:17px"><svg width="10" height="11" viewBox="0 0 10 11"><path d="M0 1.500h3.500V.5h3v1H10V3H0zM1 3.800h8V11H1z" fill="#444"/></svg></div><div class="ln" style="left:21.6px;width:1237.7px;top:377.2px"></div><span class="t" style="left:28.9px;top:278.0px;line-height:19.600px">2</span><span class="t" style="left:162.3px;top:278.0px;line-height:19.600px">UU No. 2 Tahun 2017<br>Tentang Jasa Konstruksi</span><span class="t" style="left:432.1px;top:278.0px;line-height:19.600px">uu-no-2-tahun-2017-<br>tentang-jasa-konstruksi</span><span class="t" style="left:605.9px;top:278.0px;line-height:19.600px">https://www.easybiz.id/download/uu-no-2-tahun-2017-<br>tentang-jasa-konstruksi/?wpdmdl=2805</span><span class="t" style="left:976.6px;top:278.0px;line-height:19.600px">10649</span><span class="t" style="left:1071.1px;top:278.0px;line-height:19.600px">publish</span><span class="t" style="left:1136.0px;top:278.0px;line-height:19.600px">1</span><div class="ab" style="left:1224.8px;top:279.9px;width:22px;height:19px;background:#fff;border:1px solid #e7eaec;border-radius:3px;text-align:center;line-height:17px"><svg width="13" height="9" viewBox="0 0 13 9"><path d="M0 4.500C2 1.200 4.300 0 6.500 0S11 1.200 13 4.500C11 7.800 8.700 9 6.500 9S2 7.800 0 4.500z" fill="#444"/><circle cx="6.500" cy="4.300" r="1.700" fill="#fff"/></svg></div><div class="ab" style="left:1224.8px;top:302.1px;width:22px;height:19px;background:#fff;border:1px solid #e7eaec;border-radius:3px;text-align:center;line-height:17px"><svg width="11" height="11" viewBox="0 0 11 11"><path d="M1 3h6v7H1z" fill="none" stroke="#444" stroke-width="1.200"/><path d="M4 1h6v7" fill="none" stroke="#444" stroke-width="1.200"/></svg></div><div class="ab" style="left:1224.8px;top:324.3px;width:22px;height:19px;background:#fff;border:1px solid #e7eaec;border-radius:3px;text-align:center;line-height:17px"><svg width="11" height="11" viewBox="0 0 11 11"><path d="M1 2.500h5v1.200H2.200v5.100h5.100V6.500h1.200V10H1z" fill="#444"/><path d="M5 7l.5-2L9.500.8 11 2.300 6.800 6.500z" fill="#444"/></svg></div><div class="ab" style="left:1224.8px;top:346.4px;width:22px;height:19px;background:#fff;border:1px solid #e7eaec;border-radius:3px;text-align:center;line-height:17px"><svg width="10" height="11" viewBox="0 0 10 11"><path d="M0 1.500h3.500V.5h3v1H10V3H0zM1 3.800h8V11H1z" fill="#444"/></svg></div><div class="zb" style="left:21.6px;width:1237.7px;top:377.2px;height:103.2px"></div><div class="ln" style="left:21.6px;width:1237.7px;top:480.4px"></div><span class="t" style="left:28.9px;top:382.6px;line-height:19.600px">3</span><span class="t" style="left:162.3px;top:382.6px;line-height:19.600px">UU No.40/2014 Tentang<br>Perasuransian</span><span class="t" style="left:432.1px;top:382.6px;line-height:19.600px">uu-no402014-tentang-<br>perasuransian</span><span class="t" style="left:605.9px;top:382.6px;line-height:19.600px">https://www.easybiz.id/download/uu-no-402014-tentang-<br>perasuransian/?wpdmdl=2072</span><span class="t" style="left:976.6px;top:382.6px;line-height:19.600px">13200</span><span class="t" style="left:1071.1px;top:382.6px;line-height:19.600px">publish</span><span class="t" style="left:1136.0px;top:382.6px;line-height:19.600px">1</span><div class="ab" style="left:1224.8px;top:384.5px;width:22px;height:19px;background:#fff;border:1px solid #e7eaec;border-radius:3px;text-align:center;line-height:17px"><svg width="13" height="9" viewBox="0 0 13 9"><path d="M0 4.500C2 1.200 4.300 0 6.500 0S11 1.200 13 4.500C11 7.800 8.700 9 6.500 9S2 7.800 0 4.500z" fill="#444"/><circle cx="6.500" cy="4.300" r="1.700" fill="#fff"/></svg></div><div class="ab" style="left:1224.8px;top:406.7px;width:22px;height:19px;background:#fff;border:1px solid #e7eaec;border-radius:3px;text-align:center;line-height:17px"><svg width="11" height="11" viewBox="0 0 11 11"><path d="M1 3h6v7H1z" fill="none" stroke="#444" stroke-width="1.200"/><path d="M4 1h6v7" fill="none" stroke="#444" stroke-width="1.200"/></svg></div><div class="ab" style="left:1224.8px;top:428.9px;width:22px;height:19px;background:#fff;border:1px solid #e7eaec;border-radius:3px;text-align:center;line-height:17px"><svg width="11" height="11" viewBox="0 0 11 11"><path d="M1 2.500h5v1.200H2.200v5.100h5.100V6.500h1.200V10H1z" fill="#444"/><path d="M5 7l.5-2L9.500.8 11 2.300 6.800 6.500z" fill="#444"/></svg></div><div class="ab" style="left:1224.8px;top:451.1px;width:22px;height:19px;background:#fff;border:1px solid #e7eaec;border-radius:3px;text-align:center;line-height:17px"><svg width="10" height="11" viewBox="0 0 10 11"><path d="M0 1.500h3.500V.5h3v1H10V3H0zM1 3.800h8V11H1z" fill="#444"/></svg></div><div class="ln" style="left:21.6px;width:1237.7px;top:584.4px"></div><span class="t" style="left:28.9px;top:485.8px;line-height:19.600px">4</span><span class="t" style="left:162.3px;top:485.8px;line-height:19.600px">UU No.1/2013 Tentang<br>Lembaga Keuangan<br>Mikro</span><span class="t" style="left:432.1px;top:485.8px;line-height:19.600px">uu-no12013-tentang-<br>lembaga-keuangan-<br>mikro</span><span class="t" style="left:605.9px;top:485.8px;line-height:19.600px">https://www.easybiz.id/download/uu-no-12013-tentang-<br>lembaga-keuangan-mikro/?wpdmdl=2058</span><span class="t" style="left:976.6px;top:485.8px;line-height:19.600px">14666</span><span class="t" style="left:1071.1px;top:485.8px;line-height:19.600px">publish</span><span class="t" style="left:1136.0px;top:485.8px;line-height:19.600px">1</span><div class="ab" style="left:1224.8px;top:487.7px;width:22px;height:19px;background:#fff;border:1px solid #e7eaec;border-radius:3px;text-align:center;line-height:17px"><svg width="13" height="9" viewBox="0 0 13 9"><path d="M0 4.500C2 1.200 4.300 0 6.500 0S11 1.200 13 4.500C11 7.800 8.700 9 6.500 9S2 7.800 0 4.500z" fill="#444"/><circle cx="6.500" cy="4.300" r="1.700" fill="#fff"/></svg></div><div class="ab" style="left:1224.8px;top:509.9px;width:22px;height:19px;background:#fff;border:1px solid #e7eaec;border-radius:3px;text-align:center;line-height:17px"><svg width="11" height="11" viewBox="0 0 11 11"><path d="M1 3h6v7H1z" fill="none" stroke="#444" stroke-width="1.200"/><path d="M4 1h6v7" fill="none" stroke="#444" stroke-width="1.200"/></svg></div><div class="ab" style="left:1224.8px;top:532.1px;width:22px;height:19px;background:#fff;border:1px solid #e7eaec;border-radius:3px;text-align:center;line-height:17px"><svg width="11" height="11" viewBox="0 0 11 11"><path d="M1 2.500h5v1.200H2.200v5.100h5.100V6.500h1.200V10H1z" fill="#444"/><path d="M5 7l.5-2L9.500.8 11 2.300 6.800 6.500z" fill="#444"/></svg></div><div class="ab" style="left:1224.8px;top:554.3px;width:22px;height:19px;background:#fff;border:1px solid #e7eaec;border-radius:3px;text-align:center;line-height:17px"><svg width="10" height="11" viewBox="0 0 10 11"><path d="M0 1.500h3.500V.5h3v1H10V3H0zM1 3.800h8V11H1z" fill="#444"/></svg></div></div></div></div><div class="panel" style="left:573px;top:648.1px;width:546px;height:277.7px"><div class="inner" style="top:-2.98px;width:1525.1px;height:756.5px;transform:scale(0.358,0.372)"><div class="sb"><div class="nh" style="height:157px"><svg class="pat" viewBox="0 0 220 157" preserveAspectRatio="none"><path d="M95 0 L220 0 L220 120 Z" fill="#283b4c"/><path d="M0 60 L120 157 L0 157 Z" fill="#213242"/><path d="M60 0 L220 140 L220 157 L190 157 L40 20 Z" fill="#263949" opacity=".6"/></svg><div class="logo" style="top:33px"><svg viewBox="0 0 48 48" width="48" height="48"><circle cx="24" cy="24" r="24" fill="#fff"/><ellipse cx="24" cy="27" rx="21" ry="7.500" fill="none" stroke="#2450c8" stroke-width="1.700" transform="rotate(-17 24 27)"/><text x="24.500" y="27.500" font-family="Liberation Sans,sans-serif" font-size="13.500" font-weight="bold" font-style="italic" text-anchor="middle" fill="#0a0a0a" stroke="#0a0a0a" stroke-width="0.500">BPPT</text><path d="M19 25.500 L23.500 21.500 L22.500 25.500 Z" fill="#d22"/></svg></div><div class="nm" style="top:89px">Administrator</div><div class="rl" style="top:107.5px">Admin <span style="font-size:8px">&#9660;</span></div></div><div class="mi"><svg class="ic" viewBox="0 0 13 13"><path d="M1 7 L6.5 2 L12 7 L12 12 L8 12 L8 8.5 L5 8.5 L5 12 L1 12 Z" fill="#a7b1c2"/></svg><span class="tx">Dashboard</span></div><div class="mi"><svg class="ic" viewBox="0 0 13 13"><path d="M4.300 1.500H12.600L11 9.300H2.700Z" fill="#a7b1c2"/><path d="M2.900 3.300L0.700 9.800Q0.300 12.200 2.500 12.200H10.400L10.900 10.700H3Q1.800 10.700 2.200 9.500L3.600 3.300Z" fill="#a7b1c2"/></svg><span class="tx">Buoy Data</span><svg class="ar" width="6" height="9" viewBox="0 0 6 9" style="top:19px"><path d="M5 1L1.500 4.500L5 8" fill="none" stroke="#a7b1c2" stroke-width="1.300"/></svg></div><div class="mi"><svg class="ic" viewBox="0 0 13 13"><path d="M4.300 1.500H12.600L11 9.300H2.700Z" fill="#a7b1c2"/><path d="M2.900 3.300L0.700 9.800Q0.300 12.200 2.500 12.200H10.400L10.900 10.700H3Q1.800 10.700 2.200 9.500L3.600 3.300Z" fill="#a7b1c2"/></svg><span class="tx">Monitoring</span><svg class="ar" width="6" height="9" viewBox="0 0 6 9" style="top:19px"><path d="M5 1L1.500 4.500L5 8" fill="none" stroke="#a7b1c2" stroke-width="1.300"/></svg></div><div class="grp"><div class="mi"><svg class="ic" viewBox="0 0 13 13"><path d="M2 1 H11 V12.5 H2 Z" fill="#fff"/><path d="M4 3h1.6v1.6H4zM7.4 3H9v1.6H7.4zM4 6h1.6v1.6H4zM7.4 6H9v1.6H7.4zM5.5 9.5h2v3h-2z" fill="#2f4050"/></svg><span class="tx">Recapitulation</span><svg class="ar" width="9" height="6" viewBox="0 0 9 6" style="top:21px"><path d="M1 1L4.500 4.500L8 1" fill="none" stroke="#fff" stroke-width="1.300"/></svg></div><div class="si on">Daily</div><div class="si">Monthly</div></div><div class="mi"><svg class="ic" viewBox="0 0 13 13"><path d="M4.300 1.500H12.600L11 9.300H2.700Z" fill="#a7b1c2"/><path d="M2.900 3.300L0.700 9.800Q0.300 12.200 2.500 12.200H10.400L10.900 10.700H3Q1.800 10.700 2.200 9.500L3.600 3.300Z" fill="#a7b1c2"/></svg><span class="tx">Documents</span><svg class="ar" width="6" height="9" viewBox="0 0 6 9" style="top:19px"><path d="M5 1L1.500 4.500L5 8" fill="none" stroke="#a7b1c2" stroke-width="1.300"/></svg></div><div class="mi"><svg class="ic" viewBox="0 0 13 13"><path d="M4.300 1.500H12.600L11 9.300H2.700Z" fill="#a7b1c2"/><path d="M2.900 3.300L0.700 9.800Q0.300 12.200 2.500 12.200H10.400L10.900 10.700H3Q1.800 10.700 2.200 9.500L3.600 3.300Z" fill="#a7b1c2"/></svg><span class="tx">Asset</span><svg class="ar" width="6" height="9" viewBox="0 0 6 9" style="top:19px"><path d="M5 1L1.500 4.500L5 8" fill="none" stroke="#a7b1c2" stroke-width="1.300"/></svg></div><div class="mi"><svg class="ic" viewBox="0 0 13 13"><path d="M4.300 1.500H12.600L11 9.300H2.700Z" fill="#a7b1c2"/><path d="M2.900 3.300L0.700 9.800Q0.300 12.200 2.500 12.200H10.400L10.900 10.700H3Q1.800 10.700 2.200 9.500L3.600 3.300Z" fill="#a7b1c2"/></svg><span class="tx">Reports</span><svg class="ar" width="6" height="9" viewBox="0 0 6 9" style="top:19px"><path d="M5 1L1.500 4.500L5 8" fill="none" stroke="#a7b1c2" stroke-width="1.300"/></svg></div><div class="mi"><svg class="ic" viewBox="0 0 13 13"><path d="M4.300 1.500H12.600L11 9.300H2.700Z" fill="#a7b1c2"/><path d="M2.900 3.300L0.700 9.800Q0.300 12.200 2.500 12.200H10.400L10.900 10.700H3Q1.800 10.700 2.200 9.500L3.600 3.300Z" fill="#a7b1c2"/></svg><span class="tx">Guest Log</span></div><div class="mi"><svg class="ic" viewBox="0 0 13 13"><path d="M0.5 2 H12.5 V11.5 H0.5 Z" fill="#a7b1c2"/><path d="M1.8 5h2.6v1.5H1.8zM5.3 5h2.6v1.5H5.3zM8.8 5h2.6v1.5H8.8zM1.8 8h2.6v1.5H1.8zM5.3 8h2.6v1.5H5.3zM8.8 8h2.6v1.5H8.8z" fill="#2f4050"/></svg><span class="tx">Todo Lists</span></div><div class="mi"><svg class="ic" viewBox="0 0 13 13"><path d="M3 1.5h7V5H3z M1 5h11v5H10v2.5H3V10H1z" fill="#a7b1c2"/><path d="M4 8.5h5v3H4z" fill="#2f4050"/></svg><span class="tx">Presensi</span></div><div class="mi"><svg class="ic" viewBox="0 0 13 13"><path d="M4.300 1.500H12.600L11 9.300H2.700Z" fill="#a7b1c2"/><path d="M2.900 3.300L0.700 9.800Q0.300 12.200 2.500 12.200H10.400L10.900 10.700H3Q1.800 10.700 2.200 9.500L3.600 3.300Z" fill="#a7b1c2"/></svg><span class="tx">Job Schedule</span></div><div class="mi"><svg class="ic" viewBox="0 0 13 13"><path d="M1 7 L3 5 L5.3 7.4 L10.5 2 L12.5 4 L5.3 11.5 Z" fill="#a7b1c2"/></svg><span class="tx">Clock In</span></div><div class="mi"><svg class="ic" viewBox="0 0 13 13"><circle cx="6.5" cy="3.8" r="2.8" fill="#a7b1c2"/><path d="M1.5 12.5 C1.5 8 4 7 6.5 7 S11.5 8 11.5 12.5 Z" fill="#a7b1c2"/></svg><span class="tx">Users</span><svg class="ar" width="6" height="9" viewBox="0 0 6 9" style="top:19px"><path d="M5 1L1.500 4.500L5 8" fill="none" stroke="#a7b1c2" stroke-width="1.300"/></svg></div></div><div class="nav" style="height:58.53763440860203px"><div class="hb" style="left:20px;top:14px;width:39px;height:30px"><i style="top:9px"></i><i style="top:13.7px"></i><i style="top:18.4px"></i></div><div class="srch" style="left:76px;top:20px">Search for something...</div><div class="tr" style="right:41.899441340782005px;top:22px"><svg width="14" height="12" viewBox="0 0 14 12" style="vertical-align:-1px;margin-right:11px"><path d="M0 1h5v2H2v6h3v2H0z M5 4.5h4V2l5 4-5 4V7.500H5z" fill="#999c9e"/></svg>Logout</div><svg class="ab" style="right:145.899441340782px;top:24px" width="13" height="12" viewBox="0 0 15 13"><path d="M0 1h15v2H0zM0 5.500h15v2H0zM0 10h15v2H0z" fill="#999c9e"/></svg><div class="bdg" style="right:134.899441340782px;top:12px">2</div><svg class="ab" style="right:187.899441340782px;top:23px" width="14" height="14" viewBox="0 0 14 14"><path d="M7 0.500c-3 0-4.200 2.200-4.200 5 0 3-1.800 4-1.800 5h12c0-1-1.800-2-1.800-5 0-2.800-1.200-5-4.200-5zM5.300 11.700a1.800 1.800 0 0 0 3.400 0z" fill="#999c9e"/></svg><div class="bdg" style="right:178.899441340782px;top:12px">0</div></div><div class="ab" style="left:233.9px;top:61.5px;width:1270.9px;height:57.3px;background:#fff"></div><div class="ab" style="left:233.9px;top:120.6px;width:1270.9px;height:591.4px;background:#fff"></div><span class="t" style="left:250.3px;top:75.5px;color:#444;font-weight:bold">Bulan:</span><div class="ab" style="left:356.1px;top:77.0px;width:283.5px;height:32.9px;background:#fff;border:1px solid #e5e6e7;border-radius:2px"><span class="ab" style="left:17px;top:6px;font-size:14px;color:#555">September</span><svg class="ab" style="right:10px;top:12px" width="10" height="7" viewBox="0 0 10 7"><path d="M1 1l4 4 4-4" fill="none" stroke="#444" stroke-width="1.600"/></svg></div><div class="ab" style="left:254.9px;top:172.5px;width:1229.7px;height:1.3px;background:#e7eaec"></div><div class="ab" style="left:254.9px;top:135.4px;width:227.0px;height:38.7px;background:#fff;border:1px solid #e7eaec;border-bottom:none;border-radius:3px 3px 0 0"><span class="ab" style="left:0;right:0;top:9px;text-align:center;color:#555;font-weight:bold;font-size:12.5px;white-space:nowrap">Data Masuk Dengan Request</span></div><span class="t" style="left:509.8px;top:142.7px;color:#a7b1c2;font-weight:bold;font-size:12.5px">Data Masuk Tanpa Request</span><span class="t" id="rtitle" style="left:372.2px;top:178.6px;color:#3a3a3a;font-weight:bold;font-size:24.7px;line-height:28px;letter-spacing:0;color:#4a4a4a">Rekapitulasi Penerimaan Data Bulan September 2021 (Per Tanggal 15, Jam 12:33:05)</span><div class="ab" style="left:254.9px;top:215.4px;width:1229.1px;height:73.3px;background:#fff"></div><div class="ab" style="left:254.9px;top:215.4px;width:37.0px;height:73.3px;font-size:12px;color:#444;font-weight:bold;text-align:center;white-space:nowrap;letter-spacing:0;line-height:79.3px">No</div><div class="ab" style="left:291.9px;top:215.4px;width:75.4px;height:73.3px;font-size:12px;color:#444;font-weight:bold;text-align:center;white-space:nowrap;letter-spacing:0;line-height:79.3px">Lokasi</div><div class="ab" style="left:1432.3px;top:215.4px;width:51.7px;height:73.3px;font-size:12px;color:#444;font-weight:bold;text-align:center;white-space:nowrap;letter-spacing:0;line-height:79.3px">Total</div><div class="ab" style="left:367.3px;top:215.4px;width:1064.9px;height:37.6px;font-size:12px;color:#444;font-weight:bold;text-align:center;white-space:nowrap;letter-spacing:0;font-size:10.5px;font-weight:normal;line-height:39.6px">Tanggal</div><div class="ab" style="left:367.3px;top:253.0px;width:39.2px;height:35.6px;font-size:12px;color:#444;font-weight:bold;text-align:center;white-space:nowrap;letter-spacing:0;line-height:38.6px">1</div><div class="ab" style="left:406.5px;top:253.0px;width:39.2px;height:35.6px;font-size:12px;color:#444;font-weight:bold;text-align:center;white-space:nowrap;letter-spacing:0;line-height:38.6px">2</div><div class="ab" style="left:445.7px;top:253.0px;width:39.2px;height:35.6px;font-size:12px;color:#444;font-weight:bold;text-align:center;white-space:nowrap;letter-spacing:0;line-height:38.6px">3</div><div class="ab" style="left:484.9px;top:253.0px;width:39.2px;height:35.6px;font-size:12px;color:#444;font-weight:bold;text-align:center;white-space:nowrap;letter-spacing:0;line-height:38.6px">4</div><div class="ab" style="left:524.1px;top:253.0px;width:39.2px;height:35.6px;font-size:12px;color:#444;font-weight:bold;text-align:center;white-space:nowrap;letter-spacing:0;line-height:38.6px">5</div><div class="ab" style="left:563.3px;top:253.0px;width:39.2px;height:35.6px;font-size:12px;color:#444;font-weight:bold;text-align:center;white-space:nowrap;letter-spacing:0;line-height:38.6px">6</div><div class="ab" style="left:602.5px;top:253.0px;width:39.2px;height:35.6px;font-size:12px;color:#444;font-weight:bold;text-align:center;white-space:nowrap;letter-spacing:0;line-height:38.6px">7</div><div class="ab" style="left:641.7px;top:253.0px;width:39.2px;height:35.6px;font-size:12px;color:#444;font-weight:bold;text-align:center;white-space:nowrap;letter-spacing:0;line-height:38.6px">8</div><div class="ab" style="left:680.9px;top:253.0px;width:39.2px;height:35.6px;font-size:12px;color:#444;font-weight:bold;text-align:center;white-space:nowrap;letter-spacing:0;line-height:38.6px">9</div><div class="ab" style="left:720.1px;top:253.0px;width:39.2px;height:35.6px;font-size:12px;color:#444;font-weight:bold;text-align:center;white-space:nowrap;letter-spacing:0;line-height:38.6px">10</div><div class="ab" style="left:759.3px;top:253.0px;width:39.2px;height:35.6px;font-size:12px;color:#444;font-weight:bold;text-align:center;white-space:nowrap;letter-spacing:0;line-height:38.6px">11</div><div class="ab" style="left:798.5px;top:253.0px;width:39.2px;height:35.6px;font-size:12px;color:#444;font-weight:bold;text-align:center;white-space:nowrap;letter-spacing:0;line-height:38.6px">12</div><div class="ab" style="left:837.7px;top:253.0px;width:39.2px;height:35.6px;font-size:12px;color:#444;font-weight:bold;text-align:center;white-space:nowrap;letter-spacing:0;line-height:38.6px">13</div><div class="ab" style="left:876.9px;top:253.0px;width:39.2px;height:35.6px;font-size:12px;color:#444;font-weight:bold;text-align:center;white-space:nowrap;letter-spacing:0;line-height:38.6px">14</div><div class="ab" style="left:916.1px;top:253.0px;width:39.2px;height:35.6px;font-size:12px;color:#444;font-weight:bold;text-align:center;white-space:nowrap;letter-spacing:0;line-height:38.6px">15</div><div class="ab" style="left:955.3px;top:253.0px;width:31.8px;height:35.6px;font-size:12px;color:#444;font-weight:bold;text-align:center;white-space:nowrap;letter-spacing:0;line-height:38.6px">16</div><div class="ab" style="left:987.1px;top:253.0px;width:31.8px;height:35.6px;font-size:12px;color:#444;font-weight:bold;text-align:center;white-space:nowrap;letter-spacing:0;line-height:38.6px">17</div><div class="ab" style="left:1018.9px;top:253.0px;width:31.8px;height:35.6px;font-size:12px;color:#444;font-weight:bold;text-align:center;white-space:nowrap;letter-spacing:0;line-height:38.6px">18</div><div class="ab" style="left:1050.7px;top:253.0px;width:31.8px;height:35.6px;font-size:12px;color:#444;font-weight:bold;text-align:center;white-space:nowrap;letter-spacing:0;line-height:38.6px">19</div><div class="ab" style="left:1082.5px;top:253.0px;width:31.8px;height:35.6px;font-size:12px;color:#444;font-weight:bold;text-align:center;white-space:nowrap;letter-spacing:0;line-height:38.6px">20</div><div class="ab" style="left:1114.3px;top:253.0px;width:31.8px;height:35.6px;font-size:12px;color:#444;font-weight:bold;text-align:center;white-space:nowrap;letter-spacing:0;line-height:38.6px">21</div><div class="ab" style="left:1146.1px;top:253.0px;width:31.8px;height:35.6px;font-size:12px;color:#444;font-weight:bold;text-align:center;white-space:nowrap;letter-spacing:0;line-height:38.6px">22</div><div class="ab" style="left:1177.9px;top:253.0px;width:31.8px;height:35.6px;font-size:12px;color:#444;font-weight:bold;text-align:center;white-space:nowrap;letter-spacing:0;line-height:38.6px">23</div><div class="ab" style="left:1209.7px;top:253.0px;width:31.8px;height:35.6px;font-size:12px;color:#444;font-weight:bold;text-align:center;white-space:nowrap;letter-spacing:0;line-height:38.6px">24</div><div class="ab" style="left:1241.5px;top:253.0px;width:31.8px;height:35.6px;font-size:12px;color:#444;font-weight:bold;text-align:center;white-space:nowrap;letter-spacing:0;line-height:38.6px">25</div><div class="ab" style="left:1273.3px;top:253.0px;width:31.8px;height:35.6px;font-size:12px;color:#444;font-weight:bold;text-align:center;white-space:nowrap;letter-spacing:0;line-height:38.6px">26</div><div class="ab" style="left:1305.1px;top:253.0px;width:31.8px;height:35.6px;font-size:12px;color:#444;font-weight:bold;text-align:center;white-space:nowrap;letter-spacing:0;line-height:38.6px">27</div><div class="ab" style="left:1336.9px;top:253.0px;width:31.8px;height:35.6px;font-size:12px;color:#444;font-weight:bold;text-align:center;white-space:nowrap;letter-spacing:0;line-height:38.6px">28</div><div class="ab" style="left:1368.7px;top:253.0px;width:31.8px;height:35.6px;font-size:12px;color:#444;font-weight:bold;text-align:center;white-space:nowrap;letter-spacing:0;line-height:38.6px">29</div><div class="ab" style="left:1400.5px;top:253.0px;width:31.8px;height:35.6px;font-size:12px;color:#444;font-weight:bold;text-align:center;white-space:nowrap;letter-spacing:0;line-height:38.6px">30</div><div class="ab" style="left:254.9px;top:288.6px;width:112.4px;height:72.6px;background:#f9f9f9"></div><span class="t" style="left:265.4px;top:296.1px;color:#555">1</span><span class="t" style="left:298.9px;top:296.1px;color:#777;line-height:18.2px">Buoy<br>Malang<br>(MLG)</span><div class="ab" style="left:955.3px;top:288.6px;width:477.0px;height:72.6px;background:#767a7a"></div><div class="ab" style="left:367.3px;top:288.6px;width:40.0px;height:72.6px;background:#400000;color:#fff;font-size:12px;text-align:center;padding-top:10px;letter-spacing:0;border-left:1px solid rgba(0,0,0,.18)">0</div><div class="ab" style="left:406.5px;top:288.6px;width:40.0px;height:72.6px;background:#400000;color:#fff;font-size:12px;text-align:center;padding-top:10px;letter-spacing:0;border-left:1px solid rgba(0,0,0,.18)">0</div><div class="ab" style="left:445.7px;top:288.6px;width:40.0px;height:72.6px;background:#400000;color:#fff;font-size:12px;text-align:center;padding-top:10px;letter-spacing:0;border-left:1px solid rgba(0,0,0,.18)">0</div><div class="ab" style="left:484.9px;top:288.6px;width:40.0px;height:72.6px;background:#400000;color:#fff;font-size:12px;text-align:center;padding-top:10px;letter-spacing:0;border-left:1px solid rgba(0,0,0,.18)">0</div><div class="ab" style="left:524.1px;top:288.6px;width:40.0px;height:72.6px;background:#400000;color:#fff;font-size:12px;text-align:center;padding-top:10px;letter-spacing:0;border-left:1px solid rgba(0,0,0,.18)">0</div><div class="ab" style="left:563.3px;top:288.6px;width:40.0px;height:72.6px;background:#400000;color:#fff;font-size:12px;text-align:center;padding-top:10px;letter-spacing:0;border-left:1px solid rgba(0,0,0,.18)">0</div><div class="ab" style="left:602.5px;top:288.6px;width:40.0px;height:72.6px;background:#400000;color:#fff;font-size:12px;text-align:center;padding-top:10px;letter-spacing:0;border-left:1px solid rgba(0,0,0,.18)">0</div><div class="ab" style="left:641.7px;top:288.6px;width:40.0px;height:72.6px;background:#400000;color:#fff;font-size:12px;text-align:center;padding-top:10px;letter-spacing:0;border-left:1px solid rgba(0,0,0,.18)">0</div><div class="ab" style="left:680.9px;top:288.6px;width:40.0px;height:72.6px;background:#400000;color:#fff;font-size:12px;text-align:center;padding-top:10px;letter-spacing:0;border-left:1px solid rgba(0,0,0,.18)">0</div><div class="ab" style="left:720.1px;top:288.6px;width:40.0px;height:72.6px;background:#400000;color:#fff;font-size:12px;text-align:center;padding-top:10px;letter-spacing:0;border-left:1px solid rgba(0,0,0,.18)">0</div><div class="ab" style="left:759.3px;top:288.6px;width:40.0px;height:72.6px;background:#400000;color:#fff;font-size:12px;text-align:center;padding-top:10px;letter-spacing:0;border-left:1px solid rgba(0,0,0,.18)">0</div><div class="ab" style="left:798.5px;top:288.6px;width:40.0px;height:72.6px;background:#400000;color:#fff;font-size:12px;text-align:center;padding-top:10px;letter-spacing:0;border-left:1px solid rgba(0,0,0,.18)">0</div><div class="ab" style="left:837.7px;top:288.6px;width:40.0px;height:72.6px;background:#400000;color:#fff;font-size:12px;text-align:center;padding-top:10px;letter-spacing:0;border-left:1px solid rgba(0,0,0,.18)">0</div><div class="ab" style="left:876.9px;top:288.6px;width:40.0px;height:72.6px;background:#400000;color:#fff;font-size:12px;text-align:center;padding-top:10px;letter-spacing:0;border-left:1px solid rgba(0,0,0,.18)">0</div><div class="ab" style="left:916.1px;top:288.6px;width:40.0px;height:72.6px;background:#400000;color:#fff;font-size:12px;text-align:center;padding-top:10px;letter-spacing:0;border-left:1px solid rgba(0,0,0,.18)">0</div><div class="ab" style="left:1432.3px;top:288.6px;width:51.7px;height:72.6px;background:#400000;color:#fff;font-size:12px;text-align:center;padding-top:10px;letter-spacing:0">0%</div><div class="ab" style="left:254.9px;top:360.6px;width:1229.1px;height:1.3px;background:rgba(255,255,255,.55)"></div><div class="ab" style="left:254.9px;top:361.2px;width:112.4px;height:107.5px;background:#fff"></div><span class="t" style="left:265.4px;top:368.7px;color:#555">2</span><span class="t" style="left:298.9px;top:368.7px;color:#777;line-height:18.2px">Buoy<br>Gunung<br>Anak<br>Krakatau<br>(GAK)</span><div class="ab" style="left:955.3px;top:361.2px;width:477.0px;height:107.5px;background:#767a7a"></div><div class="ab" style="left:367.3px;top:361.2px;width:40.0px;height:107.5px;background:#00e000;color:#1c3f1c;font-size:12px;text-align:center;padding-top:10px;letter-spacing:0;border-left:1px solid rgba(0,0,0,.18)">100</div><div class="ab" style="left:406.5px;top:361.2px;width:40.0px;height:107.5px;background:#00e000;color:#1c3f1c;font-size:12px;text-align:center;padding-top:10px;letter-spacing:0;border-left:1px solid rgba(0,0,0,.18)">100</div><div class="ab" style="left:445.7px;top:361.2px;width:40.0px;height:107.5px;background:#00e000;color:#1c3f1c;font-size:12px;text-align:center;padding-top:10px;letter-spacing:0;border-left:1px solid rgba(0,0,0,.18)">100</div><div class="ab" style="left:484.9px;top:361.2px;width:40.0px;height:107.5px;background:#00e000;color:#1c3f1c;font-size:12px;text-align:center;padding-top:10px;letter-spacing:0;border-left:1px solid rgba(0,0,0,.18)">100</div><div class="ab" style="left:524.1px;top:361.2px;width:40.0px;height:107.5px;background:#00e000;color:#1c3f1c;font-size:12px;text-align:center;padding-top:10px;letter-spacing:0;border-left:1px solid rgba(0,0,0,.18)">100</div><div class="ab" style="left:563.3px;top:361.2px;width:40.0px;height:107.5px;background:#00e000;color:#1c3f1c;font-size:12px;text-align:center;padding-top:10px;letter-spacing:0;border-left:1px solid rgba(0,0,0,.18)">100</div><div class="ab" style="left:602.5px;top:361.2px;width:40.0px;height:107.5px;background:#00e000;color:#1c3f1c;font-size:12px;text-align:center;padding-top:10px;letter-spacing:0;border-left:1px solid rgba(0,0,0,.18)">100</div><div class="ab" style="left:641.7px;top:361.2px;width:40.0px;height:107.5px;background:#00e000;color:#1c3f1c;font-size:12px;text-align:center;padding-top:10px;letter-spacing:0;border-left:1px solid rgba(0,0,0,.18)">100</div><div class="ab" style="left:680.9px;top:361.2px;width:40.0px;height:107.5px;background:#00e000;color:#1c3f1c;font-size:12px;text-align:center;padding-top:10px;letter-spacing:0;border-left:1px solid rgba(0,0,0,.18)">100</div><div class="ab" style="left:720.1px;top:361.2px;width:40.0px;height:107.5px;background:#00e000;color:#1c3f1c;font-size:12px;text-align:center;padding-top:10px;letter-spacing:0;border-left:1px solid rgba(0,0,0,.18)">100</div><div class="ab" style="left:759.3px;top:361.2px;width:40.0px;height:107.5px;background:#00e000;color:#1c3f1c;font-size:12px;text-align:center;padding-top:10px;letter-spacing:0;border-left:1px solid rgba(0,0,0,.18)">100</div><div class="ab" style="left:798.5px;top:361.2px;width:40.0px;height:107.5px;background:#00e000;color:#1c3f1c;font-size:12px;text-align:center;padding-top:10px;letter-spacing:0;border-left:1px solid rgba(0,0,0,.18)">100</div><div class="ab" style="left:837.7px;top:361.2px;width:40.0px;height:107.5px;background:#00e000;color:#1c3f1c;font-size:12px;text-align:center;padding-top:10px;letter-spacing:0;border-left:1px solid rgba(0,0,0,.18)">100</div><div class="ab" style="left:876.9px;top:361.2px;width:40.0px;height:107.5px;background:#00e000;color:#1c3f1c;font-size:12px;text-align:center;padding-top:10px;letter-spacing:0;border-left:1px solid rgba(0,0,0,.18)">100</div><div class="ab" style="left:916.1px;top:361.2px;width:40.0px;height:107.5px;background:#00e000;color:#1c3f1c;font-size:12px;text-align:center;padding-top:10px;letter-spacing:0;border-left:1px solid rgba(0,0,0,.18)">100</div><div class="ab" style="left:1432.3px;top:361.2px;width:51.7px;height:107.5px;background:#00e000;color:#1c3f1c;font-size:12px;text-align:center;padding-top:10px;letter-spacing:0">100%</div><div class="ab" style="left:254.9px;top:468.1px;width:1229.1px;height:1.3px;background:rgba(255,255,255,.55)"></div><div class="ab" style="left:254.9px;top:468.8px;width:112.4px;height:93.4px;background:#f9f9f9"></div><span class="t" style="left:265.4px;top:476.3px;color:#555">3</span><span class="t" style="left:298.9px;top:476.3px;color:#777;line-height:18.2px">Buoy<br>Selat<br>Sunda<br>(SUN)</span><div class="ab" style="left:955.3px;top:468.8px;width:477.0px;height:93.4px;background:#767a7a"></div><div class="ab" style="left:367.3px;top:468.8px;width:40.0px;height:93.4px;background:#00e000;color:#1c3f1c;font-size:12px;text-align:center;padding-top:10px;letter-spacing:0;border-left:1px solid rgba(0,0,0,.18)">100</div><div class="ab" style="left:406.5px;top:468.8px;width:40.0px;height:93.4px;background:#00e000;color:#1c3f1c;font-size:12px;text-align:center;padding-top:10px;letter-spacing:0;border-left:1px solid rgba(0,0,0,.18)">100</div><div class="ab" style="left:445.7px;top:468.8px;width:40.0px;height:93.4px;background:#00e000;color:#1c3f1c;font-size:12px;text-align:center;padding-top:10px;letter-spacing:0;border-left:1px solid rgba(0,0,0,.18)">100</div><div class="ab" style="left:484.9px;top:468.8px;width:40.0px;height:93.4px;background:#00e000;color:#1c3f1c;font-size:12px;text-align:center;padding-top:10px;letter-spacing:0;border-left:1px solid rgba(0,0,0,.18)">100</div><div class="ab" style="left:524.1px;top:468.8px;width:40.0px;height:93.4px;background:#00e000;color:#1c3f1c;font-size:12px;text-align:center;padding-top:10px;letter-spacing:0;border-left:1px solid rgba(0,0,0,.18)">100</div><div class="ab" style="left:563.3px;top:468.8px;width:40.0px;height:93.4px;background:#00e000;color:#1c3f1c;font-size:12px;text-align:center;padding-top:10px;letter-spacing:0;border-left:1px solid rgba(0,0,0,.18)">100</div><div class="ab" style="left:602.5px;top:468.8px;width:40.0px;height:93.4px;background:#00e000;color:#1c3f1c;font-size:12px;text-align:center;padding-top:10px;letter-spacing:0;border-left:1px solid rgba(0,0,0,.18)">100</div><div class="ab" style="left:641.7px;top:468.8px;width:40.0px;height:93.4px;background:#00e000;color:#1c3f1c;font-size:12px;text-align:center;padding-top:10px;letter-spacing:0;border-left:1px solid rgba(0,0,0,.18)">100</div><div class="ab" style="left:680.9px;top:468.8px;width:40.0px;height:93.4px;background:#a914f2;color:#fff;font-size:12px;text-align:center;padding-top:10px;letter-spacing:0;border-left:1px solid rgba(0,0,0,.18)">104</div><div class="ab" style="left:720.1px;top:468.8px;width:40.0px;height:93.4px;background:#00e000;color:#1c3f1c;font-size:12px;text-align:center;padding-top:10px;letter-spacing:0;border-left:1px solid rgba(0,0,0,.18)">100</div><div class="ab" style="left:759.3px;top:468.8px;width:40.0px;height:93.4px;background:#a914f2;color:#fff;font-size:12px;text-align:center;padding-top:10px;letter-spacing:0;border-left:1px solid rgba(0,0,0,.18)">104</div><div class="ab" style="left:798.5px;top:468.8px;width:40.0px;height:93.4px;background:#00e000;color:#1c3f1c;font-size:12px;text-align:center;padding-top:10px;letter-spacing:0;border-left:1px solid rgba(0,0,0,.18)">100</div><div class="ab" style="left:837.7px;top:468.8px;width:40.0px;height:93.4px;background:#00e000;color:#1c3f1c;font-size:12px;text-align:center;padding-top:10px;letter-spacing:0;border-left:1px solid rgba(0,0,0,.18)">100</div><div class="ab" style="left:876.9px;top:468.8px;width:40.0px;height:93.4px;background:#00e000;color:#1c3f1c;font-size:12px;text-align:center;padding-top:10px;letter-spacing:0;border-left:1px solid rgba(0,0,0,.18)">100</div><div class="ab" style="left:916.1px;top:468.8px;width:40.0px;height:93.4px;background:#00e000;color:#1c3f1c;font-size:12px;text-align:center;padding-top:10px;letter-spacing:0;border-left:1px solid rgba(0,0,0,.18)">100</div><div class="ab" style="left:1432.3px;top:468.8px;width:51.7px;height:93.4px;background:#a914f2;color:#fff;font-size:12px;text-align:center;padding-top:10px;letter-spacing:0">101%</div><div class="ab" style="left:254.9px;top:561.5px;width:1229.1px;height:1.3px;background:rgba(255,255,255,.55)"></div><div class="ab" style="left:254.9px;top:562.2px;width:112.4px;height:90.7px;background:#fff"></div><span class="t" style="left:265.4px;top:569.7px;color:#555">4</span><span class="t" style="left:298.9px;top:569.7px;color:#777;line-height:18.2px">Buoy<br>Selatan<br>Cilacap<br>(CXP)</span><div class="ab" style="left:955.3px;top:562.2px;width:477.0px;height:90.7px;background:#767a7a"></div><div class="ab" style="left:367.3px;top:562.2px;width:40.0px;height:90.7px;background:#adff2f;color:#1c3f1c;font-size:12px;text-align:center;padding-top:10px;letter-spacing:0;border-left:1px solid rgba(0,0,0,.18)">88</div><div class="ab" style="left:406.5px;top:562.2px;width:40.0px;height:90.7px;background:#00e000;color:#1c3f1c;font-size:12px;text-align:center;padding-top:10px;letter-spacing:0;border-left:1px solid rgba(0,0,0,.18)">100</div><div class="ab" style="left:445.7px;top:562.2px;width:40.0px;height:90.7px;background:#a914f2;color:#fff;font-size:12px;text-align:center;padding-top:10px;letter-spacing:0;border-left:1px solid rgba(0,0,0,.18)">133</div><div class="ab" style="left:484.9px;top:562.2px;width:40.0px;height:90.7px;background:#00e000;color:#1c3f1c;font-size:12px;text-align:center;padding-top:10px;letter-spacing:0;border-left:1px solid rgba(0,0,0,.18)">92</div><div class="ab" style="left:524.1px;top:562.2px;width:40.0px;height:90.7px;background:#00e000;color:#1c3f1c;font-size:12px;text-align:center;padding-top:10px;letter-spacing:0;border-left:1px solid rgba(0,0,0,.18)">96</div><div class="ab" style="left:563.3px;top:562.2px;width:40.0px;height:90.7px;background:#00e000;color:#1c3f1c;font-size:12px;text-align:center;padding-top:10px;letter-spacing:0;border-left:1px solid rgba(0,0,0,.18)">92</div><div class="ab" style="left:602.5px;top:562.2px;width:40.0px;height:90.7px;background:#00e000;color:#1c3f1c;font-size:12px;text-align:center;padding-top:10px;letter-spacing:0;border-left:1px solid rgba(0,0,0,.18)">92</div><div class="ab" style="left:641.7px;top:562.2px;width:40.0px;height:90.7px;background:#00e000;color:#1c3f1c;font-size:12px;text-align:center;padding-top:10px;letter-spacing:0;border-left:1px solid rgba(0,0,0,.18)">96</div><div class="ab" style="left:680.9px;top:562.2px;width:40.0px;height:90.7px;background:#00e000;color:#1c3f1c;font-size:12px;text-align:center;padding-top:10px;letter-spacing:0;border-left:1px solid rgba(0,0,0,.18)">92</div><div class="ab" style="left:720.1px;top:562.2px;width:40.0px;height:90.7px;background:#00e000;color:#1c3f1c;font-size:12px;text-align:center;padding-top:10px;letter-spacing:0;border-left:1px solid rgba(0,0,0,.18)">96</div><div class="ab" style="left:759.3px;top:562.2px;width:40.0px;height:90.7px;background:#00e000;color:#1c3f1c;font-size:12px;text-align:center;padding-top:10px;letter-spacing:0;border-left:1px solid rgba(0,0,0,.18)">92</div><div class="ab" style="left:798.5px;top:562.2px;width:40.0px;height:90.7px;background:#00e000;color:#1c3f1c;font-size:12px;text-align:center;padding-top:10px;letter-spacing:0;border-left:1px solid rgba(0,0,0,.18)">92</div><div class="ab" style="left:837.7px;top:562.2px;width:40.0px;height:90.7px;background:#00e000;color:#1c3f1c;font-size:12px;text-align:center;padding-top:10px;letter-spacing:0;border-left:1px solid rgba(0,0,0,.18)">92</div><div class="ab" style="left:876.9px;top:562.2px;width:40.0px;height:90.7px;background:#00e000;color:#1c3f1c;font-size:12px;text-align:center;padding-top:10px;letter-spacing:0;border-left:1px solid rgba(0,0,0,.18)">96</div><div class="ab" style="left:916.1px;top:562.2px;width:40.0px;height:90.7px;background:#00e000;color:#1c3f1c;font-size:12px;text-align:center;padding-top:10px;letter-spacing:0;border-left:1px solid rgba(0,0,0,.18)">92</div><div class="ab" style="left:1432.3px;top:562.2px;width:51.7px;height:90.7px;background:#00e000;color:#1c3f1c;font-size:12px;text-align:center;padding-top:10px;letter-spacing:0">96%</div><div class="ab" style="left:254.9px;top:652.2px;width:1229.1px;height:1.3px;background:rgba(255,255,255,.55)"></div><div class="ab" style="left:986.5px;top:288.6px;width:1.1px;height:364.2px;background:#707474"></div><div class="ab" style="left:1018.3px;top:288.6px;width:1.1px;height:364.2px;background:#707474"></div><div class="ab" style="left:1050.1px;top:288.6px;width:1.1px;height:364.2px;background:#707474"></div><div class="ab" style="left:1081.9px;top:288.6px;width:1.1px;height:364.2px;background:#707474"></div><div class="ab" style="left:1113.7px;top:288.6px;width:1.1px;height:364.2px;background:#5f6363"></div><div class="ab" style="left:1145.5px;top:288.6px;width:1.1px;height:364.2px;background:#707474"></div><div class="ab" style="left:1177.3px;top:288.6px;width:1.1px;height:364.2px;background:#707474"></div><div class="ab" style="left:1209.1px;top:288.6px;width:1.1px;height:364.2px;background:#707474"></div><div class="ab" style="left:1240.9px;top:288.6px;width:1.1px;height:364.2px;background:#707474"></div><div class="ab" style="left:1272.7px;top:288.6px;width:1.1px;height:364.2px;background:#5f6363"></div><div class="ab" style="left:1304.5px;top:288.6px;width:1.1px;height:364.2px;background:#707474"></div><div class="ab" style="left:1336.3px;top:288.6px;width:1.1px;height:364.2px;background:#707474"></div><div class="ab" style="left:1368.1px;top:288.6px;width:1.1px;height:364.2px;background:#707474"></div><div class="ab" style="left:1399.9px;top:288.6px;width:1.1px;height:364.2px;background:#707474"></div><div class="ab" style="left:254.9px;top:214.7px;width:1229.1px;height:1.3px;background:#3b3b3b"></div><div class="ab" style="left:254.9px;top:288.0px;width:1229.1px;height:1.3px;background:#3b3b3b"></div><div class="ab" style="left:367.3px;top:252.4px;width:1064.9px;height:1.3px;background:#3b3b3b"></div><div class="ab" style="left:254.2px;top:215.4px;width:1.4px;height:437.5px;background:#3b3b3b"></div><div class="ab" style="left:1483.2px;top:215.4px;width:1.4px;height:437.5px;background:#999"></div><div class="ab" style="left:289.5px;top:215.4px;width:1.4px;height:437.5px;background:#3b3b3b"></div><div class="ab" style="left:292.9px;top:215.4px;width:1.4px;height:437.5px;background:#888"></div><div class="ab" style="left:364.1px;top:215.4px;width:1.4px;height:437.5px;background:#3b3b3b"></div><div class="ab" style="left:367.5px;top:215.4px;width:1.4px;height:73.3px;background:#3b3b3b"></div><div class="ab" style="left:1431.6px;top:215.4px;width:1.4px;height:437.5px;background:#777"></div><div class="ab" style="left:254.9px;top:652.2px;width:112.4px;height:1.3px;background:#999"></div><div class="ab" style="left:405.9px;top:253.0px;width:1.3px;height:35.6px;background:#444"></div><div class="ab" style="left:445.1px;top:253.0px;width:1.3px;height:35.6px;background:#444"></div><div class="ab" style="left:484.3px;top:253.0px;width:1.3px;height:35.6px;background:#444"></div><div class="ab" style="left:523.5px;top:253.0px;width:1.3px;height:35.6px;background:#444"></div><div class="ab" style="left:562.7px;top:253.0px;width:1.3px;height:35.6px;background:#444"></div><div class="ab" style="left:601.9px;top:253.0px;width:1.3px;height:35.6px;background:#444"></div><div class="ab" style="left:641.1px;top:253.0px;width:1.3px;height:35.6px;background:#444"></div><div class="ab" style="left:680.3px;top:253.0px;width:1.3px;height:35.6px;background:#444"></div><div class="ab" style="left:719.5px;top:253.0px;width:1.3px;height:35.6px;background:#444"></div><div class="ab" style="left:758.7px;top:253.0px;width:1.3px;height:35.6px;background:#444"></div><div class="ab" style="left:797.9px;top:253.0px;width:1.3px;height:35.6px;background:#444"></div><div class="ab" style="left:837.1px;top:253.0px;width:1.3px;height:35.6px;background:#444"></div><div class="ab" style="left:876.3px;top:253.0px;width:1.3px;height:35.6px;background:#444"></div><div class="ab" style="left:915.5px;top:253.0px;width:1.3px;height:35.6px;background:#444"></div><div class="ab" style="left:954.7px;top:253.0px;width:1.3px;height:35.6px;background:#444"></div><div class="ab" style="left:986.5px;top:253.0px;width:1.3px;height:35.6px;background:#999"></div><div class="ab" style="left:1018.3px;top:253.0px;width:1.3px;height:35.6px;background:#999"></div><div class="ab" style="left:1050.1px;top:253.0px;width:1.3px;height:35.6px;background:#999"></div><div class="ab" style="left:1081.9px;top:253.0px;width:1.3px;height:35.6px;background:#999"></div><div class="ab" style="left:1113.7px;top:253.0px;width:1.3px;height:35.6px;background:#999"></div><div class="ab" style="left:1145.5px;top:253.0px;width:1.3px;height:35.6px;background:#999"></div><div class="ab" style="left:1177.3px;top:253.0px;width:1.3px;height:35.6px;background:#999"></div><div class="ab" style="left:1209.1px;top:253.0px;width:1.3px;height:35.6px;background:#999"></div><div class="ab" style="left:1240.9px;top:253.0px;width:1.3px;height:35.6px;background:#999"></div><div class="ab" style="left:1272.6px;top:253.0px;width:1.3px;height:35.6px;background:#999"></div><div class="ab" style="left:1304.4px;top:253.0px;width:1.3px;height:35.6px;background:#999"></div><div class="ab" style="left:1336.2px;top:253.0px;width:1.3px;height:35.6px;background:#999"></div><div class="ab" style="left:1368.0px;top:253.0px;width:1.3px;height:35.6px;background:#999"></div><div class="ab" style="left:1399.8px;top:253.0px;width:1.3px;height:35.6px;background:#999"></div><div class="ab" style="left:953.9px;top:253.0px;width:2.8px;height:35.6px;background:#555"></div><div class="ab" style="left:1112.9px;top:253.0px;width:2.8px;height:35.6px;background:#888"></div><div class="ab" style="left:1271.9px;top:253.0px;width:2.8px;height:35.6px;background:#888"></div><div class="ab" style="left:245.1px;top:673.1px;width:104.1px;height:18.8px;background:#400000;color:#fff;font-size:12px;text-align:center;line-height:18.8px;letter-spacing:0;white-space:nowrap">0 - 10 %</div><div class="ab" style="left:358.9px;top:673.1px;width:104.1px;height:18.8px;background:#8b0000;color:#fff;font-size:12px;text-align:center;line-height:18.8px;letter-spacing:0;white-space:nowrap">11 - 55 %</div><div class="ab" style="left:474.2px;top:673.1px;width:104.1px;height:18.8px;background:#ff9900;color:#7a4a00;font-size:12px;text-align:center;line-height:18.8px;letter-spacing:0;white-space:nowrap">56 - 65 %</div><div class="ab" style="left:587.3px;top:673.1px;width:106.1px;height:18.8px;background:#f2f200;color:#6a6a00;font-size:12px;text-align:center;line-height:18.8px;letter-spacing:0;white-space:nowrap">66 - 80 %</div><div class="ab" style="left:703.9px;top:673.1px;width:103.4px;height:18.8px;background:#adff2f;color:#466a00;font-size:12px;text-align:center;line-height:18.8px;letter-spacing:0;white-space:nowrap">81 - 90 %</div><div class="ab" style="left:817.7px;top:673.1px;width:106.1px;height:18.8px;background:#00e000;color:#0a5a0a;font-size:12px;text-align:center;line-height:18.8px;letter-spacing:0;white-space:nowrap">91 - 100 %</div><div class="ab" style="left:933.7px;top:673.1px;width:103.4px;height:18.8px;background:#a914f2;color:#fff;font-size:12px;text-align:center;line-height:18.8px;letter-spacing:0;white-space:nowrap">> 100%</div></div></div><div style="position:absolute;left:311px;top:632px;width:1px;height:1px;background:#333"></div></body></html>
